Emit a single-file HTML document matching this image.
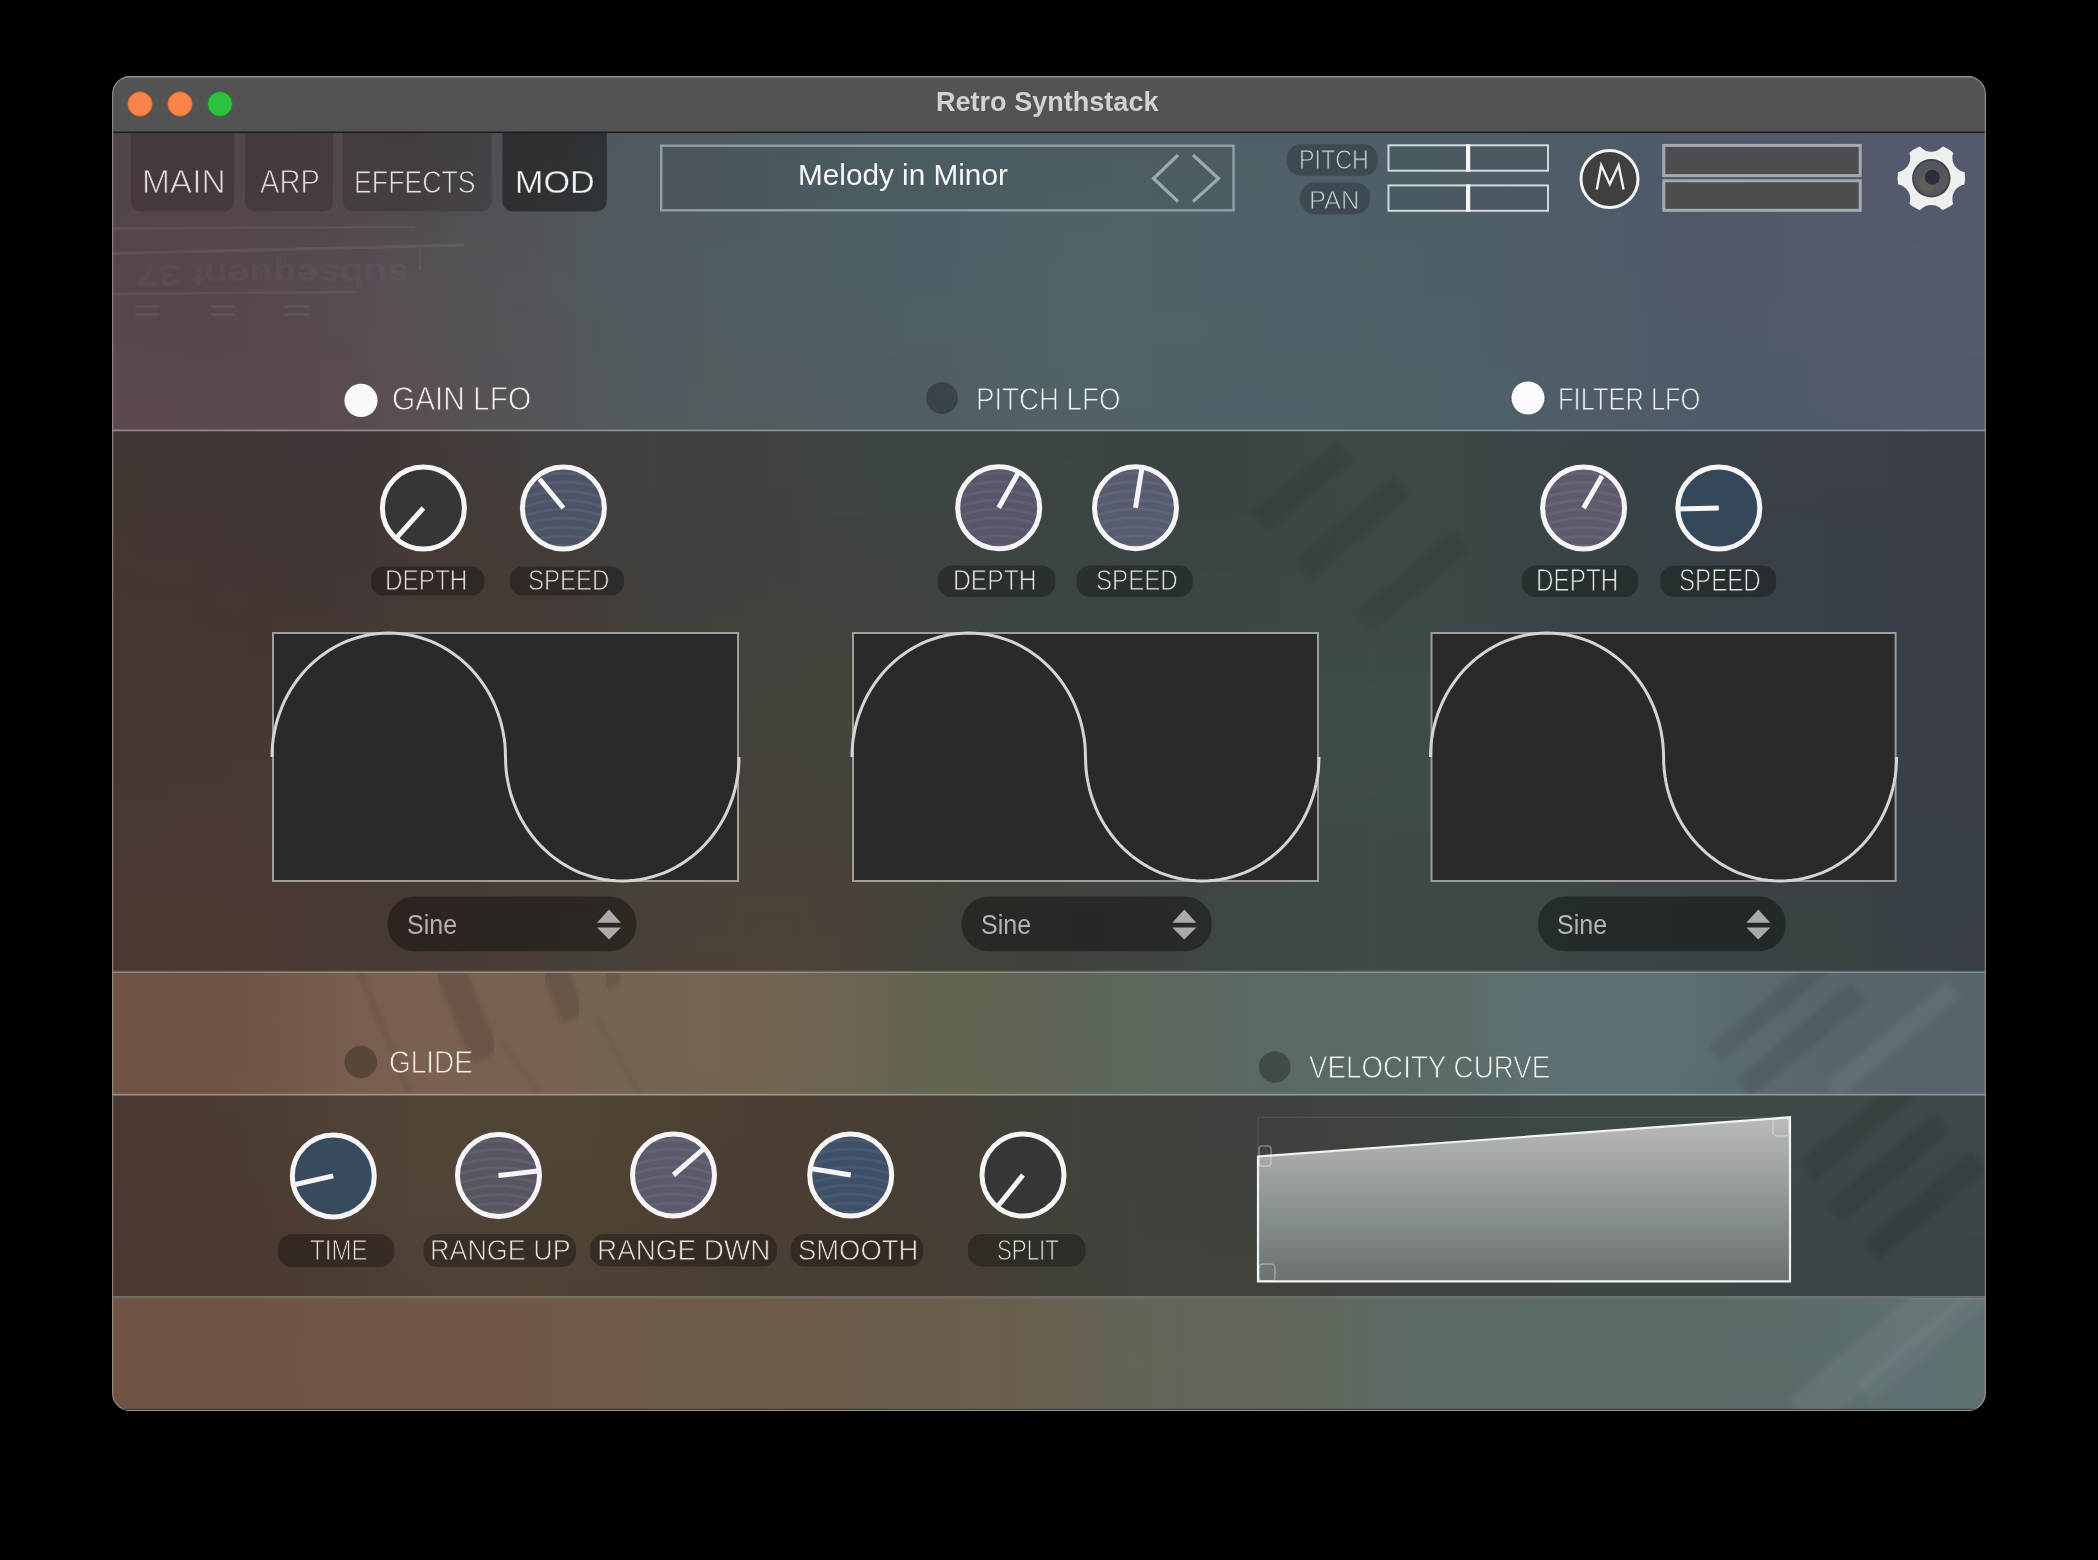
<!DOCTYPE html>
<html><head><meta charset="utf-8"><title>Retro Synthstack</title>
<style>
html,body{margin:0;padding:0;background:#000;width:2098px;height:1560px;overflow:hidden}
#win{position:absolute;left:0;top:0;width:2098px;height:1560px;clip-path:inset(76px 112px 149px 112px round 18px)}
.s{position:absolute;left:0;top:0}
.t{position:absolute;white-space:nowrap;font-family:'Liberation Sans', sans-serif;transform-origin:0 0}
</style></head><body>
<div id="win">
<svg class="s" width="2098" height="1560" viewBox="0 0 2098 1560"><defs><linearGradient id="b0" gradientUnits="userSpaceOnUse" x1="112" y1="0" x2="1986" y2="0"><stop offset="0.0000" stop-color="#52454b"/><stop offset="0.0320" stop-color="#51444a"/><stop offset="0.0640" stop-color="#51454b"/><stop offset="0.0961" stop-color="#51474d"/><stop offset="0.1281" stop-color="#50484e"/><stop offset="0.1601" stop-color="#4f484e"/><stop offset="0.1921" stop-color="#504c52"/><stop offset="0.2241" stop-color="#505358"/><stop offset="0.2561" stop-color="#50575d"/><stop offset="0.2882" stop-color="#4f595f"/><stop offset="0.3202" stop-color="#4f5a60"/><stop offset="0.3522" stop-color="#4f5c62"/><stop offset="0.3842" stop-color="#4e5e64"/><stop offset="0.4162" stop-color="#4e5f65"/><stop offset="0.4482" stop-color="#4e5f66"/><stop offset="0.4803" stop-color="#4f6066"/><stop offset="0.5123" stop-color="#506067"/><stop offset="0.5443" stop-color="#506067"/><stop offset="0.5763" stop-color="#4f6067"/><stop offset="0.6083" stop-color="#4f5f67"/><stop offset="0.6403" stop-color="#4f5f67"/><stop offset="0.6724" stop-color="#4f5f67"/><stop offset="0.7044" stop-color="#4f5f67"/><stop offset="0.7364" stop-color="#4f5e68"/><stop offset="0.7684" stop-color="#4f5d68"/><stop offset="0.8004" stop-color="#4f5b68"/><stop offset="0.8324" stop-color="#4f5968"/><stop offset="0.8645" stop-color="#505968"/><stop offset="0.8965" stop-color="#51596a"/><stop offset="0.9285" stop-color="#53596b"/><stop offset="0.9605" stop-color="#54596d"/><stop offset="0.9925" stop-color="#54596d"/><stop offset="1.0000" stop-color="#54596d"/></linearGradient><linearGradient id="b1" gradientUnits="userSpaceOnUse" x1="112" y1="0" x2="1986" y2="0"><stop offset="0.0000" stop-color="#52454b"/><stop offset="0.0320" stop-color="#51444a"/><stop offset="0.0640" stop-color="#51454b"/><stop offset="0.0961" stop-color="#51474d"/><stop offset="0.1281" stop-color="#50484e"/><stop offset="0.1601" stop-color="#4f494e"/><stop offset="0.1921" stop-color="#504d52"/><stop offset="0.2241" stop-color="#505359"/><stop offset="0.2561" stop-color="#50585d"/><stop offset="0.2882" stop-color="#4f595f"/><stop offset="0.3202" stop-color="#4f5b60"/><stop offset="0.3522" stop-color="#4f5c62"/><stop offset="0.3842" stop-color="#4e5e64"/><stop offset="0.4162" stop-color="#4e5f65"/><stop offset="0.4482" stop-color="#4e6066"/><stop offset="0.4803" stop-color="#4f6066"/><stop offset="0.5123" stop-color="#506067"/><stop offset="0.5443" stop-color="#506067"/><stop offset="0.5763" stop-color="#506067"/><stop offset="0.6083" stop-color="#4f6067"/><stop offset="0.6403" stop-color="#4f5f67"/><stop offset="0.6724" stop-color="#4f5f67"/><stop offset="0.7044" stop-color="#4f5f67"/><stop offset="0.7364" stop-color="#4f5e68"/><stop offset="0.7684" stop-color="#4f5d68"/><stop offset="0.8004" stop-color="#4f5b68"/><stop offset="0.8324" stop-color="#4f5968"/><stop offset="0.8645" stop-color="#4f5968"/><stop offset="0.8965" stop-color="#51596a"/><stop offset="0.9285" stop-color="#53596c"/><stop offset="0.9605" stop-color="#54596d"/><stop offset="0.9925" stop-color="#54596d"/><stop offset="1.0000" stop-color="#55596d"/></linearGradient><linearGradient id="b2" gradientUnits="userSpaceOnUse" x1="112" y1="0" x2="1986" y2="0"><stop offset="0.0000" stop-color="#52454b"/><stop offset="0.0320" stop-color="#51444a"/><stop offset="0.0640" stop-color="#52454b"/><stop offset="0.0961" stop-color="#52474d"/><stop offset="0.1281" stop-color="#50484e"/><stop offset="0.1601" stop-color="#50494f"/><stop offset="0.1921" stop-color="#514d53"/><stop offset="0.2241" stop-color="#515459"/><stop offset="0.2561" stop-color="#50585d"/><stop offset="0.2882" stop-color="#4f595f"/><stop offset="0.3202" stop-color="#4f5b60"/><stop offset="0.3522" stop-color="#4e5d62"/><stop offset="0.3842" stop-color="#4e5e64"/><stop offset="0.4162" stop-color="#4e5f66"/><stop offset="0.4482" stop-color="#4e6066"/><stop offset="0.4803" stop-color="#4f6067"/><stop offset="0.5123" stop-color="#506167"/><stop offset="0.5443" stop-color="#506168"/><stop offset="0.5763" stop-color="#506067"/><stop offset="0.6083" stop-color="#4f6067"/><stop offset="0.6403" stop-color="#4f5f67"/><stop offset="0.6724" stop-color="#4f5f67"/><stop offset="0.7044" stop-color="#4f5f67"/><stop offset="0.7364" stop-color="#4f5e68"/><stop offset="0.7684" stop-color="#4f5d68"/><stop offset="0.8004" stop-color="#4f5b68"/><stop offset="0.8324" stop-color="#4f5968"/><stop offset="0.8645" stop-color="#4f5968"/><stop offset="0.8965" stop-color="#51596a"/><stop offset="0.9285" stop-color="#53596c"/><stop offset="0.9605" stop-color="#54596d"/><stop offset="0.9925" stop-color="#55596d"/><stop offset="1.0000" stop-color="#55596d"/></linearGradient><linearGradient id="b3" gradientUnits="userSpaceOnUse" x1="112" y1="0" x2="1986" y2="0"><stop offset="0.0000" stop-color="#53454b"/><stop offset="0.0320" stop-color="#52454b"/><stop offset="0.0640" stop-color="#52464b"/><stop offset="0.0961" stop-color="#52474d"/><stop offset="0.1281" stop-color="#51484e"/><stop offset="0.1601" stop-color="#50494f"/><stop offset="0.1921" stop-color="#514e53"/><stop offset="0.2241" stop-color="#515459"/><stop offset="0.2561" stop-color="#50585d"/><stop offset="0.2882" stop-color="#4f5a5f"/><stop offset="0.3202" stop-color="#4f5b60"/><stop offset="0.3522" stop-color="#4e5d62"/><stop offset="0.3842" stop-color="#4e5e64"/><stop offset="0.4162" stop-color="#4e5f66"/><stop offset="0.4482" stop-color="#4e6066"/><stop offset="0.4803" stop-color="#4f6067"/><stop offset="0.5123" stop-color="#506167"/><stop offset="0.5443" stop-color="#506168"/><stop offset="0.5763" stop-color="#506068"/><stop offset="0.6083" stop-color="#4f6067"/><stop offset="0.6403" stop-color="#4f5f67"/><stop offset="0.6724" stop-color="#4f5f67"/><stop offset="0.7044" stop-color="#4f5f67"/><stop offset="0.7364" stop-color="#4f5e68"/><stop offset="0.7684" stop-color="#4f5d68"/><stop offset="0.8004" stop-color="#4f5b68"/><stop offset="0.8324" stop-color="#4f5968"/><stop offset="0.8645" stop-color="#4f5868"/><stop offset="0.8965" stop-color="#51596a"/><stop offset="0.9285" stop-color="#53596c"/><stop offset="0.9605" stop-color="#54596d"/><stop offset="0.9925" stop-color="#55596d"/><stop offset="1.0000" stop-color="#55596d"/></linearGradient><linearGradient id="b4" gradientUnits="userSpaceOnUse" x1="112" y1="0" x2="1986" y2="0"><stop offset="0.0000" stop-color="#53454b"/><stop offset="0.0320" stop-color="#53454b"/><stop offset="0.0640" stop-color="#53464c"/><stop offset="0.0961" stop-color="#52484d"/><stop offset="0.1281" stop-color="#51494f"/><stop offset="0.1601" stop-color="#514a50"/><stop offset="0.1921" stop-color="#524e54"/><stop offset="0.2241" stop-color="#51545a"/><stop offset="0.2561" stop-color="#50585e"/><stop offset="0.2882" stop-color="#4f5a5f"/><stop offset="0.3202" stop-color="#4f5b61"/><stop offset="0.3522" stop-color="#4e5d63"/><stop offset="0.3842" stop-color="#4e5e65"/><stop offset="0.4162" stop-color="#4e6066"/><stop offset="0.4482" stop-color="#4e6067"/><stop offset="0.4803" stop-color="#4f6067"/><stop offset="0.5123" stop-color="#506168"/><stop offset="0.5443" stop-color="#506168"/><stop offset="0.5763" stop-color="#506068"/><stop offset="0.6083" stop-color="#4f6067"/><stop offset="0.6403" stop-color="#4f6067"/><stop offset="0.6724" stop-color="#4f5f67"/><stop offset="0.7044" stop-color="#4f5f68"/><stop offset="0.7364" stop-color="#4f5e68"/><stop offset="0.7684" stop-color="#4f5d68"/><stop offset="0.8004" stop-color="#4f5b68"/><stop offset="0.8324" stop-color="#4f5968"/><stop offset="0.8645" stop-color="#4f5868"/><stop offset="0.8965" stop-color="#51596a"/><stop offset="0.9285" stop-color="#53596c"/><stop offset="0.9605" stop-color="#54596d"/><stop offset="0.9925" stop-color="#55596e"/><stop offset="1.0000" stop-color="#55596e"/></linearGradient><linearGradient id="b5" gradientUnits="userSpaceOnUse" x1="112" y1="0" x2="1986" y2="0"><stop offset="0.0000" stop-color="#54464c"/><stop offset="0.0320" stop-color="#53464b"/><stop offset="0.0640" stop-color="#53464c"/><stop offset="0.0961" stop-color="#53484e"/><stop offset="0.1281" stop-color="#52494f"/><stop offset="0.1601" stop-color="#514b51"/><stop offset="0.1921" stop-color="#524f55"/><stop offset="0.2241" stop-color="#51555a"/><stop offset="0.2561" stop-color="#50585e"/><stop offset="0.2882" stop-color="#4f5a5f"/><stop offset="0.3202" stop-color="#4f5b61"/><stop offset="0.3522" stop-color="#4e5d63"/><stop offset="0.3842" stop-color="#4e5f65"/><stop offset="0.4162" stop-color="#4e6066"/><stop offset="0.4482" stop-color="#4e6067"/><stop offset="0.4803" stop-color="#4f6067"/><stop offset="0.5123" stop-color="#506168"/><stop offset="0.5443" stop-color="#506168"/><stop offset="0.5763" stop-color="#506168"/><stop offset="0.6083" stop-color="#4f6068"/><stop offset="0.6403" stop-color="#4f6067"/><stop offset="0.6724" stop-color="#4f5f67"/><stop offset="0.7044" stop-color="#4f5f68"/><stop offset="0.7364" stop-color="#4f5e68"/><stop offset="0.7684" stop-color="#4f5e68"/><stop offset="0.8004" stop-color="#4f5b68"/><stop offset="0.8324" stop-color="#4f5968"/><stop offset="0.8645" stop-color="#4f5868"/><stop offset="0.8965" stop-color="#51596a"/><stop offset="0.9285" stop-color="#53596c"/><stop offset="0.9605" stop-color="#55596d"/><stop offset="0.9925" stop-color="#55596e"/><stop offset="1.0000" stop-color="#55596e"/></linearGradient><linearGradient id="b6" gradientUnits="userSpaceOnUse" x1="112" y1="0" x2="1986" y2="0"><stop offset="0.0000" stop-color="#54464c"/><stop offset="0.0320" stop-color="#54464c"/><stop offset="0.0640" stop-color="#54464c"/><stop offset="0.0961" stop-color="#53484e"/><stop offset="0.1281" stop-color="#524a50"/><stop offset="0.1601" stop-color="#524c52"/><stop offset="0.1921" stop-color="#535056"/><stop offset="0.2241" stop-color="#52555a"/><stop offset="0.2561" stop-color="#50595d"/><stop offset="0.2882" stop-color="#4f5a5f"/><stop offset="0.3202" stop-color="#4f5b61"/><stop offset="0.3522" stop-color="#4e5d63"/><stop offset="0.3842" stop-color="#4e5f65"/><stop offset="0.4162" stop-color="#4e6066"/><stop offset="0.4482" stop-color="#4e6067"/><stop offset="0.4803" stop-color="#4f6167"/><stop offset="0.5123" stop-color="#506268"/><stop offset="0.5443" stop-color="#516268"/><stop offset="0.5763" stop-color="#506168"/><stop offset="0.6083" stop-color="#4f6068"/><stop offset="0.6403" stop-color="#4f6067"/><stop offset="0.6724" stop-color="#4f5f67"/><stop offset="0.7044" stop-color="#4f5f68"/><stop offset="0.7364" stop-color="#4f5f68"/><stop offset="0.7684" stop-color="#4f5e68"/><stop offset="0.8004" stop-color="#4f5b68"/><stop offset="0.8324" stop-color="#4f5968"/><stop offset="0.8645" stop-color="#4f5868"/><stop offset="0.8965" stop-color="#51596a"/><stop offset="0.9285" stop-color="#53596c"/><stop offset="0.9605" stop-color="#55596d"/><stop offset="0.9925" stop-color="#55596e"/><stop offset="1.0000" stop-color="#55596e"/></linearGradient><linearGradient id="b7" gradientUnits="userSpaceOnUse" x1="112" y1="0" x2="1986" y2="0"><stop offset="0.0000" stop-color="#55464c"/><stop offset="0.0320" stop-color="#55464c"/><stop offset="0.0640" stop-color="#54474c"/><stop offset="0.0961" stop-color="#54484e"/><stop offset="0.1281" stop-color="#534b50"/><stop offset="0.1601" stop-color="#534d53"/><stop offset="0.1921" stop-color="#545156"/><stop offset="0.2241" stop-color="#52555a"/><stop offset="0.2561" stop-color="#50595d"/><stop offset="0.2882" stop-color="#4f5a5f"/><stop offset="0.3202" stop-color="#4f5b61"/><stop offset="0.3522" stop-color="#4e5d63"/><stop offset="0.3842" stop-color="#4e5f65"/><stop offset="0.4162" stop-color="#4e6066"/><stop offset="0.4482" stop-color="#4e6067"/><stop offset="0.4803" stop-color="#4f6167"/><stop offset="0.5123" stop-color="#516268"/><stop offset="0.5443" stop-color="#516269"/><stop offset="0.5763" stop-color="#506168"/><stop offset="0.6083" stop-color="#4f6068"/><stop offset="0.6403" stop-color="#4f6067"/><stop offset="0.6724" stop-color="#4f5f67"/><stop offset="0.7044" stop-color="#4f5f68"/><stop offset="0.7364" stop-color="#4f5f68"/><stop offset="0.7684" stop-color="#4f5e68"/><stop offset="0.8004" stop-color="#4f5b68"/><stop offset="0.8324" stop-color="#4f5968"/><stop offset="0.8645" stop-color="#4f5868"/><stop offset="0.8965" stop-color="#51596a"/><stop offset="0.9285" stop-color="#535a6c"/><stop offset="0.9605" stop-color="#55596d"/><stop offset="0.9925" stop-color="#55596e"/><stop offset="1.0000" stop-color="#55596e"/></linearGradient><linearGradient id="b8" gradientUnits="userSpaceOnUse" x1="112" y1="0" x2="1986" y2="0"><stop offset="0.0000" stop-color="#56464c"/><stop offset="0.0320" stop-color="#55464c"/><stop offset="0.0640" stop-color="#55474d"/><stop offset="0.0961" stop-color="#55494e"/><stop offset="0.1281" stop-color="#544b51"/><stop offset="0.1601" stop-color="#544e54"/><stop offset="0.1921" stop-color="#555257"/><stop offset="0.2241" stop-color="#52555a"/><stop offset="0.2561" stop-color="#50595d"/><stop offset="0.2882" stop-color="#4f5a5f"/><stop offset="0.3202" stop-color="#4f5c61"/><stop offset="0.3522" stop-color="#4e5e63"/><stop offset="0.3842" stop-color="#4e5f65"/><stop offset="0.4162" stop-color="#4e6066"/><stop offset="0.4482" stop-color="#4e6067"/><stop offset="0.4803" stop-color="#4f6167"/><stop offset="0.5123" stop-color="#516268"/><stop offset="0.5443" stop-color="#516269"/><stop offset="0.5763" stop-color="#506168"/><stop offset="0.6083" stop-color="#4f6068"/><stop offset="0.6403" stop-color="#4f6068"/><stop offset="0.6724" stop-color="#4f6067"/><stop offset="0.7044" stop-color="#4f5f68"/><stop offset="0.7364" stop-color="#4f5f68"/><stop offset="0.7684" stop-color="#4f5e69"/><stop offset="0.8004" stop-color="#4f5b68"/><stop offset="0.8324" stop-color="#4f5968"/><stop offset="0.8645" stop-color="#4f5868"/><stop offset="0.8965" stop-color="#51596a"/><stop offset="0.9285" stop-color="#535a6c"/><stop offset="0.9605" stop-color="#555a6d"/><stop offset="0.9925" stop-color="#55596e"/><stop offset="1.0000" stop-color="#55596e"/></linearGradient><linearGradient id="b9" gradientUnits="userSpaceOnUse" x1="112" y1="0" x2="1986" y2="0"><stop offset="0.0000" stop-color="#56474c"/><stop offset="0.0320" stop-color="#56474c"/><stop offset="0.0640" stop-color="#55474d"/><stop offset="0.0961" stop-color="#55494f"/><stop offset="0.1281" stop-color="#554c52"/><stop offset="0.1601" stop-color="#554f55"/><stop offset="0.1921" stop-color="#555258"/><stop offset="0.2241" stop-color="#53555a"/><stop offset="0.2561" stop-color="#50595d"/><stop offset="0.2882" stop-color="#505a5e"/><stop offset="0.3202" stop-color="#4f5c61"/><stop offset="0.3522" stop-color="#4e5e63"/><stop offset="0.3842" stop-color="#4e5f65"/><stop offset="0.4162" stop-color="#4e6066"/><stop offset="0.4482" stop-color="#4e6067"/><stop offset="0.4803" stop-color="#506167"/><stop offset="0.5123" stop-color="#516269"/><stop offset="0.5443" stop-color="#516269"/><stop offset="0.5763" stop-color="#506168"/><stop offset="0.6083" stop-color="#4f6068"/><stop offset="0.6403" stop-color="#4f6068"/><stop offset="0.6724" stop-color="#4f6067"/><stop offset="0.7044" stop-color="#4f5f68"/><stop offset="0.7364" stop-color="#4f5f68"/><stop offset="0.7684" stop-color="#4f5e69"/><stop offset="0.8004" stop-color="#4f5b68"/><stop offset="0.8324" stop-color="#4f5968"/><stop offset="0.8645" stop-color="#4f5868"/><stop offset="0.8965" stop-color="#51596a"/><stop offset="0.9285" stop-color="#535a6c"/><stop offset="0.9605" stop-color="#555a6d"/><stop offset="0.9925" stop-color="#55596e"/><stop offset="1.0000" stop-color="#55596e"/></linearGradient><linearGradient id="b10" gradientUnits="userSpaceOnUse" x1="112" y1="0" x2="1986" y2="0"><stop offset="0.0000" stop-color="#57474c"/><stop offset="0.0320" stop-color="#56474c"/><stop offset="0.0640" stop-color="#56474d"/><stop offset="0.0961" stop-color="#56494f"/><stop offset="0.1281" stop-color="#564c52"/><stop offset="0.1601" stop-color="#565056"/><stop offset="0.1921" stop-color="#565258"/><stop offset="0.2241" stop-color="#53565a"/><stop offset="0.2561" stop-color="#50595d"/><stop offset="0.2882" stop-color="#505a5e"/><stop offset="0.3202" stop-color="#4f5c61"/><stop offset="0.3522" stop-color="#4e5e63"/><stop offset="0.3842" stop-color="#4e5f64"/><stop offset="0.4162" stop-color="#4e6066"/><stop offset="0.4482" stop-color="#4e6067"/><stop offset="0.4803" stop-color="#506167"/><stop offset="0.5123" stop-color="#516269"/><stop offset="0.5443" stop-color="#516369"/><stop offset="0.5763" stop-color="#506168"/><stop offset="0.6083" stop-color="#4f6068"/><stop offset="0.6403" stop-color="#4f6068"/><stop offset="0.6724" stop-color="#4f6068"/><stop offset="0.7044" stop-color="#4f5f68"/><stop offset="0.7364" stop-color="#4f5f68"/><stop offset="0.7684" stop-color="#4f5e69"/><stop offset="0.8004" stop-color="#4f5c68"/><stop offset="0.8324" stop-color="#4f5968"/><stop offset="0.8645" stop-color="#4f5968"/><stop offset="0.8965" stop-color="#51596a"/><stop offset="0.9285" stop-color="#535a6c"/><stop offset="0.9605" stop-color="#555a6d"/><stop offset="0.9925" stop-color="#55596e"/><stop offset="1.0000" stop-color="#55596d"/></linearGradient><linearGradient id="b11" gradientUnits="userSpaceOnUse" x1="112" y1="0" x2="1986" y2="0"><stop offset="0.0000" stop-color="#57474c"/><stop offset="0.0320" stop-color="#57474d"/><stop offset="0.0640" stop-color="#56484d"/><stop offset="0.0961" stop-color="#564a4f"/><stop offset="0.1281" stop-color="#564d52"/><stop offset="0.1601" stop-color="#565056"/><stop offset="0.1921" stop-color="#565358"/><stop offset="0.2241" stop-color="#53565a"/><stop offset="0.2561" stop-color="#51595d"/><stop offset="0.2882" stop-color="#505a5e"/><stop offset="0.3202" stop-color="#4f5c60"/><stop offset="0.3522" stop-color="#4f5d63"/><stop offset="0.3842" stop-color="#4e5e64"/><stop offset="0.4162" stop-color="#4e5f66"/><stop offset="0.4482" stop-color="#4e6066"/><stop offset="0.4803" stop-color="#506167"/><stop offset="0.5123" stop-color="#516269"/><stop offset="0.5443" stop-color="#516369"/><stop offset="0.5763" stop-color="#506268"/><stop offset="0.6083" stop-color="#4f6068"/><stop offset="0.6403" stop-color="#4f6068"/><stop offset="0.6724" stop-color="#4f6068"/><stop offset="0.7044" stop-color="#4f5f68"/><stop offset="0.7364" stop-color="#4f5f68"/><stop offset="0.7684" stop-color="#4f5e69"/><stop offset="0.8004" stop-color="#4f5c68"/><stop offset="0.8324" stop-color="#4f5968"/><stop offset="0.8645" stop-color="#4f5968"/><stop offset="0.8965" stop-color="#51596a"/><stop offset="0.9285" stop-color="#535a6c"/><stop offset="0.9605" stop-color="#555a6d"/><stop offset="0.9925" stop-color="#555a6d"/><stop offset="1.0000" stop-color="#555a6d"/></linearGradient><linearGradient id="b12" gradientUnits="userSpaceOnUse" x1="112" y1="0" x2="1986" y2="0"><stop offset="0.0000" stop-color="#57474c"/><stop offset="0.0320" stop-color="#57474d"/><stop offset="0.0640" stop-color="#57484d"/><stop offset="0.0961" stop-color="#574a4f"/><stop offset="0.1281" stop-color="#574d52"/><stop offset="0.1601" stop-color="#575056"/><stop offset="0.1921" stop-color="#565358"/><stop offset="0.2241" stop-color="#53555a"/><stop offset="0.2561" stop-color="#51595c"/><stop offset="0.2882" stop-color="#505a5e"/><stop offset="0.3202" stop-color="#505c60"/><stop offset="0.3522" stop-color="#4f5d62"/><stop offset="0.3842" stop-color="#4e5e64"/><stop offset="0.4162" stop-color="#4e5f65"/><stop offset="0.4482" stop-color="#4f6066"/><stop offset="0.4803" stop-color="#506167"/><stop offset="0.5123" stop-color="#516269"/><stop offset="0.5443" stop-color="#516369"/><stop offset="0.5763" stop-color="#506268"/><stop offset="0.6083" stop-color="#506168"/><stop offset="0.6403" stop-color="#4f6068"/><stop offset="0.6724" stop-color="#4f6068"/><stop offset="0.7044" stop-color="#4f6068"/><stop offset="0.7364" stop-color="#4f5f68"/><stop offset="0.7684" stop-color="#4f5e68"/><stop offset="0.8004" stop-color="#4f5c68"/><stop offset="0.8324" stop-color="#4f5968"/><stop offset="0.8645" stop-color="#4f5968"/><stop offset="0.8965" stop-color="#505a6a"/><stop offset="0.9285" stop-color="#535a6c"/><stop offset="0.9605" stop-color="#555a6d"/><stop offset="0.9925" stop-color="#555a6d"/><stop offset="1.0000" stop-color="#555a6d"/></linearGradient><linearGradient id="b13" gradientUnits="userSpaceOnUse" x1="112" y1="0" x2="1986" y2="0"><stop offset="0.0000" stop-color="#58474c"/><stop offset="0.0320" stop-color="#57474d"/><stop offset="0.0640" stop-color="#57484e"/><stop offset="0.0961" stop-color="#574a4f"/><stop offset="0.1281" stop-color="#574d52"/><stop offset="0.1601" stop-color="#575056"/><stop offset="0.1921" stop-color="#565358"/><stop offset="0.2241" stop-color="#54555a"/><stop offset="0.2561" stop-color="#51585c"/><stop offset="0.2882" stop-color="#505a5e"/><stop offset="0.3202" stop-color="#505c60"/><stop offset="0.3522" stop-color="#4f5d62"/><stop offset="0.3842" stop-color="#4f5e63"/><stop offset="0.4162" stop-color="#4e5f65"/><stop offset="0.4482" stop-color="#4f6066"/><stop offset="0.4803" stop-color="#506167"/><stop offset="0.5123" stop-color="#516269"/><stop offset="0.5443" stop-color="#516369"/><stop offset="0.5763" stop-color="#516269"/><stop offset="0.6083" stop-color="#506168"/><stop offset="0.6403" stop-color="#4f6068"/><stop offset="0.6724" stop-color="#4f6067"/><stop offset="0.7044" stop-color="#4f6068"/><stop offset="0.7364" stop-color="#4f5f68"/><stop offset="0.7684" stop-color="#4f5e68"/><stop offset="0.8004" stop-color="#4f5c68"/><stop offset="0.8324" stop-color="#4f5a68"/><stop offset="0.8645" stop-color="#4f5968"/><stop offset="0.8965" stop-color="#505a69"/><stop offset="0.9285" stop-color="#535a6c"/><stop offset="0.9605" stop-color="#555a6d"/><stop offset="0.9925" stop-color="#555a6d"/><stop offset="1.0000" stop-color="#555a6d"/></linearGradient><linearGradient id="b14" gradientUnits="userSpaceOnUse" x1="112" y1="0" x2="1986" y2="0"><stop offset="0.0000" stop-color="#58474c"/><stop offset="0.0320" stop-color="#58474d"/><stop offset="0.0640" stop-color="#58484e"/><stop offset="0.0961" stop-color="#584a4f"/><stop offset="0.1281" stop-color="#584c52"/><stop offset="0.1601" stop-color="#575056"/><stop offset="0.1921" stop-color="#565358"/><stop offset="0.2241" stop-color="#54555a"/><stop offset="0.2561" stop-color="#51585c"/><stop offset="0.2882" stop-color="#515a5e"/><stop offset="0.3202" stop-color="#505c60"/><stop offset="0.3522" stop-color="#505d61"/><stop offset="0.3842" stop-color="#4f5e63"/><stop offset="0.4162" stop-color="#4f5f65"/><stop offset="0.4482" stop-color="#4f6066"/><stop offset="0.4803" stop-color="#506167"/><stop offset="0.5123" stop-color="#516269"/><stop offset="0.5443" stop-color="#516369"/><stop offset="0.5763" stop-color="#516268"/><stop offset="0.6083" stop-color="#506168"/><stop offset="0.6403" stop-color="#4f6068"/><stop offset="0.6724" stop-color="#4f6167"/><stop offset="0.7044" stop-color="#4f6068"/><stop offset="0.7364" stop-color="#4f5f68"/><stop offset="0.7684" stop-color="#4f5e68"/><stop offset="0.8004" stop-color="#4f5c68"/><stop offset="0.8324" stop-color="#4f5a68"/><stop offset="0.8645" stop-color="#4f5a68"/><stop offset="0.8965" stop-color="#505a69"/><stop offset="0.9285" stop-color="#525a6b"/><stop offset="0.9605" stop-color="#545a6d"/><stop offset="0.9925" stop-color="#555a6d"/><stop offset="1.0000" stop-color="#555a6d"/></linearGradient><linearGradient id="b15" gradientUnits="userSpaceOnUse" x1="112" y1="0" x2="1986" y2="0"><stop offset="0.0000" stop-color="#59484c"/><stop offset="0.0320" stop-color="#58484d"/><stop offset="0.0640" stop-color="#58484e"/><stop offset="0.0961" stop-color="#584a4f"/><stop offset="0.1281" stop-color="#584c51"/><stop offset="0.1601" stop-color="#575055"/><stop offset="0.1921" stop-color="#565358"/><stop offset="0.2241" stop-color="#54555a"/><stop offset="0.2561" stop-color="#51585c"/><stop offset="0.2882" stop-color="#515a5e"/><stop offset="0.3202" stop-color="#515c5f"/><stop offset="0.3522" stop-color="#505d61"/><stop offset="0.3842" stop-color="#4f5e62"/><stop offset="0.4162" stop-color="#4f5f64"/><stop offset="0.4482" stop-color="#4f5f65"/><stop offset="0.4803" stop-color="#506167"/><stop offset="0.5123" stop-color="#516268"/><stop offset="0.5443" stop-color="#516369"/><stop offset="0.5763" stop-color="#506268"/><stop offset="0.6083" stop-color="#506168"/><stop offset="0.6403" stop-color="#4f6167"/><stop offset="0.6724" stop-color="#4f6167"/><stop offset="0.7044" stop-color="#4f6068"/><stop offset="0.7364" stop-color="#4f5f68"/><stop offset="0.7684" stop-color="#4f5e68"/><stop offset="0.8004" stop-color="#4f5c68"/><stop offset="0.8324" stop-color="#4f5a68"/><stop offset="0.8645" stop-color="#4f5a68"/><stop offset="0.8965" stop-color="#505a69"/><stop offset="0.9285" stop-color="#525a6b"/><stop offset="0.9605" stop-color="#545a6d"/><stop offset="0.9925" stop-color="#555a6d"/><stop offset="1.0000" stop-color="#555a6d"/></linearGradient><linearGradient id="b16" gradientUnits="userSpaceOnUse" x1="112" y1="0" x2="1986" y2="0"><stop offset="0.0000" stop-color="#59484c"/><stop offset="0.0320" stop-color="#59484d"/><stop offset="0.0640" stop-color="#58494e"/><stop offset="0.0961" stop-color="#594a4f"/><stop offset="0.1281" stop-color="#594c51"/><stop offset="0.1601" stop-color="#585055"/><stop offset="0.1921" stop-color="#565258"/><stop offset="0.2241" stop-color="#54555a"/><stop offset="0.2561" stop-color="#52585c"/><stop offset="0.2882" stop-color="#515a5e"/><stop offset="0.3202" stop-color="#515c5f"/><stop offset="0.3522" stop-color="#515c60"/><stop offset="0.3842" stop-color="#505d62"/><stop offset="0.4162" stop-color="#4f5e64"/><stop offset="0.4482" stop-color="#4f5f65"/><stop offset="0.4803" stop-color="#506167"/><stop offset="0.5123" stop-color="#516268"/><stop offset="0.5443" stop-color="#516269"/><stop offset="0.5763" stop-color="#506268"/><stop offset="0.6083" stop-color="#506168"/><stop offset="0.6403" stop-color="#4f6167"/><stop offset="0.6724" stop-color="#4f6167"/><stop offset="0.7044" stop-color="#4e6167"/><stop offset="0.7364" stop-color="#4f5f68"/><stop offset="0.7684" stop-color="#4f5e68"/><stop offset="0.8004" stop-color="#4f5c68"/><stop offset="0.8324" stop-color="#4f5a68"/><stop offset="0.8645" stop-color="#4f5a68"/><stop offset="0.8965" stop-color="#4f5a69"/><stop offset="0.9285" stop-color="#525a6b"/><stop offset="0.9605" stop-color="#545a6c"/><stop offset="0.9925" stop-color="#545a6d"/><stop offset="1.0000" stop-color="#545a6d"/></linearGradient><linearGradient id="b17" gradientUnits="userSpaceOnUse" x1="112" y1="0" x2="1986" y2="0"><stop offset="0.0000" stop-color="#5a484c"/><stop offset="0.0320" stop-color="#59484d"/><stop offset="0.0640" stop-color="#59494e"/><stop offset="0.0961" stop-color="#594a4f"/><stop offset="0.1281" stop-color="#594c51"/><stop offset="0.1601" stop-color="#584f54"/><stop offset="0.1921" stop-color="#565258"/><stop offset="0.2241" stop-color="#54555a"/><stop offset="0.2561" stop-color="#52585c"/><stop offset="0.2882" stop-color="#515a5e"/><stop offset="0.3202" stop-color="#515c5f"/><stop offset="0.3522" stop-color="#515c60"/><stop offset="0.3842" stop-color="#505d62"/><stop offset="0.4162" stop-color="#4f5e63"/><stop offset="0.4482" stop-color="#4f5f65"/><stop offset="0.4803" stop-color="#506067"/><stop offset="0.5123" stop-color="#516268"/><stop offset="0.5443" stop-color="#516269"/><stop offset="0.5763" stop-color="#506268"/><stop offset="0.6083" stop-color="#506168"/><stop offset="0.6403" stop-color="#4f6167"/><stop offset="0.6724" stop-color="#4e6167"/><stop offset="0.7044" stop-color="#4e6167"/><stop offset="0.7364" stop-color="#4f6068"/><stop offset="0.7684" stop-color="#4f5e68"/><stop offset="0.8004" stop-color="#4f5c68"/><stop offset="0.8324" stop-color="#4f5a68"/><stop offset="0.8645" stop-color="#4f5a68"/><stop offset="0.8965" stop-color="#4f5a69"/><stop offset="0.9285" stop-color="#515a6a"/><stop offset="0.9605" stop-color="#545a6c"/><stop offset="0.9925" stop-color="#545a6d"/><stop offset="1.0000" stop-color="#545a6d"/></linearGradient><linearGradient id="b18" gradientUnits="userSpaceOnUse" x1="112" y1="0" x2="1986" y2="0"><stop offset="0.0000" stop-color="#5a484c"/><stop offset="0.0320" stop-color="#59484d"/><stop offset="0.0640" stop-color="#59494e"/><stop offset="0.0961" stop-color="#594a4f"/><stop offset="0.1281" stop-color="#594c51"/><stop offset="0.1601" stop-color="#584f54"/><stop offset="0.1921" stop-color="#565257"/><stop offset="0.2241" stop-color="#54555a"/><stop offset="0.2561" stop-color="#52585c"/><stop offset="0.2882" stop-color="#515a5e"/><stop offset="0.3202" stop-color="#525c5f"/><stop offset="0.3522" stop-color="#515c60"/><stop offset="0.3842" stop-color="#505d61"/><stop offset="0.4162" stop-color="#505e63"/><stop offset="0.4482" stop-color="#505f65"/><stop offset="0.4803" stop-color="#506066"/><stop offset="0.5123" stop-color="#516268"/><stop offset="0.5443" stop-color="#516268"/><stop offset="0.5763" stop-color="#506168"/><stop offset="0.6083" stop-color="#506168"/><stop offset="0.6403" stop-color="#4f6167"/><stop offset="0.6724" stop-color="#4e6167"/><stop offset="0.7044" stop-color="#4e6167"/><stop offset="0.7364" stop-color="#4f6068"/><stop offset="0.7684" stop-color="#4f5e68"/><stop offset="0.8004" stop-color="#4f5c68"/><stop offset="0.8324" stop-color="#4f5b68"/><stop offset="0.8645" stop-color="#4f5a68"/><stop offset="0.8965" stop-color="#4f5a69"/><stop offset="0.9285" stop-color="#515a6a"/><stop offset="0.9605" stop-color="#535a6c"/><stop offset="0.9925" stop-color="#545a6d"/><stop offset="1.0000" stop-color="#545a6d"/></linearGradient><linearGradient id="b19" gradientUnits="userSpaceOnUse" x1="112" y1="0" x2="1986" y2="0"><stop offset="0.0000" stop-color="#5a484c"/><stop offset="0.0320" stop-color="#5a484d"/><stop offset="0.0640" stop-color="#59494e"/><stop offset="0.0961" stop-color="#594a4f"/><stop offset="0.1281" stop-color="#594c51"/><stop offset="0.1601" stop-color="#584e54"/><stop offset="0.1921" stop-color="#565257"/><stop offset="0.2241" stop-color="#54555a"/><stop offset="0.2561" stop-color="#52585c"/><stop offset="0.2882" stop-color="#525a5e"/><stop offset="0.3202" stop-color="#525b5f"/><stop offset="0.3522" stop-color="#525c5f"/><stop offset="0.3842" stop-color="#515d61"/><stop offset="0.4162" stop-color="#505e63"/><stop offset="0.4482" stop-color="#505f64"/><stop offset="0.4803" stop-color="#506066"/><stop offset="0.5123" stop-color="#516168"/><stop offset="0.5443" stop-color="#516268"/><stop offset="0.5763" stop-color="#506168"/><stop offset="0.6083" stop-color="#4f6168"/><stop offset="0.6403" stop-color="#4f6167"/><stop offset="0.6724" stop-color="#4e6167"/><stop offset="0.7044" stop-color="#4e6167"/><stop offset="0.7364" stop-color="#4f6068"/><stop offset="0.7684" stop-color="#4f5e68"/><stop offset="0.8004" stop-color="#4f5c68"/><stop offset="0.8324" stop-color="#4f5b68"/><stop offset="0.8645" stop-color="#4f5a68"/><stop offset="0.8965" stop-color="#4f5a69"/><stop offset="0.9285" stop-color="#515a6a"/><stop offset="0.9605" stop-color="#535a6c"/><stop offset="0.9925" stop-color="#545a6c"/><stop offset="1.0000" stop-color="#545a6c"/></linearGradient><linearGradient id="b20" gradientUnits="userSpaceOnUse" x1="112" y1="0" x2="1986" y2="0"><stop offset="0.0000" stop-color="#5a484c"/><stop offset="0.0320" stop-color="#5a484d"/><stop offset="0.0640" stop-color="#59494e"/><stop offset="0.0961" stop-color="#594a4f"/><stop offset="0.1281" stop-color="#594c51"/><stop offset="0.1601" stop-color="#584e54"/><stop offset="0.1921" stop-color="#565257"/><stop offset="0.2241" stop-color="#545559"/><stop offset="0.2561" stop-color="#52585c"/><stop offset="0.2882" stop-color="#525a5e"/><stop offset="0.3202" stop-color="#525b5e"/><stop offset="0.3522" stop-color="#525c5f"/><stop offset="0.3842" stop-color="#515d61"/><stop offset="0.4162" stop-color="#505d62"/><stop offset="0.4482" stop-color="#505f64"/><stop offset="0.4803" stop-color="#506066"/><stop offset="0.5123" stop-color="#516167"/><stop offset="0.5443" stop-color="#516168"/><stop offset="0.5763" stop-color="#506168"/><stop offset="0.6083" stop-color="#4f6167"/><stop offset="0.6403" stop-color="#4f6167"/><stop offset="0.6724" stop-color="#4e6167"/><stop offset="0.7044" stop-color="#4e6167"/><stop offset="0.7364" stop-color="#4f6068"/><stop offset="0.7684" stop-color="#4f5e68"/><stop offset="0.8004" stop-color="#4f5c68"/><stop offset="0.8324" stop-color="#4f5b68"/><stop offset="0.8645" stop-color="#4f5a68"/><stop offset="0.8965" stop-color="#4f5a69"/><stop offset="0.9285" stop-color="#505a6a"/><stop offset="0.9605" stop-color="#525a6b"/><stop offset="0.9925" stop-color="#535a6c"/><stop offset="1.0000" stop-color="#545a6c"/></linearGradient><linearGradient id="b21" gradientUnits="userSpaceOnUse" x1="112" y1="0" x2="1986" y2="0"><stop offset="0.0000" stop-color="#5a484c"/><stop offset="0.0320" stop-color="#5a484d"/><stop offset="0.0640" stop-color="#59494e"/><stop offset="0.0961" stop-color="#594a4f"/><stop offset="0.1281" stop-color="#594c51"/><stop offset="0.1601" stop-color="#584e53"/><stop offset="0.1921" stop-color="#565157"/><stop offset="0.2241" stop-color="#545559"/><stop offset="0.2561" stop-color="#52585c"/><stop offset="0.2882" stop-color="#525a5e"/><stop offset="0.3202" stop-color="#525b5e"/><stop offset="0.3522" stop-color="#525c5f"/><stop offset="0.3842" stop-color="#515c60"/><stop offset="0.4162" stop-color="#505d62"/><stop offset="0.4482" stop-color="#505e64"/><stop offset="0.4803" stop-color="#506066"/><stop offset="0.5123" stop-color="#516167"/><stop offset="0.5443" stop-color="#516168"/><stop offset="0.5763" stop-color="#506168"/><stop offset="0.6083" stop-color="#4f6167"/><stop offset="0.6403" stop-color="#4f6167"/><stop offset="0.6724" stop-color="#4e6167"/><stop offset="0.7044" stop-color="#4e6167"/><stop offset="0.7364" stop-color="#4f6068"/><stop offset="0.7684" stop-color="#4f5e68"/><stop offset="0.8004" stop-color="#4f5c68"/><stop offset="0.8324" stop-color="#4f5b68"/><stop offset="0.8645" stop-color="#4f5a68"/><stop offset="0.8965" stop-color="#4f5a69"/><stop offset="0.9285" stop-color="#505a6a"/><stop offset="0.9605" stop-color="#525a6b"/><stop offset="0.9925" stop-color="#535a6c"/><stop offset="1.0000" stop-color="#535a6c"/></linearGradient><linearGradient id="b22" gradientUnits="userSpaceOnUse" x1="112" y1="0" x2="1986" y2="0"><stop offset="0.0000" stop-color="#423735"/><stop offset="0.0320" stop-color="#413635"/><stop offset="0.0640" stop-color="#413534"/><stop offset="0.0961" stop-color="#403534"/><stop offset="0.1281" stop-color="#413635"/><stop offset="0.1601" stop-color="#413837"/><stop offset="0.1921" stop-color="#423c39"/><stop offset="0.2241" stop-color="#423e3c"/><stop offset="0.2561" stop-color="#41403f"/><stop offset="0.2882" stop-color="#414140"/><stop offset="0.3202" stop-color="#40413f"/><stop offset="0.3522" stop-color="#3f4241"/><stop offset="0.3842" stop-color="#3d4443"/><stop offset="0.4162" stop-color="#3d4544"/><stop offset="0.4482" stop-color="#3d4543"/><stop offset="0.4803" stop-color="#3c4543"/><stop offset="0.5123" stop-color="#3b4442"/><stop offset="0.5443" stop-color="#394442"/><stop offset="0.5763" stop-color="#384441"/><stop offset="0.6083" stop-color="#394543"/><stop offset="0.6403" stop-color="#3c4747"/><stop offset="0.6724" stop-color="#3d4848"/><stop offset="0.7044" stop-color="#3c4747"/><stop offset="0.7364" stop-color="#3b4647"/><stop offset="0.7684" stop-color="#3a4446"/><stop offset="0.8004" stop-color="#3a4246"/><stop offset="0.8324" stop-color="#394147"/><stop offset="0.8645" stop-color="#3a4047"/><stop offset="0.8965" stop-color="#3a3f48"/><stop offset="0.9285" stop-color="#3a3f48"/><stop offset="0.9605" stop-color="#393e47"/><stop offset="0.9925" stop-color="#393d47"/><stop offset="1.0000" stop-color="#393d47"/></linearGradient><linearGradient id="b23" gradientUnits="userSpaceOnUse" x1="112" y1="0" x2="1986" y2="0"><stop offset="0.0000" stop-color="#423735"/><stop offset="0.0320" stop-color="#423635"/><stop offset="0.0640" stop-color="#413534"/><stop offset="0.0961" stop-color="#403534"/><stop offset="0.1281" stop-color="#413635"/><stop offset="0.1601" stop-color="#423836"/><stop offset="0.1921" stop-color="#423b39"/><stop offset="0.2241" stop-color="#423e3c"/><stop offset="0.2561" stop-color="#41403f"/><stop offset="0.2882" stop-color="#414140"/><stop offset="0.3202" stop-color="#40413f"/><stop offset="0.3522" stop-color="#3f4240"/><stop offset="0.3842" stop-color="#3d4443"/><stop offset="0.4162" stop-color="#3d4544"/><stop offset="0.4482" stop-color="#3d4543"/><stop offset="0.4803" stop-color="#3c4543"/><stop offset="0.5123" stop-color="#3b4442"/><stop offset="0.5443" stop-color="#394442"/><stop offset="0.5763" stop-color="#384441"/><stop offset="0.6083" stop-color="#394543"/><stop offset="0.6403" stop-color="#3c4747"/><stop offset="0.6724" stop-color="#3d4848"/><stop offset="0.7044" stop-color="#3c4747"/><stop offset="0.7364" stop-color="#3b4647"/><stop offset="0.7684" stop-color="#3a4446"/><stop offset="0.8004" stop-color="#394346"/><stop offset="0.8324" stop-color="#394147"/><stop offset="0.8645" stop-color="#3a4047"/><stop offset="0.8965" stop-color="#3a3f48"/><stop offset="0.9285" stop-color="#3a3f48"/><stop offset="0.9605" stop-color="#393e47"/><stop offset="0.9925" stop-color="#393d47"/><stop offset="1.0000" stop-color="#393d47"/></linearGradient><linearGradient id="b24" gradientUnits="userSpaceOnUse" x1="112" y1="0" x2="1986" y2="0"><stop offset="0.0000" stop-color="#433734"/><stop offset="0.0320" stop-color="#423634"/><stop offset="0.0640" stop-color="#413534"/><stop offset="0.0961" stop-color="#403534"/><stop offset="0.1281" stop-color="#413635"/><stop offset="0.1601" stop-color="#423836"/><stop offset="0.1921" stop-color="#423b39"/><stop offset="0.2241" stop-color="#423e3c"/><stop offset="0.2561" stop-color="#41403e"/><stop offset="0.2882" stop-color="#41413f"/><stop offset="0.3202" stop-color="#40413f"/><stop offset="0.3522" stop-color="#3f4240"/><stop offset="0.3842" stop-color="#3d4443"/><stop offset="0.4162" stop-color="#3d4543"/><stop offset="0.4482" stop-color="#3d4543"/><stop offset="0.4803" stop-color="#3c4543"/><stop offset="0.5123" stop-color="#3b4542"/><stop offset="0.5443" stop-color="#394442"/><stop offset="0.5763" stop-color="#384441"/><stop offset="0.6083" stop-color="#394543"/><stop offset="0.6403" stop-color="#3c4747"/><stop offset="0.6724" stop-color="#3d4848"/><stop offset="0.7044" stop-color="#3c4747"/><stop offset="0.7364" stop-color="#3b4647"/><stop offset="0.7684" stop-color="#3a4446"/><stop offset="0.8004" stop-color="#394346"/><stop offset="0.8324" stop-color="#394147"/><stop offset="0.8645" stop-color="#3a4047"/><stop offset="0.8965" stop-color="#3a3f48"/><stop offset="0.9285" stop-color="#3a3f48"/><stop offset="0.9605" stop-color="#393e47"/><stop offset="0.9925" stop-color="#393d47"/><stop offset="1.0000" stop-color="#393d47"/></linearGradient><linearGradient id="b25" gradientUnits="userSpaceOnUse" x1="112" y1="0" x2="1986" y2="0"><stop offset="0.0000" stop-color="#433734"/><stop offset="0.0320" stop-color="#423634"/><stop offset="0.0640" stop-color="#413534"/><stop offset="0.0961" stop-color="#413534"/><stop offset="0.1281" stop-color="#413635"/><stop offset="0.1601" stop-color="#423836"/><stop offset="0.1921" stop-color="#433b38"/><stop offset="0.2241" stop-color="#423e3b"/><stop offset="0.2561" stop-color="#41403e"/><stop offset="0.2882" stop-color="#41413f"/><stop offset="0.3202" stop-color="#40403e"/><stop offset="0.3522" stop-color="#3f4240"/><stop offset="0.3842" stop-color="#3e4443"/><stop offset="0.4162" stop-color="#3d4543"/><stop offset="0.4482" stop-color="#3d4543"/><stop offset="0.4803" stop-color="#3c4543"/><stop offset="0.5123" stop-color="#3b4543"/><stop offset="0.5443" stop-color="#394442"/><stop offset="0.5763" stop-color="#384442"/><stop offset="0.6083" stop-color="#394543"/><stop offset="0.6403" stop-color="#3c4746"/><stop offset="0.6724" stop-color="#3c4848"/><stop offset="0.7044" stop-color="#3c4747"/><stop offset="0.7364" stop-color="#3b4647"/><stop offset="0.7684" stop-color="#3a4446"/><stop offset="0.8004" stop-color="#394346"/><stop offset="0.8324" stop-color="#394146"/><stop offset="0.8645" stop-color="#394047"/><stop offset="0.8965" stop-color="#3a3f48"/><stop offset="0.9285" stop-color="#3a3f48"/><stop offset="0.9605" stop-color="#393e47"/><stop offset="0.9925" stop-color="#393d47"/><stop offset="1.0000" stop-color="#393d47"/></linearGradient><linearGradient id="b26" gradientUnits="userSpaceOnUse" x1="112" y1="0" x2="1986" y2="0"><stop offset="0.0000" stop-color="#433734"/><stop offset="0.0320" stop-color="#423634"/><stop offset="0.0640" stop-color="#413534"/><stop offset="0.0961" stop-color="#413534"/><stop offset="0.1281" stop-color="#413635"/><stop offset="0.1601" stop-color="#423836"/><stop offset="0.1921" stop-color="#433b38"/><stop offset="0.2241" stop-color="#423d3b"/><stop offset="0.2561" stop-color="#41403e"/><stop offset="0.2882" stop-color="#41403f"/><stop offset="0.3202" stop-color="#40403e"/><stop offset="0.3522" stop-color="#3f423f"/><stop offset="0.3842" stop-color="#3e4442"/><stop offset="0.4162" stop-color="#3d4543"/><stop offset="0.4482" stop-color="#3d4543"/><stop offset="0.4803" stop-color="#3c4543"/><stop offset="0.5123" stop-color="#3b4543"/><stop offset="0.5443" stop-color="#3a4542"/><stop offset="0.5763" stop-color="#394442"/><stop offset="0.6083" stop-color="#394543"/><stop offset="0.6403" stop-color="#3b4746"/><stop offset="0.6724" stop-color="#3c4848"/><stop offset="0.7044" stop-color="#3c4747"/><stop offset="0.7364" stop-color="#3b4647"/><stop offset="0.7684" stop-color="#3a4446"/><stop offset="0.8004" stop-color="#394346"/><stop offset="0.8324" stop-color="#394246"/><stop offset="0.8645" stop-color="#394047"/><stop offset="0.8965" stop-color="#3a3f48"/><stop offset="0.9285" stop-color="#3a3f47"/><stop offset="0.9605" stop-color="#393e47"/><stop offset="0.9925" stop-color="#393d47"/><stop offset="1.0000" stop-color="#393d47"/></linearGradient><linearGradient id="b27" gradientUnits="userSpaceOnUse" x1="112" y1="0" x2="1986" y2="0"><stop offset="0.0000" stop-color="#433734"/><stop offset="0.0320" stop-color="#423634"/><stop offset="0.0640" stop-color="#413534"/><stop offset="0.0961" stop-color="#413534"/><stop offset="0.1281" stop-color="#413635"/><stop offset="0.1601" stop-color="#423936"/><stop offset="0.1921" stop-color="#433b38"/><stop offset="0.2241" stop-color="#433d3a"/><stop offset="0.2561" stop-color="#423f3d"/><stop offset="0.2882" stop-color="#41403e"/><stop offset="0.3202" stop-color="#40403e"/><stop offset="0.3522" stop-color="#3f423f"/><stop offset="0.3842" stop-color="#3e4442"/><stop offset="0.4162" stop-color="#3d4543"/><stop offset="0.4482" stop-color="#3d4543"/><stop offset="0.4803" stop-color="#3c4543"/><stop offset="0.5123" stop-color="#3b4543"/><stop offset="0.5443" stop-color="#3a4543"/><stop offset="0.5763" stop-color="#394442"/><stop offset="0.6083" stop-color="#394543"/><stop offset="0.6403" stop-color="#3b4746"/><stop offset="0.6724" stop-color="#3c4847"/><stop offset="0.7044" stop-color="#3c4747"/><stop offset="0.7364" stop-color="#3b4647"/><stop offset="0.7684" stop-color="#3a4446"/><stop offset="0.8004" stop-color="#394346"/><stop offset="0.8324" stop-color="#394246"/><stop offset="0.8645" stop-color="#394047"/><stop offset="0.8965" stop-color="#3a3f47"/><stop offset="0.9285" stop-color="#3a3f47"/><stop offset="0.9605" stop-color="#393e47"/><stop offset="0.9925" stop-color="#393e47"/><stop offset="1.0000" stop-color="#393e47"/></linearGradient><linearGradient id="b28" gradientUnits="userSpaceOnUse" x1="112" y1="0" x2="1986" y2="0"><stop offset="0.0000" stop-color="#433734"/><stop offset="0.0320" stop-color="#433634"/><stop offset="0.0640" stop-color="#423634"/><stop offset="0.0961" stop-color="#413534"/><stop offset="0.1281" stop-color="#413635"/><stop offset="0.1601" stop-color="#433936"/><stop offset="0.1921" stop-color="#433b37"/><stop offset="0.2241" stop-color="#433d39"/><stop offset="0.2561" stop-color="#423f3c"/><stop offset="0.2882" stop-color="#41403e"/><stop offset="0.3202" stop-color="#40403e"/><stop offset="0.3522" stop-color="#3f413f"/><stop offset="0.3842" stop-color="#3e4341"/><stop offset="0.4162" stop-color="#3e4442"/><stop offset="0.4482" stop-color="#3d4442"/><stop offset="0.4803" stop-color="#3c4543"/><stop offset="0.5123" stop-color="#3b4543"/><stop offset="0.5443" stop-color="#3a4543"/><stop offset="0.5763" stop-color="#394542"/><stop offset="0.6083" stop-color="#3a4544"/><stop offset="0.6403" stop-color="#3b4746"/><stop offset="0.6724" stop-color="#3c4847"/><stop offset="0.7044" stop-color="#3c4747"/><stop offset="0.7364" stop-color="#3b4647"/><stop offset="0.7684" stop-color="#394446"/><stop offset="0.8004" stop-color="#384346"/><stop offset="0.8324" stop-color="#384246"/><stop offset="0.8645" stop-color="#394147"/><stop offset="0.8965" stop-color="#394047"/><stop offset="0.9285" stop-color="#3a3f47"/><stop offset="0.9605" stop-color="#393e47"/><stop offset="0.9925" stop-color="#393e47"/><stop offset="1.0000" stop-color="#393e47"/></linearGradient><linearGradient id="b29" gradientUnits="userSpaceOnUse" x1="112" y1="0" x2="1986" y2="0"><stop offset="0.0000" stop-color="#443734"/><stop offset="0.0320" stop-color="#433634"/><stop offset="0.0640" stop-color="#423634"/><stop offset="0.0961" stop-color="#413634"/><stop offset="0.1281" stop-color="#423735"/><stop offset="0.1601" stop-color="#433936"/><stop offset="0.1921" stop-color="#443b37"/><stop offset="0.2241" stop-color="#433c39"/><stop offset="0.2561" stop-color="#423f3c"/><stop offset="0.2882" stop-color="#41403d"/><stop offset="0.3202" stop-color="#40403e"/><stop offset="0.3522" stop-color="#40413f"/><stop offset="0.3842" stop-color="#3f4341"/><stop offset="0.4162" stop-color="#3e4442"/><stop offset="0.4482" stop-color="#3d4442"/><stop offset="0.4803" stop-color="#3c4543"/><stop offset="0.5123" stop-color="#3b4543"/><stop offset="0.5443" stop-color="#3a4543"/><stop offset="0.5763" stop-color="#3a4543"/><stop offset="0.6083" stop-color="#3a4544"/><stop offset="0.6403" stop-color="#3b4746"/><stop offset="0.6724" stop-color="#3c4847"/><stop offset="0.7044" stop-color="#3c4747"/><stop offset="0.7364" stop-color="#3b4647"/><stop offset="0.7684" stop-color="#394446"/><stop offset="0.8004" stop-color="#384346"/><stop offset="0.8324" stop-color="#384246"/><stop offset="0.8645" stop-color="#394146"/><stop offset="0.8965" stop-color="#394047"/><stop offset="0.9285" stop-color="#393f47"/><stop offset="0.9605" stop-color="#393e47"/><stop offset="0.9925" stop-color="#393e47"/><stop offset="1.0000" stop-color="#393e47"/></linearGradient><linearGradient id="b30" gradientUnits="userSpaceOnUse" x1="112" y1="0" x2="1986" y2="0"><stop offset="0.0000" stop-color="#443734"/><stop offset="0.0320" stop-color="#433634"/><stop offset="0.0640" stop-color="#423634"/><stop offset="0.0961" stop-color="#423634"/><stop offset="0.1281" stop-color="#423735"/><stop offset="0.1601" stop-color="#433936"/><stop offset="0.1921" stop-color="#443b37"/><stop offset="0.2241" stop-color="#433c38"/><stop offset="0.2561" stop-color="#423e3b"/><stop offset="0.2882" stop-color="#41403d"/><stop offset="0.3202" stop-color="#40403e"/><stop offset="0.3522" stop-color="#40413f"/><stop offset="0.3842" stop-color="#3f4340"/><stop offset="0.4162" stop-color="#3e4441"/><stop offset="0.4482" stop-color="#3d4442"/><stop offset="0.4803" stop-color="#3c4543"/><stop offset="0.5123" stop-color="#3b4543"/><stop offset="0.5443" stop-color="#3a4543"/><stop offset="0.5763" stop-color="#3a4543"/><stop offset="0.6083" stop-color="#3a4644"/><stop offset="0.6403" stop-color="#3b4746"/><stop offset="0.6724" stop-color="#3c4847"/><stop offset="0.7044" stop-color="#3c4747"/><stop offset="0.7364" stop-color="#3b4647"/><stop offset="0.7684" stop-color="#394446"/><stop offset="0.8004" stop-color="#384346"/><stop offset="0.8324" stop-color="#384246"/><stop offset="0.8645" stop-color="#394146"/><stop offset="0.8965" stop-color="#394047"/><stop offset="0.9285" stop-color="#393f47"/><stop offset="0.9605" stop-color="#393e47"/><stop offset="0.9925" stop-color="#393e47"/><stop offset="1.0000" stop-color="#393e47"/></linearGradient><linearGradient id="b31" gradientUnits="userSpaceOnUse" x1="112" y1="0" x2="1986" y2="0"><stop offset="0.0000" stop-color="#443734"/><stop offset="0.0320" stop-color="#443734"/><stop offset="0.0640" stop-color="#433634"/><stop offset="0.0961" stop-color="#423634"/><stop offset="0.1281" stop-color="#423735"/><stop offset="0.1601" stop-color="#433936"/><stop offset="0.1921" stop-color="#443b36"/><stop offset="0.2241" stop-color="#443c38"/><stop offset="0.2561" stop-color="#423e3b"/><stop offset="0.2882" stop-color="#41403d"/><stop offset="0.3202" stop-color="#40403d"/><stop offset="0.3522" stop-color="#40413e"/><stop offset="0.3842" stop-color="#404340"/><stop offset="0.4162" stop-color="#3f4441"/><stop offset="0.4482" stop-color="#3e4442"/><stop offset="0.4803" stop-color="#3c4543"/><stop offset="0.5123" stop-color="#3b4543"/><stop offset="0.5443" stop-color="#3a4543"/><stop offset="0.5763" stop-color="#3a4543"/><stop offset="0.6083" stop-color="#3a4644"/><stop offset="0.6403" stop-color="#3b4746"/><stop offset="0.6724" stop-color="#3c4847"/><stop offset="0.7044" stop-color="#3c4747"/><stop offset="0.7364" stop-color="#3b4647"/><stop offset="0.7684" stop-color="#394446"/><stop offset="0.8004" stop-color="#384345"/><stop offset="0.8324" stop-color="#384346"/><stop offset="0.8645" stop-color="#384146"/><stop offset="0.8965" stop-color="#394047"/><stop offset="0.9285" stop-color="#393f47"/><stop offset="0.9605" stop-color="#393e47"/><stop offset="0.9925" stop-color="#393e47"/><stop offset="1.0000" stop-color="#393e47"/></linearGradient><linearGradient id="b32" gradientUnits="userSpaceOnUse" x1="112" y1="0" x2="1986" y2="0"><stop offset="0.0000" stop-color="#443733"/><stop offset="0.0320" stop-color="#443734"/><stop offset="0.0640" stop-color="#433634"/><stop offset="0.0961" stop-color="#423734"/><stop offset="0.1281" stop-color="#433835"/><stop offset="0.1601" stop-color="#443a36"/><stop offset="0.1921" stop-color="#443b36"/><stop offset="0.2241" stop-color="#443b37"/><stop offset="0.2561" stop-color="#433e3a"/><stop offset="0.2882" stop-color="#413f3c"/><stop offset="0.3202" stop-color="#41403d"/><stop offset="0.3522" stop-color="#41413e"/><stop offset="0.3842" stop-color="#40433f"/><stop offset="0.4162" stop-color="#3f4440"/><stop offset="0.4482" stop-color="#3e4441"/><stop offset="0.4803" stop-color="#3c4543"/><stop offset="0.5123" stop-color="#3b4643"/><stop offset="0.5443" stop-color="#3a4644"/><stop offset="0.5763" stop-color="#3a4544"/><stop offset="0.6083" stop-color="#3b4645"/><stop offset="0.6403" stop-color="#3c4746"/><stop offset="0.6724" stop-color="#3c4847"/><stop offset="0.7044" stop-color="#3c4748"/><stop offset="0.7364" stop-color="#3b4647"/><stop offset="0.7684" stop-color="#394446"/><stop offset="0.8004" stop-color="#384345"/><stop offset="0.8324" stop-color="#384345"/><stop offset="0.8645" stop-color="#384246"/><stop offset="0.8965" stop-color="#394047"/><stop offset="0.9285" stop-color="#393f47"/><stop offset="0.9605" stop-color="#393e47"/><stop offset="0.9925" stop-color="#393e47"/><stop offset="1.0000" stop-color="#393e47"/></linearGradient><linearGradient id="b33" gradientUnits="userSpaceOnUse" x1="112" y1="0" x2="1986" y2="0"><stop offset="0.0000" stop-color="#453733"/><stop offset="0.0320" stop-color="#443733"/><stop offset="0.0640" stop-color="#443734"/><stop offset="0.0961" stop-color="#433734"/><stop offset="0.1281" stop-color="#433835"/><stop offset="0.1601" stop-color="#443a36"/><stop offset="0.1921" stop-color="#443a36"/><stop offset="0.2241" stop-color="#443b37"/><stop offset="0.2561" stop-color="#433d3a"/><stop offset="0.2882" stop-color="#423f3c"/><stop offset="0.3202" stop-color="#41403d"/><stop offset="0.3522" stop-color="#41413e"/><stop offset="0.3842" stop-color="#41433f"/><stop offset="0.4162" stop-color="#404340"/><stop offset="0.4482" stop-color="#3e4441"/><stop offset="0.4803" stop-color="#3c4543"/><stop offset="0.5123" stop-color="#3b4643"/><stop offset="0.5443" stop-color="#3a4644"/><stop offset="0.5763" stop-color="#3a4644"/><stop offset="0.6083" stop-color="#3b4645"/><stop offset="0.6403" stop-color="#3c4746"/><stop offset="0.6724" stop-color="#3c4848"/><stop offset="0.7044" stop-color="#3c4848"/><stop offset="0.7364" stop-color="#3b4647"/><stop offset="0.7684" stop-color="#394446"/><stop offset="0.8004" stop-color="#384345"/><stop offset="0.8324" stop-color="#384345"/><stop offset="0.8645" stop-color="#384246"/><stop offset="0.8965" stop-color="#394047"/><stop offset="0.9285" stop-color="#393f47"/><stop offset="0.9605" stop-color="#393e47"/><stop offset="0.9925" stop-color="#393e47"/><stop offset="1.0000" stop-color="#393e47"/></linearGradient><linearGradient id="b34" gradientUnits="userSpaceOnUse" x1="112" y1="0" x2="1986" y2="0"><stop offset="0.0000" stop-color="#453733"/><stop offset="0.0320" stop-color="#453733"/><stop offset="0.0640" stop-color="#443734"/><stop offset="0.0961" stop-color="#433734"/><stop offset="0.1281" stop-color="#433835"/><stop offset="0.1601" stop-color="#443a36"/><stop offset="0.1921" stop-color="#443a36"/><stop offset="0.2241" stop-color="#443b37"/><stop offset="0.2561" stop-color="#433d39"/><stop offset="0.2882" stop-color="#423f3c"/><stop offset="0.3202" stop-color="#41403d"/><stop offset="0.3522" stop-color="#42423d"/><stop offset="0.3842" stop-color="#41433e"/><stop offset="0.4162" stop-color="#40433f"/><stop offset="0.4482" stop-color="#3e4441"/><stop offset="0.4803" stop-color="#3c4543"/><stop offset="0.5123" stop-color="#3b4643"/><stop offset="0.5443" stop-color="#3a4644"/><stop offset="0.5763" stop-color="#3b4644"/><stop offset="0.6083" stop-color="#3b4645"/><stop offset="0.6403" stop-color="#3c4847"/><stop offset="0.6724" stop-color="#3c4848"/><stop offset="0.7044" stop-color="#3c4848"/><stop offset="0.7364" stop-color="#3b4647"/><stop offset="0.7684" stop-color="#394446"/><stop offset="0.8004" stop-color="#384345"/><stop offset="0.8324" stop-color="#384345"/><stop offset="0.8645" stop-color="#384246"/><stop offset="0.8965" stop-color="#394046"/><stop offset="0.9285" stop-color="#393f47"/><stop offset="0.9605" stop-color="#393e47"/><stop offset="0.9925" stop-color="#393e47"/><stop offset="1.0000" stop-color="#393e47"/></linearGradient><linearGradient id="b35" gradientUnits="userSpaceOnUse" x1="112" y1="0" x2="1986" y2="0"><stop offset="0.0000" stop-color="#453733"/><stop offset="0.0320" stop-color="#453733"/><stop offset="0.0640" stop-color="#443733"/><stop offset="0.0961" stop-color="#443734"/><stop offset="0.1281" stop-color="#443835"/><stop offset="0.1601" stop-color="#443a36"/><stop offset="0.1921" stop-color="#443a36"/><stop offset="0.2241" stop-color="#443b37"/><stop offset="0.2561" stop-color="#433d39"/><stop offset="0.2882" stop-color="#423f3c"/><stop offset="0.3202" stop-color="#42413d"/><stop offset="0.3522" stop-color="#42423d"/><stop offset="0.3842" stop-color="#42433e"/><stop offset="0.4162" stop-color="#41433f"/><stop offset="0.4482" stop-color="#3f4441"/><stop offset="0.4803" stop-color="#3c4542"/><stop offset="0.5123" stop-color="#3b4643"/><stop offset="0.5443" stop-color="#3b4644"/><stop offset="0.5763" stop-color="#3b4644"/><stop offset="0.6083" stop-color="#3b4745"/><stop offset="0.6403" stop-color="#3c4847"/><stop offset="0.6724" stop-color="#3d4948"/><stop offset="0.7044" stop-color="#3c4848"/><stop offset="0.7364" stop-color="#3b4647"/><stop offset="0.7684" stop-color="#394446"/><stop offset="0.8004" stop-color="#384345"/><stop offset="0.8324" stop-color="#384345"/><stop offset="0.8645" stop-color="#384246"/><stop offset="0.8965" stop-color="#394046"/><stop offset="0.9285" stop-color="#393f47"/><stop offset="0.9605" stop-color="#393e47"/><stop offset="0.9925" stop-color="#393e47"/><stop offset="1.0000" stop-color="#393e47"/></linearGradient><linearGradient id="b36" gradientUnits="userSpaceOnUse" x1="112" y1="0" x2="1986" y2="0"><stop offset="0.0000" stop-color="#453733"/><stop offset="0.0320" stop-color="#453733"/><stop offset="0.0640" stop-color="#453733"/><stop offset="0.0961" stop-color="#443734"/><stop offset="0.1281" stop-color="#443935"/><stop offset="0.1601" stop-color="#443a36"/><stop offset="0.1921" stop-color="#443a36"/><stop offset="0.2241" stop-color="#443b37"/><stop offset="0.2561" stop-color="#433d39"/><stop offset="0.2882" stop-color="#423f3b"/><stop offset="0.3202" stop-color="#42413c"/><stop offset="0.3522" stop-color="#43423d"/><stop offset="0.3842" stop-color="#43433d"/><stop offset="0.4162" stop-color="#41433f"/><stop offset="0.4482" stop-color="#3f4440"/><stop offset="0.4803" stop-color="#3c4542"/><stop offset="0.5123" stop-color="#3b4643"/><stop offset="0.5443" stop-color="#3b4644"/><stop offset="0.5763" stop-color="#3b4644"/><stop offset="0.6083" stop-color="#3c4746"/><stop offset="0.6403" stop-color="#3c4848"/><stop offset="0.6724" stop-color="#3d4949"/><stop offset="0.7044" stop-color="#3c4949"/><stop offset="0.7364" stop-color="#3b4748"/><stop offset="0.7684" stop-color="#394446"/><stop offset="0.8004" stop-color="#384345"/><stop offset="0.8324" stop-color="#384345"/><stop offset="0.8645" stop-color="#384246"/><stop offset="0.8965" stop-color="#394046"/><stop offset="0.9285" stop-color="#393f47"/><stop offset="0.9605" stop-color="#393e47"/><stop offset="0.9925" stop-color="#393e47"/><stop offset="1.0000" stop-color="#393e47"/></linearGradient><linearGradient id="b37" gradientUnits="userSpaceOnUse" x1="112" y1="0" x2="1986" y2="0"><stop offset="0.0000" stop-color="#453733"/><stop offset="0.0320" stop-color="#453733"/><stop offset="0.0640" stop-color="#453733"/><stop offset="0.0961" stop-color="#443834"/><stop offset="0.1281" stop-color="#443935"/><stop offset="0.1601" stop-color="#443a36"/><stop offset="0.1921" stop-color="#443b36"/><stop offset="0.2241" stop-color="#443b37"/><stop offset="0.2561" stop-color="#433d39"/><stop offset="0.2882" stop-color="#433f3b"/><stop offset="0.3202" stop-color="#43413c"/><stop offset="0.3522" stop-color="#43423c"/><stop offset="0.3842" stop-color="#43433d"/><stop offset="0.4162" stop-color="#42433e"/><stop offset="0.4482" stop-color="#3f4440"/><stop offset="0.4803" stop-color="#3d4542"/><stop offset="0.5123" stop-color="#3b4643"/><stop offset="0.5443" stop-color="#3b4644"/><stop offset="0.5763" stop-color="#3b4644"/><stop offset="0.6083" stop-color="#3c4746"/><stop offset="0.6403" stop-color="#3d4948"/><stop offset="0.6724" stop-color="#3d4a49"/><stop offset="0.7044" stop-color="#3d4949"/><stop offset="0.7364" stop-color="#3b4748"/><stop offset="0.7684" stop-color="#394446"/><stop offset="0.8004" stop-color="#384345"/><stop offset="0.8324" stop-color="#384345"/><stop offset="0.8645" stop-color="#384246"/><stop offset="0.8965" stop-color="#394046"/><stop offset="0.9285" stop-color="#393f47"/><stop offset="0.9605" stop-color="#393e47"/><stop offset="0.9925" stop-color="#393e47"/><stop offset="1.0000" stop-color="#393e47"/></linearGradient><linearGradient id="b38" gradientUnits="userSpaceOnUse" x1="112" y1="0" x2="1986" y2="0"><stop offset="0.0000" stop-color="#453733"/><stop offset="0.0320" stop-color="#453733"/><stop offset="0.0640" stop-color="#453733"/><stop offset="0.0961" stop-color="#453834"/><stop offset="0.1281" stop-color="#443935"/><stop offset="0.1601" stop-color="#443a36"/><stop offset="0.1921" stop-color="#443b36"/><stop offset="0.2241" stop-color="#443b37"/><stop offset="0.2561" stop-color="#443d39"/><stop offset="0.2882" stop-color="#433f3b"/><stop offset="0.3202" stop-color="#43413c"/><stop offset="0.3522" stop-color="#44423c"/><stop offset="0.3842" stop-color="#44433c"/><stop offset="0.4162" stop-color="#42433e"/><stop offset="0.4482" stop-color="#404440"/><stop offset="0.4803" stop-color="#3d4542"/><stop offset="0.5123" stop-color="#3b4543"/><stop offset="0.5443" stop-color="#3b4644"/><stop offset="0.5763" stop-color="#3b4644"/><stop offset="0.6083" stop-color="#3c4846"/><stop offset="0.6403" stop-color="#3d4949"/><stop offset="0.6724" stop-color="#3d4a4a"/><stop offset="0.7044" stop-color="#3d4949"/><stop offset="0.7364" stop-color="#3b4748"/><stop offset="0.7684" stop-color="#394546"/><stop offset="0.8004" stop-color="#384346"/><stop offset="0.8324" stop-color="#384345"/><stop offset="0.8645" stop-color="#384246"/><stop offset="0.8965" stop-color="#394046"/><stop offset="0.9285" stop-color="#393f47"/><stop offset="0.9605" stop-color="#393e47"/><stop offset="0.9925" stop-color="#393e48"/><stop offset="1.0000" stop-color="#393e47"/></linearGradient><linearGradient id="b39" gradientUnits="userSpaceOnUse" x1="112" y1="0" x2="1986" y2="0"><stop offset="0.0000" stop-color="#453733"/><stop offset="0.0320" stop-color="#453733"/><stop offset="0.0640" stop-color="#453733"/><stop offset="0.0961" stop-color="#453833"/><stop offset="0.1281" stop-color="#453935"/><stop offset="0.1601" stop-color="#443a36"/><stop offset="0.1921" stop-color="#443b36"/><stop offset="0.2241" stop-color="#443b37"/><stop offset="0.2561" stop-color="#443d39"/><stop offset="0.2882" stop-color="#433f3b"/><stop offset="0.3202" stop-color="#44413c"/><stop offset="0.3522" stop-color="#44423c"/><stop offset="0.3842" stop-color="#44433c"/><stop offset="0.4162" stop-color="#43433d"/><stop offset="0.4482" stop-color="#40443f"/><stop offset="0.4803" stop-color="#3d4542"/><stop offset="0.5123" stop-color="#3c4543"/><stop offset="0.5443" stop-color="#3b4644"/><stop offset="0.5763" stop-color="#3c4644"/><stop offset="0.6083" stop-color="#3c4847"/><stop offset="0.6403" stop-color="#3d4a49"/><stop offset="0.6724" stop-color="#3d4a4a"/><stop offset="0.7044" stop-color="#3d4a4a"/><stop offset="0.7364" stop-color="#3c4848"/><stop offset="0.7684" stop-color="#3a4546"/><stop offset="0.8004" stop-color="#384346"/><stop offset="0.8324" stop-color="#384345"/><stop offset="0.8645" stop-color="#384246"/><stop offset="0.8965" stop-color="#394046"/><stop offset="0.9285" stop-color="#393f47"/><stop offset="0.9605" stop-color="#393e47"/><stop offset="0.9925" stop-color="#393e48"/><stop offset="1.0000" stop-color="#393e48"/></linearGradient><linearGradient id="b40" gradientUnits="userSpaceOnUse" x1="112" y1="0" x2="1986" y2="0"><stop offset="0.0000" stop-color="#453733"/><stop offset="0.0320" stop-color="#453733"/><stop offset="0.0640" stop-color="#453733"/><stop offset="0.0961" stop-color="#453833"/><stop offset="0.1281" stop-color="#453934"/><stop offset="0.1601" stop-color="#443a36"/><stop offset="0.1921" stop-color="#443b36"/><stop offset="0.2241" stop-color="#443c37"/><stop offset="0.2561" stop-color="#443d39"/><stop offset="0.2882" stop-color="#44403b"/><stop offset="0.3202" stop-color="#44413b"/><stop offset="0.3522" stop-color="#45423c"/><stop offset="0.3842" stop-color="#45433c"/><stop offset="0.4162" stop-color="#43433d"/><stop offset="0.4482" stop-color="#40443f"/><stop offset="0.4803" stop-color="#3e4541"/><stop offset="0.5123" stop-color="#3c4543"/><stop offset="0.5443" stop-color="#3b4644"/><stop offset="0.5763" stop-color="#3c4645"/><stop offset="0.6083" stop-color="#3c4847"/><stop offset="0.6403" stop-color="#3d4a49"/><stop offset="0.6724" stop-color="#3d4b4a"/><stop offset="0.7044" stop-color="#3d4a4a"/><stop offset="0.7364" stop-color="#3c4848"/><stop offset="0.7684" stop-color="#3a4547"/><stop offset="0.8004" stop-color="#384446"/><stop offset="0.8324" stop-color="#384346"/><stop offset="0.8645" stop-color="#384246"/><stop offset="0.8965" stop-color="#394046"/><stop offset="0.9285" stop-color="#393f47"/><stop offset="0.9605" stop-color="#393e48"/><stop offset="0.9925" stop-color="#393d48"/><stop offset="1.0000" stop-color="#393d48"/></linearGradient><linearGradient id="b41" gradientUnits="userSpaceOnUse" x1="112" y1="0" x2="1986" y2="0"><stop offset="0.0000" stop-color="#453733"/><stop offset="0.0320" stop-color="#453733"/><stop offset="0.0640" stop-color="#463733"/><stop offset="0.0961" stop-color="#453833"/><stop offset="0.1281" stop-color="#453934"/><stop offset="0.1601" stop-color="#453a35"/><stop offset="0.1921" stop-color="#443b36"/><stop offset="0.2241" stop-color="#443c37"/><stop offset="0.2561" stop-color="#443e39"/><stop offset="0.2882" stop-color="#44403a"/><stop offset="0.3202" stop-color="#44423b"/><stop offset="0.3522" stop-color="#45423b"/><stop offset="0.3842" stop-color="#45433c"/><stop offset="0.4162" stop-color="#43433d"/><stop offset="0.4482" stop-color="#41433f"/><stop offset="0.4803" stop-color="#3e4441"/><stop offset="0.5123" stop-color="#3c4543"/><stop offset="0.5443" stop-color="#3c4643"/><stop offset="0.5763" stop-color="#3c4645"/><stop offset="0.6083" stop-color="#3d4847"/><stop offset="0.6403" stop-color="#3d4a4a"/><stop offset="0.6724" stop-color="#3e4b4b"/><stop offset="0.7044" stop-color="#3d4a4a"/><stop offset="0.7364" stop-color="#3c4849"/><stop offset="0.7684" stop-color="#3a4547"/><stop offset="0.8004" stop-color="#394446"/><stop offset="0.8324" stop-color="#384346"/><stop offset="0.8645" stop-color="#384246"/><stop offset="0.8965" stop-color="#394046"/><stop offset="0.9285" stop-color="#393f47"/><stop offset="0.9605" stop-color="#393e48"/><stop offset="0.9925" stop-color="#393d48"/><stop offset="1.0000" stop-color="#393d48"/></linearGradient><linearGradient id="b42" gradientUnits="userSpaceOnUse" x1="112" y1="0" x2="1986" y2="0"><stop offset="0.0000" stop-color="#463733"/><stop offset="0.0320" stop-color="#463732"/><stop offset="0.0640" stop-color="#463732"/><stop offset="0.0961" stop-color="#463833"/><stop offset="0.1281" stop-color="#453934"/><stop offset="0.1601" stop-color="#453a35"/><stop offset="0.1921" stop-color="#443b36"/><stop offset="0.2241" stop-color="#443c37"/><stop offset="0.2561" stop-color="#443e39"/><stop offset="0.2882" stop-color="#44403a"/><stop offset="0.3202" stop-color="#45423b"/><stop offset="0.3522" stop-color="#45433b"/><stop offset="0.3842" stop-color="#45433c"/><stop offset="0.4162" stop-color="#44433c"/><stop offset="0.4482" stop-color="#41433e"/><stop offset="0.4803" stop-color="#3f4441"/><stop offset="0.5123" stop-color="#3d4542"/><stop offset="0.5443" stop-color="#3c4643"/><stop offset="0.5763" stop-color="#3c4745"/><stop offset="0.6083" stop-color="#3d4847"/><stop offset="0.6403" stop-color="#3d4a4a"/><stop offset="0.6724" stop-color="#3e4b4b"/><stop offset="0.7044" stop-color="#3d4a4a"/><stop offset="0.7364" stop-color="#3c4849"/><stop offset="0.7684" stop-color="#3a4647"/><stop offset="0.8004" stop-color="#394446"/><stop offset="0.8324" stop-color="#384346"/><stop offset="0.8645" stop-color="#394246"/><stop offset="0.8965" stop-color="#394046"/><stop offset="0.9285" stop-color="#393f47"/><stop offset="0.9605" stop-color="#393e47"/><stop offset="0.9925" stop-color="#393d48"/><stop offset="1.0000" stop-color="#393d48"/></linearGradient><linearGradient id="b43" gradientUnits="userSpaceOnUse" x1="112" y1="0" x2="1986" y2="0"><stop offset="0.0000" stop-color="#463732"/><stop offset="0.0320" stop-color="#463732"/><stop offset="0.0640" stop-color="#463732"/><stop offset="0.0961" stop-color="#463833"/><stop offset="0.1281" stop-color="#453934"/><stop offset="0.1601" stop-color="#453a35"/><stop offset="0.1921" stop-color="#453b36"/><stop offset="0.2241" stop-color="#443c37"/><stop offset="0.2561" stop-color="#443e39"/><stop offset="0.2882" stop-color="#44403a"/><stop offset="0.3202" stop-color="#45423b"/><stop offset="0.3522" stop-color="#45433b"/><stop offset="0.3842" stop-color="#45433b"/><stop offset="0.4162" stop-color="#44433c"/><stop offset="0.4482" stop-color="#42433e"/><stop offset="0.4803" stop-color="#3f4440"/><stop offset="0.5123" stop-color="#3d4542"/><stop offset="0.5443" stop-color="#3c4643"/><stop offset="0.5763" stop-color="#3d4745"/><stop offset="0.6083" stop-color="#3d4847"/><stop offset="0.6403" stop-color="#3d4a4a"/><stop offset="0.6724" stop-color="#3e4b4b"/><stop offset="0.7044" stop-color="#3d4a4a"/><stop offset="0.7364" stop-color="#3c4849"/><stop offset="0.7684" stop-color="#3a4647"/><stop offset="0.8004" stop-color="#394446"/><stop offset="0.8324" stop-color="#394346"/><stop offset="0.8645" stop-color="#394246"/><stop offset="0.8965" stop-color="#394046"/><stop offset="0.9285" stop-color="#393f47"/><stop offset="0.9605" stop-color="#393e47"/><stop offset="0.9925" stop-color="#393d48"/><stop offset="1.0000" stop-color="#393d48"/></linearGradient><linearGradient id="b44" gradientUnits="userSpaceOnUse" x1="112" y1="0" x2="1986" y2="0"><stop offset="0.0000" stop-color="#463732"/><stop offset="0.0320" stop-color="#463732"/><stop offset="0.0640" stop-color="#463732"/><stop offset="0.0961" stop-color="#463832"/><stop offset="0.1281" stop-color="#463934"/><stop offset="0.1601" stop-color="#453a35"/><stop offset="0.1921" stop-color="#453b36"/><stop offset="0.2241" stop-color="#443c37"/><stop offset="0.2561" stop-color="#443e39"/><stop offset="0.2882" stop-color="#45403a"/><stop offset="0.3202" stop-color="#45423b"/><stop offset="0.3522" stop-color="#45433b"/><stop offset="0.3842" stop-color="#45433b"/><stop offset="0.4162" stop-color="#44433c"/><stop offset="0.4482" stop-color="#42433e"/><stop offset="0.4803" stop-color="#3f4440"/><stop offset="0.5123" stop-color="#3e4542"/><stop offset="0.5443" stop-color="#3d4643"/><stop offset="0.5763" stop-color="#3d4745"/><stop offset="0.6083" stop-color="#3d4947"/><stop offset="0.6403" stop-color="#3d4a4a"/><stop offset="0.6724" stop-color="#3e4b4b"/><stop offset="0.7044" stop-color="#3d4a4a"/><stop offset="0.7364" stop-color="#3c4849"/><stop offset="0.7684" stop-color="#3b4647"/><stop offset="0.8004" stop-color="#394446"/><stop offset="0.8324" stop-color="#394346"/><stop offset="0.8645" stop-color="#394246"/><stop offset="0.8965" stop-color="#394046"/><stop offset="0.9285" stop-color="#393f47"/><stop offset="0.9605" stop-color="#393e47"/><stop offset="0.9925" stop-color="#393d47"/><stop offset="1.0000" stop-color="#393e47"/></linearGradient><linearGradient id="b45" gradientUnits="userSpaceOnUse" x1="112" y1="0" x2="1986" y2="0"><stop offset="0.0000" stop-color="#463732"/><stop offset="0.0320" stop-color="#463732"/><stop offset="0.0640" stop-color="#473832"/><stop offset="0.0961" stop-color="#463832"/><stop offset="0.1281" stop-color="#463933"/><stop offset="0.1601" stop-color="#453a35"/><stop offset="0.1921" stop-color="#453b36"/><stop offset="0.2241" stop-color="#443d37"/><stop offset="0.2561" stop-color="#443e39"/><stop offset="0.2882" stop-color="#45403a"/><stop offset="0.3202" stop-color="#45423b"/><stop offset="0.3522" stop-color="#46423b"/><stop offset="0.3842" stop-color="#45433b"/><stop offset="0.4162" stop-color="#44433c"/><stop offset="0.4482" stop-color="#42433d"/><stop offset="0.4803" stop-color="#40443f"/><stop offset="0.5123" stop-color="#3e4541"/><stop offset="0.5443" stop-color="#3d4543"/><stop offset="0.5763" stop-color="#3d4745"/><stop offset="0.6083" stop-color="#3d4947"/><stop offset="0.6403" stop-color="#3d4a4a"/><stop offset="0.6724" stop-color="#3e4b4b"/><stop offset="0.7044" stop-color="#3d4a4a"/><stop offset="0.7364" stop-color="#3c4949"/><stop offset="0.7684" stop-color="#3b4647"/><stop offset="0.8004" stop-color="#3a4446"/><stop offset="0.8324" stop-color="#394346"/><stop offset="0.8645" stop-color="#394246"/><stop offset="0.8965" stop-color="#394046"/><stop offset="0.9285" stop-color="#393f47"/><stop offset="0.9605" stop-color="#393e47"/><stop offset="0.9925" stop-color="#393e47"/><stop offset="1.0000" stop-color="#393e47"/></linearGradient><linearGradient id="b46" gradientUnits="userSpaceOnUse" x1="112" y1="0" x2="1986" y2="0"><stop offset="0.0000" stop-color="#463732"/><stop offset="0.0320" stop-color="#473731"/><stop offset="0.0640" stop-color="#473831"/><stop offset="0.0961" stop-color="#473832"/><stop offset="0.1281" stop-color="#463933"/><stop offset="0.1601" stop-color="#453a35"/><stop offset="0.1921" stop-color="#453b36"/><stop offset="0.2241" stop-color="#453d38"/><stop offset="0.2561" stop-color="#453e39"/><stop offset="0.2882" stop-color="#45403a"/><stop offset="0.3202" stop-color="#46423b"/><stop offset="0.3522" stop-color="#46423b"/><stop offset="0.3842" stop-color="#45433b"/><stop offset="0.4162" stop-color="#44433c"/><stop offset="0.4482" stop-color="#42433d"/><stop offset="0.4803" stop-color="#40433f"/><stop offset="0.5123" stop-color="#3f4441"/><stop offset="0.5443" stop-color="#3e4543"/><stop offset="0.5763" stop-color="#3d4745"/><stop offset="0.6083" stop-color="#3d4947"/><stop offset="0.6403" stop-color="#3d4a4a"/><stop offset="0.6724" stop-color="#3e4b4a"/><stop offset="0.7044" stop-color="#3d4a4a"/><stop offset="0.7364" stop-color="#3c4949"/><stop offset="0.7684" stop-color="#3b4647"/><stop offset="0.8004" stop-color="#3a4446"/><stop offset="0.8324" stop-color="#394346"/><stop offset="0.8645" stop-color="#394246"/><stop offset="0.8965" stop-color="#394046"/><stop offset="0.9285" stop-color="#393f46"/><stop offset="0.9605" stop-color="#393e47"/><stop offset="0.9925" stop-color="#393e47"/><stop offset="1.0000" stop-color="#393e47"/></linearGradient><linearGradient id="b47" gradientUnits="userSpaceOnUse" x1="112" y1="0" x2="1986" y2="0"><stop offset="0.0000" stop-color="#473732"/><stop offset="0.0320" stop-color="#473831"/><stop offset="0.0640" stop-color="#473831"/><stop offset="0.0961" stop-color="#473832"/><stop offset="0.1281" stop-color="#463933"/><stop offset="0.1601" stop-color="#453a35"/><stop offset="0.1921" stop-color="#453b36"/><stop offset="0.2241" stop-color="#453d38"/><stop offset="0.2561" stop-color="#453f39"/><stop offset="0.2882" stop-color="#45403a"/><stop offset="0.3202" stop-color="#46423a"/><stop offset="0.3522" stop-color="#46423b"/><stop offset="0.3842" stop-color="#46433b"/><stop offset="0.4162" stop-color="#45423c"/><stop offset="0.4482" stop-color="#43433d"/><stop offset="0.4803" stop-color="#41433e"/><stop offset="0.5123" stop-color="#3f4440"/><stop offset="0.5443" stop-color="#3e4542"/><stop offset="0.5763" stop-color="#3d4745"/><stop offset="0.6083" stop-color="#3d4947"/><stop offset="0.6403" stop-color="#3d4a49"/><stop offset="0.6724" stop-color="#3e4b4a"/><stop offset="0.7044" stop-color="#3d4a4a"/><stop offset="0.7364" stop-color="#3c4849"/><stop offset="0.7684" stop-color="#3b4647"/><stop offset="0.8004" stop-color="#3a4446"/><stop offset="0.8324" stop-color="#394346"/><stop offset="0.8645" stop-color="#394245"/><stop offset="0.8965" stop-color="#394045"/><stop offset="0.9285" stop-color="#393f46"/><stop offset="0.9605" stop-color="#393e47"/><stop offset="0.9925" stop-color="#393e47"/><stop offset="1.0000" stop-color="#393e47"/></linearGradient><linearGradient id="b48" gradientUnits="userSpaceOnUse" x1="112" y1="0" x2="1986" y2="0"><stop offset="0.0000" stop-color="#473831"/><stop offset="0.0320" stop-color="#473831"/><stop offset="0.0640" stop-color="#473831"/><stop offset="0.0961" stop-color="#473832"/><stop offset="0.1281" stop-color="#463933"/><stop offset="0.1601" stop-color="#463a35"/><stop offset="0.1921" stop-color="#453c36"/><stop offset="0.2241" stop-color="#453d38"/><stop offset="0.2561" stop-color="#453f39"/><stop offset="0.2882" stop-color="#46403a"/><stop offset="0.3202" stop-color="#46423a"/><stop offset="0.3522" stop-color="#46423a"/><stop offset="0.3842" stop-color="#46423b"/><stop offset="0.4162" stop-color="#45423b"/><stop offset="0.4482" stop-color="#43423c"/><stop offset="0.4803" stop-color="#41433e"/><stop offset="0.5123" stop-color="#3f4440"/><stop offset="0.5443" stop-color="#3e4542"/><stop offset="0.5763" stop-color="#3e4745"/><stop offset="0.6083" stop-color="#3d4847"/><stop offset="0.6403" stop-color="#3d4a49"/><stop offset="0.6724" stop-color="#3d4a4a"/><stop offset="0.7044" stop-color="#3d4a4a"/><stop offset="0.7364" stop-color="#3c4849"/><stop offset="0.7684" stop-color="#3b4647"/><stop offset="0.8004" stop-color="#3a4446"/><stop offset="0.8324" stop-color="#394346"/><stop offset="0.8645" stop-color="#394245"/><stop offset="0.8965" stop-color="#394045"/><stop offset="0.9285" stop-color="#393f46"/><stop offset="0.9605" stop-color="#393e46"/><stop offset="0.9925" stop-color="#393e47"/><stop offset="1.0000" stop-color="#393e47"/></linearGradient><linearGradient id="b49" gradientUnits="userSpaceOnUse" x1="112" y1="0" x2="1986" y2="0"><stop offset="0.0000" stop-color="#473831"/><stop offset="0.0320" stop-color="#473831"/><stop offset="0.0640" stop-color="#473831"/><stop offset="0.0961" stop-color="#473831"/><stop offset="0.1281" stop-color="#463933"/><stop offset="0.1601" stop-color="#463a34"/><stop offset="0.1921" stop-color="#453c36"/><stop offset="0.2241" stop-color="#453d38"/><stop offset="0.2561" stop-color="#453f39"/><stop offset="0.2882" stop-color="#46413a"/><stop offset="0.3202" stop-color="#47423a"/><stop offset="0.3522" stop-color="#47423a"/><stop offset="0.3842" stop-color="#46423a"/><stop offset="0.4162" stop-color="#45423b"/><stop offset="0.4482" stop-color="#43423c"/><stop offset="0.4803" stop-color="#41433d"/><stop offset="0.5123" stop-color="#40443f"/><stop offset="0.5443" stop-color="#3f4542"/><stop offset="0.5763" stop-color="#3e4745"/><stop offset="0.6083" stop-color="#3d4847"/><stop offset="0.6403" stop-color="#3d4a49"/><stop offset="0.6724" stop-color="#3d4a49"/><stop offset="0.7044" stop-color="#3d4a49"/><stop offset="0.7364" stop-color="#3c4848"/><stop offset="0.7684" stop-color="#3b4647"/><stop offset="0.8004" stop-color="#3a4446"/><stop offset="0.8324" stop-color="#3a4345"/><stop offset="0.8645" stop-color="#394245"/><stop offset="0.8965" stop-color="#394145"/><stop offset="0.9285" stop-color="#394045"/><stop offset="0.9605" stop-color="#393f46"/><stop offset="0.9925" stop-color="#393e46"/><stop offset="1.0000" stop-color="#393e46"/></linearGradient><linearGradient id="b50" gradientUnits="userSpaceOnUse" x1="112" y1="0" x2="1986" y2="0"><stop offset="0.0000" stop-color="#473831"/><stop offset="0.0320" stop-color="#483831"/><stop offset="0.0640" stop-color="#483831"/><stop offset="0.0961" stop-color="#473831"/><stop offset="0.1281" stop-color="#473933"/><stop offset="0.1601" stop-color="#463a34"/><stop offset="0.1921" stop-color="#453c36"/><stop offset="0.2241" stop-color="#453d38"/><stop offset="0.2561" stop-color="#453f39"/><stop offset="0.2882" stop-color="#464139"/><stop offset="0.3202" stop-color="#47423a"/><stop offset="0.3522" stop-color="#47423a"/><stop offset="0.3842" stop-color="#47423a"/><stop offset="0.4162" stop-color="#45423b"/><stop offset="0.4482" stop-color="#43423c"/><stop offset="0.4803" stop-color="#41433d"/><stop offset="0.5123" stop-color="#40443f"/><stop offset="0.5443" stop-color="#3f4542"/><stop offset="0.5763" stop-color="#3e4744"/><stop offset="0.6083" stop-color="#3d4847"/><stop offset="0.6403" stop-color="#3d4948"/><stop offset="0.6724" stop-color="#3d4a49"/><stop offset="0.7044" stop-color="#3d4a49"/><stop offset="0.7364" stop-color="#3c4848"/><stop offset="0.7684" stop-color="#3b4647"/><stop offset="0.8004" stop-color="#3a4446"/><stop offset="0.8324" stop-color="#3a4345"/><stop offset="0.8645" stop-color="#394245"/><stop offset="0.8965" stop-color="#394145"/><stop offset="0.9285" stop-color="#394045"/><stop offset="0.9605" stop-color="#383f46"/><stop offset="0.9925" stop-color="#383e46"/><stop offset="1.0000" stop-color="#383e46"/></linearGradient><linearGradient id="b51" gradientUnits="userSpaceOnUse" x1="112" y1="0" x2="1986" y2="0"><stop offset="0.0000" stop-color="#473831"/><stop offset="0.0320" stop-color="#483831"/><stop offset="0.0640" stop-color="#483831"/><stop offset="0.0961" stop-color="#473831"/><stop offset="0.1281" stop-color="#473932"/><stop offset="0.1601" stop-color="#463a34"/><stop offset="0.1921" stop-color="#453c36"/><stop offset="0.2241" stop-color="#453d37"/><stop offset="0.2561" stop-color="#463f39"/><stop offset="0.2882" stop-color="#474139"/><stop offset="0.3202" stop-color="#484239"/><stop offset="0.3522" stop-color="#484239"/><stop offset="0.3842" stop-color="#47423a"/><stop offset="0.4162" stop-color="#45423b"/><stop offset="0.4482" stop-color="#43423c"/><stop offset="0.4803" stop-color="#42423d"/><stop offset="0.5123" stop-color="#40433f"/><stop offset="0.5443" stop-color="#3f4541"/><stop offset="0.5763" stop-color="#3e4744"/><stop offset="0.6083" stop-color="#3e4847"/><stop offset="0.6403" stop-color="#3d4948"/><stop offset="0.6724" stop-color="#3d4a49"/><stop offset="0.7044" stop-color="#3d4949"/><stop offset="0.7364" stop-color="#3c4848"/><stop offset="0.7684" stop-color="#3c4647"/><stop offset="0.8004" stop-color="#3a4446"/><stop offset="0.8324" stop-color="#3a4345"/><stop offset="0.8645" stop-color="#394245"/><stop offset="0.8965" stop-color="#394144"/><stop offset="0.9285" stop-color="#394045"/><stop offset="0.9605" stop-color="#383f45"/><stop offset="0.9925" stop-color="#383e46"/><stop offset="1.0000" stop-color="#383e46"/></linearGradient><linearGradient id="b52" gradientUnits="userSpaceOnUse" x1="112" y1="0" x2="1986" y2="0"><stop offset="0.0000" stop-color="#483831"/><stop offset="0.0320" stop-color="#483831"/><stop offset="0.0640" stop-color="#483831"/><stop offset="0.0961" stop-color="#483831"/><stop offset="0.1281" stop-color="#473932"/><stop offset="0.1601" stop-color="#463a34"/><stop offset="0.1921" stop-color="#463c36"/><stop offset="0.2241" stop-color="#453d37"/><stop offset="0.2561" stop-color="#463f39"/><stop offset="0.2882" stop-color="#474139"/><stop offset="0.3202" stop-color="#484239"/><stop offset="0.3522" stop-color="#494239"/><stop offset="0.3842" stop-color="#484239"/><stop offset="0.4162" stop-color="#45423a"/><stop offset="0.4482" stop-color="#43423b"/><stop offset="0.4803" stop-color="#42423c"/><stop offset="0.5123" stop-color="#41433e"/><stop offset="0.5443" stop-color="#3f4541"/><stop offset="0.5763" stop-color="#3e4744"/><stop offset="0.6083" stop-color="#3e4847"/><stop offset="0.6403" stop-color="#3d4948"/><stop offset="0.6724" stop-color="#3d4a48"/><stop offset="0.7044" stop-color="#3d4948"/><stop offset="0.7364" stop-color="#3d4848"/><stop offset="0.7684" stop-color="#3c4747"/><stop offset="0.8004" stop-color="#3b4446"/><stop offset="0.8324" stop-color="#3a4345"/><stop offset="0.8645" stop-color="#394244"/><stop offset="0.8965" stop-color="#394144"/><stop offset="0.9285" stop-color="#394044"/><stop offset="0.9605" stop-color="#383f45"/><stop offset="0.9925" stop-color="#383e46"/><stop offset="1.0000" stop-color="#383e46"/></linearGradient><linearGradient id="b53" gradientUnits="userSpaceOnUse" x1="112" y1="0" x2="1986" y2="0"><stop offset="0.0000" stop-color="#483831"/><stop offset="0.0320" stop-color="#483831"/><stop offset="0.0640" stop-color="#483831"/><stop offset="0.0961" stop-color="#483831"/><stop offset="0.1281" stop-color="#473932"/><stop offset="0.1601" stop-color="#463a34"/><stop offset="0.1921" stop-color="#463c36"/><stop offset="0.2241" stop-color="#463e37"/><stop offset="0.2561" stop-color="#463f38"/><stop offset="0.2882" stop-color="#474139"/><stop offset="0.3202" stop-color="#494239"/><stop offset="0.3522" stop-color="#494238"/><stop offset="0.3842" stop-color="#494239"/><stop offset="0.4162" stop-color="#45423a"/><stop offset="0.4482" stop-color="#43423b"/><stop offset="0.4803" stop-color="#42423c"/><stop offset="0.5123" stop-color="#41433e"/><stop offset="0.5443" stop-color="#3f4541"/><stop offset="0.5763" stop-color="#3e4744"/><stop offset="0.6083" stop-color="#3e4846"/><stop offset="0.6403" stop-color="#3d4948"/><stop offset="0.6724" stop-color="#3d4a48"/><stop offset="0.7044" stop-color="#3d4948"/><stop offset="0.7364" stop-color="#3d4848"/><stop offset="0.7684" stop-color="#3c4747"/><stop offset="0.8004" stop-color="#3b4546"/><stop offset="0.8324" stop-color="#3a4345"/><stop offset="0.8645" stop-color="#394244"/><stop offset="0.8965" stop-color="#394144"/><stop offset="0.9285" stop-color="#394144"/><stop offset="0.9605" stop-color="#383f45"/><stop offset="0.9925" stop-color="#383e46"/><stop offset="1.0000" stop-color="#383e46"/></linearGradient><linearGradient id="b54" gradientUnits="userSpaceOnUse" x1="112" y1="0" x2="1986" y2="0"><stop offset="0.0000" stop-color="#483831"/><stop offset="0.0320" stop-color="#483831"/><stop offset="0.0640" stop-color="#483831"/><stop offset="0.0961" stop-color="#483831"/><stop offset="0.1281" stop-color="#473932"/><stop offset="0.1601" stop-color="#463a34"/><stop offset="0.1921" stop-color="#463c36"/><stop offset="0.2241" stop-color="#463e37"/><stop offset="0.2561" stop-color="#463f38"/><stop offset="0.2882" stop-color="#484139"/><stop offset="0.3202" stop-color="#494238"/><stop offset="0.3522" stop-color="#4a4238"/><stop offset="0.3842" stop-color="#494238"/><stop offset="0.4162" stop-color="#46423a"/><stop offset="0.4482" stop-color="#43423b"/><stop offset="0.4803" stop-color="#42423c"/><stop offset="0.5123" stop-color="#41433e"/><stop offset="0.5443" stop-color="#404441"/><stop offset="0.5763" stop-color="#3e4644"/><stop offset="0.6083" stop-color="#3e4846"/><stop offset="0.6403" stop-color="#3d4948"/><stop offset="0.6724" stop-color="#3d4a48"/><stop offset="0.7044" stop-color="#3d4948"/><stop offset="0.7364" stop-color="#3d4848"/><stop offset="0.7684" stop-color="#3c4747"/><stop offset="0.8004" stop-color="#3b4546"/><stop offset="0.8324" stop-color="#3a4345"/><stop offset="0.8645" stop-color="#394244"/><stop offset="0.8965" stop-color="#394144"/><stop offset="0.9285" stop-color="#394144"/><stop offset="0.9605" stop-color="#383f45"/><stop offset="0.9925" stop-color="#383e45"/><stop offset="1.0000" stop-color="#383e46"/></linearGradient><linearGradient id="b55" gradientUnits="userSpaceOnUse" x1="112" y1="0" x2="1986" y2="0"><stop offset="0.0000" stop-color="#483831"/><stop offset="0.0320" stop-color="#483830"/><stop offset="0.0640" stop-color="#483831"/><stop offset="0.0961" stop-color="#483831"/><stop offset="0.1281" stop-color="#473932"/><stop offset="0.1601" stop-color="#463a34"/><stop offset="0.1921" stop-color="#463c36"/><stop offset="0.2241" stop-color="#463e37"/><stop offset="0.2561" stop-color="#473f38"/><stop offset="0.2882" stop-color="#484138"/><stop offset="0.3202" stop-color="#4a4238"/><stop offset="0.3522" stop-color="#4b4238"/><stop offset="0.3842" stop-color="#4a4238"/><stop offset="0.4162" stop-color="#46423a"/><stop offset="0.4482" stop-color="#43413b"/><stop offset="0.4803" stop-color="#42423c"/><stop offset="0.5123" stop-color="#41433d"/><stop offset="0.5443" stop-color="#404440"/><stop offset="0.5763" stop-color="#3e4644"/><stop offset="0.6083" stop-color="#3e4846"/><stop offset="0.6403" stop-color="#3d4948"/><stop offset="0.6724" stop-color="#3d4a48"/><stop offset="0.7044" stop-color="#3d4948"/><stop offset="0.7364" stop-color="#3d4848"/><stop offset="0.7684" stop-color="#3c4747"/><stop offset="0.8004" stop-color="#3b4546"/><stop offset="0.8324" stop-color="#3a4345"/><stop offset="0.8645" stop-color="#394244"/><stop offset="0.8965" stop-color="#394243"/><stop offset="0.9285" stop-color="#394144"/><stop offset="0.9605" stop-color="#383f45"/><stop offset="0.9925" stop-color="#383e45"/><stop offset="1.0000" stop-color="#383e45"/></linearGradient><linearGradient id="b56" gradientUnits="userSpaceOnUse" x1="112" y1="0" x2="1986" y2="0"><stop offset="0.0000" stop-color="#483831"/><stop offset="0.0320" stop-color="#483830"/><stop offset="0.0640" stop-color="#483830"/><stop offset="0.0961" stop-color="#483831"/><stop offset="0.1281" stop-color="#473932"/><stop offset="0.1601" stop-color="#473a34"/><stop offset="0.1921" stop-color="#463c36"/><stop offset="0.2241" stop-color="#463e37"/><stop offset="0.2561" stop-color="#474038"/><stop offset="0.2882" stop-color="#484138"/><stop offset="0.3202" stop-color="#4a4238"/><stop offset="0.3522" stop-color="#4b4237"/><stop offset="0.3842" stop-color="#4a4238"/><stop offset="0.4162" stop-color="#46423a"/><stop offset="0.4482" stop-color="#43413b"/><stop offset="0.4803" stop-color="#42423c"/><stop offset="0.5123" stop-color="#41423d"/><stop offset="0.5443" stop-color="#404440"/><stop offset="0.5763" stop-color="#3f4644"/><stop offset="0.6083" stop-color="#3e4846"/><stop offset="0.6403" stop-color="#3d4948"/><stop offset="0.6724" stop-color="#3d4a48"/><stop offset="0.7044" stop-color="#3d4948"/><stop offset="0.7364" stop-color="#3d4847"/><stop offset="0.7684" stop-color="#3c4747"/><stop offset="0.8004" stop-color="#3b4546"/><stop offset="0.8324" stop-color="#3a4345"/><stop offset="0.8645" stop-color="#394244"/><stop offset="0.8965" stop-color="#394243"/><stop offset="0.9285" stop-color="#394143"/><stop offset="0.9605" stop-color="#383f45"/><stop offset="0.9925" stop-color="#383e45"/><stop offset="1.0000" stop-color="#383d45"/></linearGradient><linearGradient id="b57" gradientUnits="userSpaceOnUse" x1="112" y1="0" x2="1986" y2="0"><stop offset="0.0000" stop-color="#483831"/><stop offset="0.0320" stop-color="#483830"/><stop offset="0.0640" stop-color="#483830"/><stop offset="0.0961" stop-color="#483831"/><stop offset="0.1281" stop-color="#473932"/><stop offset="0.1601" stop-color="#473a34"/><stop offset="0.1921" stop-color="#463c36"/><stop offset="0.2241" stop-color="#463e37"/><stop offset="0.2561" stop-color="#474038"/><stop offset="0.2882" stop-color="#494138"/><stop offset="0.3202" stop-color="#4a4238"/><stop offset="0.3522" stop-color="#4c4237"/><stop offset="0.3842" stop-color="#4a4238"/><stop offset="0.4162" stop-color="#46423a"/><stop offset="0.4482" stop-color="#42413b"/><stop offset="0.4803" stop-color="#42423b"/><stop offset="0.5123" stop-color="#41423d"/><stop offset="0.5443" stop-color="#404440"/><stop offset="0.5763" stop-color="#3f4644"/><stop offset="0.6083" stop-color="#3e4846"/><stop offset="0.6403" stop-color="#3d4948"/><stop offset="0.6724" stop-color="#3d4a48"/><stop offset="0.7044" stop-color="#3d4948"/><stop offset="0.7364" stop-color="#3d4847"/><stop offset="0.7684" stop-color="#3c4747"/><stop offset="0.8004" stop-color="#3b4546"/><stop offset="0.8324" stop-color="#3a4345"/><stop offset="0.8645" stop-color="#394244"/><stop offset="0.8965" stop-color="#394243"/><stop offset="0.9285" stop-color="#394143"/><stop offset="0.9605" stop-color="#383f45"/><stop offset="0.9925" stop-color="#383d45"/><stop offset="1.0000" stop-color="#383d45"/></linearGradient><linearGradient id="b58" gradientUnits="userSpaceOnUse" x1="112" y1="0" x2="1986" y2="0"><stop offset="0.0000" stop-color="#483831"/><stop offset="0.0320" stop-color="#493830"/><stop offset="0.0640" stop-color="#483830"/><stop offset="0.0961" stop-color="#483831"/><stop offset="0.1281" stop-color="#473932"/><stop offset="0.1601" stop-color="#473a34"/><stop offset="0.1921" stop-color="#463c36"/><stop offset="0.2241" stop-color="#463e37"/><stop offset="0.2561" stop-color="#474038"/><stop offset="0.2882" stop-color="#494138"/><stop offset="0.3202" stop-color="#4b4238"/><stop offset="0.3522" stop-color="#4c4237"/><stop offset="0.3842" stop-color="#4b4238"/><stop offset="0.4162" stop-color="#46423a"/><stop offset="0.4482" stop-color="#42413b"/><stop offset="0.4803" stop-color="#42413b"/><stop offset="0.5123" stop-color="#41423d"/><stop offset="0.5443" stop-color="#404440"/><stop offset="0.5763" stop-color="#3f4643"/><stop offset="0.6083" stop-color="#3e4846"/><stop offset="0.6403" stop-color="#3d4947"/><stop offset="0.6724" stop-color="#3d4a48"/><stop offset="0.7044" stop-color="#3d4948"/><stop offset="0.7364" stop-color="#3d4847"/><stop offset="0.7684" stop-color="#3c4747"/><stop offset="0.8004" stop-color="#3b4446"/><stop offset="0.8324" stop-color="#3a4345"/><stop offset="0.8645" stop-color="#394244"/><stop offset="0.8965" stop-color="#394243"/><stop offset="0.9285" stop-color="#394143"/><stop offset="0.9605" stop-color="#383f44"/><stop offset="0.9925" stop-color="#383d45"/><stop offset="1.0000" stop-color="#383d45"/></linearGradient><linearGradient id="b59" gradientUnits="userSpaceOnUse" x1="112" y1="0" x2="1986" y2="0"><stop offset="0.0000" stop-color="#483831"/><stop offset="0.0320" stop-color="#493830"/><stop offset="0.0640" stop-color="#493830"/><stop offset="0.0961" stop-color="#483831"/><stop offset="0.1281" stop-color="#473932"/><stop offset="0.1601" stop-color="#473a34"/><stop offset="0.1921" stop-color="#463c36"/><stop offset="0.2241" stop-color="#463e37"/><stop offset="0.2561" stop-color="#474038"/><stop offset="0.2882" stop-color="#494138"/><stop offset="0.3202" stop-color="#4b4237"/><stop offset="0.3522" stop-color="#4c4237"/><stop offset="0.3842" stop-color="#4b4238"/><stop offset="0.4162" stop-color="#46423a"/><stop offset="0.4482" stop-color="#42413b"/><stop offset="0.4803" stop-color="#42413b"/><stop offset="0.5123" stop-color="#41423d"/><stop offset="0.5443" stop-color="#404440"/><stop offset="0.5763" stop-color="#3f4643"/><stop offset="0.6083" stop-color="#3e4846"/><stop offset="0.6403" stop-color="#3d4947"/><stop offset="0.6724" stop-color="#3d4a48"/><stop offset="0.7044" stop-color="#3d4948"/><stop offset="0.7364" stop-color="#3d4847"/><stop offset="0.7684" stop-color="#3c4747"/><stop offset="0.8004" stop-color="#3b4446"/><stop offset="0.8324" stop-color="#3a4345"/><stop offset="0.8645" stop-color="#394244"/><stop offset="0.8965" stop-color="#394243"/><stop offset="0.9285" stop-color="#394143"/><stop offset="0.9605" stop-color="#383f44"/><stop offset="0.9925" stop-color="#383d45"/><stop offset="1.0000" stop-color="#383d45"/></linearGradient><linearGradient id="b60" gradientUnits="userSpaceOnUse" x1="112" y1="0" x2="1986" y2="0"><stop offset="0.0000" stop-color="#483831"/><stop offset="0.0320" stop-color="#493830"/><stop offset="0.0640" stop-color="#493830"/><stop offset="0.0961" stop-color="#483831"/><stop offset="0.1281" stop-color="#473932"/><stop offset="0.1601" stop-color="#473a34"/><stop offset="0.1921" stop-color="#463c36"/><stop offset="0.2241" stop-color="#463e37"/><stop offset="0.2561" stop-color="#474038"/><stop offset="0.2882" stop-color="#494138"/><stop offset="0.3202" stop-color="#4b4237"/><stop offset="0.3522" stop-color="#4c4237"/><stop offset="0.3842" stop-color="#4b4238"/><stop offset="0.4162" stop-color="#46423a"/><stop offset="0.4482" stop-color="#42413b"/><stop offset="0.4803" stop-color="#42413b"/><stop offset="0.5123" stop-color="#41423d"/><stop offset="0.5443" stop-color="#404440"/><stop offset="0.5763" stop-color="#3f4643"/><stop offset="0.6083" stop-color="#3e4846"/><stop offset="0.6403" stop-color="#3d4947"/><stop offset="0.6724" stop-color="#3d4a48"/><stop offset="0.7044" stop-color="#3d4948"/><stop offset="0.7364" stop-color="#3d4847"/><stop offset="0.7684" stop-color="#3c4747"/><stop offset="0.8004" stop-color="#3b4446"/><stop offset="0.8324" stop-color="#3a4344"/><stop offset="0.8645" stop-color="#394244"/><stop offset="0.8965" stop-color="#394243"/><stop offset="0.9285" stop-color="#394143"/><stop offset="0.9605" stop-color="#383f44"/><stop offset="0.9925" stop-color="#383d45"/><stop offset="1.0000" stop-color="#383d45"/></linearGradient><linearGradient id="b61" gradientUnits="userSpaceOnUse" x1="112" y1="0" x2="1986" y2="0"><stop offset="0.0000" stop-color="#6e5343"/><stop offset="0.0320" stop-color="#6e5343"/><stop offset="0.0640" stop-color="#6f5444"/><stop offset="0.0961" stop-color="#735948"/><stop offset="0.1281" stop-color="#775e4d"/><stop offset="0.1601" stop-color="#79604f"/><stop offset="0.1921" stop-color="#796150"/><stop offset="0.2241" stop-color="#786150"/><stop offset="0.2561" stop-color="#766351"/><stop offset="0.2882" stop-color="#756452"/><stop offset="0.3202" stop-color="#756552"/><stop offset="0.3522" stop-color="#736552"/><stop offset="0.3842" stop-color="#6d6452"/><stop offset="0.4162" stop-color="#666451"/><stop offset="0.4482" stop-color="#646451"/><stop offset="0.4803" stop-color="#626554"/><stop offset="0.5123" stop-color="#5e6659"/><stop offset="0.5443" stop-color="#5d675c"/><stop offset="0.5763" stop-color="#5c685e"/><stop offset="0.6083" stop-color="#5a6963"/><stop offset="0.6403" stop-color="#596a65"/><stop offset="0.6724" stop-color="#596a66"/><stop offset="0.7044" stop-color="#5a6b68"/><stop offset="0.7364" stop-color="#5c6e6d"/><stop offset="0.7684" stop-color="#5d6f70"/><stop offset="0.8004" stop-color="#5d6f71"/><stop offset="0.8324" stop-color="#5c6f71"/><stop offset="0.8645" stop-color="#5b6c6f"/><stop offset="0.8965" stop-color="#58686d"/><stop offset="0.9285" stop-color="#57656c"/><stop offset="0.9605" stop-color="#56646c"/><stop offset="0.9925" stop-color="#56646c"/><stop offset="1.0000" stop-color="#56646c"/></linearGradient><linearGradient id="b62" gradientUnits="userSpaceOnUse" x1="112" y1="0" x2="1986" y2="0"><stop offset="0.0000" stop-color="#6e5343"/><stop offset="0.0320" stop-color="#6e5343"/><stop offset="0.0640" stop-color="#6f5444"/><stop offset="0.0961" stop-color="#735948"/><stop offset="0.1281" stop-color="#775e4d"/><stop offset="0.1601" stop-color="#79604f"/><stop offset="0.1921" stop-color="#796150"/><stop offset="0.2241" stop-color="#786150"/><stop offset="0.2561" stop-color="#766351"/><stop offset="0.2882" stop-color="#756452"/><stop offset="0.3202" stop-color="#756552"/><stop offset="0.3522" stop-color="#736552"/><stop offset="0.3842" stop-color="#6d6452"/><stop offset="0.4162" stop-color="#666451"/><stop offset="0.4482" stop-color="#646451"/><stop offset="0.4803" stop-color="#626554"/><stop offset="0.5123" stop-color="#5e665a"/><stop offset="0.5443" stop-color="#5d675c"/><stop offset="0.5763" stop-color="#5c685e"/><stop offset="0.6083" stop-color="#5a6963"/><stop offset="0.6403" stop-color="#596a65"/><stop offset="0.6724" stop-color="#596a66"/><stop offset="0.7044" stop-color="#5a6b68"/><stop offset="0.7364" stop-color="#5c6e6d"/><stop offset="0.7684" stop-color="#5d6f71"/><stop offset="0.8004" stop-color="#5d6f71"/><stop offset="0.8324" stop-color="#5c6f71"/><stop offset="0.8645" stop-color="#5b6c6f"/><stop offset="0.8965" stop-color="#58676d"/><stop offset="0.9285" stop-color="#57656c"/><stop offset="0.9605" stop-color="#56646c"/><stop offset="0.9925" stop-color="#56646c"/><stop offset="1.0000" stop-color="#56646c"/></linearGradient><linearGradient id="b63" gradientUnits="userSpaceOnUse" x1="112" y1="0" x2="1986" y2="0"><stop offset="0.0000" stop-color="#6e5343"/><stop offset="0.0320" stop-color="#6e5343"/><stop offset="0.0640" stop-color="#6f5444"/><stop offset="0.0961" stop-color="#735948"/><stop offset="0.1281" stop-color="#775e4d"/><stop offset="0.1601" stop-color="#79604f"/><stop offset="0.1921" stop-color="#796150"/><stop offset="0.2241" stop-color="#786150"/><stop offset="0.2561" stop-color="#766351"/><stop offset="0.2882" stop-color="#756452"/><stop offset="0.3202" stop-color="#756552"/><stop offset="0.3522" stop-color="#736552"/><stop offset="0.3842" stop-color="#6d6451"/><stop offset="0.4162" stop-color="#666451"/><stop offset="0.4482" stop-color="#646451"/><stop offset="0.4803" stop-color="#626554"/><stop offset="0.5123" stop-color="#5e665a"/><stop offset="0.5443" stop-color="#5d675c"/><stop offset="0.5763" stop-color="#5c685e"/><stop offset="0.6083" stop-color="#5a6963"/><stop offset="0.6403" stop-color="#596a65"/><stop offset="0.6724" stop-color="#596a66"/><stop offset="0.7044" stop-color="#5a6b68"/><stop offset="0.7364" stop-color="#5c6e6d"/><stop offset="0.7684" stop-color="#5d6f71"/><stop offset="0.8004" stop-color="#5d6f71"/><stop offset="0.8324" stop-color="#5c6f71"/><stop offset="0.8645" stop-color="#5b6c6f"/><stop offset="0.8965" stop-color="#58676d"/><stop offset="0.9285" stop-color="#57656c"/><stop offset="0.9605" stop-color="#56646c"/><stop offset="0.9925" stop-color="#56646c"/><stop offset="1.0000" stop-color="#56646c"/></linearGradient><linearGradient id="b64" gradientUnits="userSpaceOnUse" x1="112" y1="0" x2="1986" y2="0"><stop offset="0.0000" stop-color="#6e5342"/><stop offset="0.0320" stop-color="#6e5343"/><stop offset="0.0640" stop-color="#6f5444"/><stop offset="0.0961" stop-color="#735948"/><stop offset="0.1281" stop-color="#775e4e"/><stop offset="0.1601" stop-color="#79604f"/><stop offset="0.1921" stop-color="#796150"/><stop offset="0.2241" stop-color="#786150"/><stop offset="0.2561" stop-color="#766351"/><stop offset="0.2882" stop-color="#756452"/><stop offset="0.3202" stop-color="#756552"/><stop offset="0.3522" stop-color="#736552"/><stop offset="0.3842" stop-color="#6d6451"/><stop offset="0.4162" stop-color="#666451"/><stop offset="0.4482" stop-color="#646451"/><stop offset="0.4803" stop-color="#626454"/><stop offset="0.5123" stop-color="#5e665a"/><stop offset="0.5443" stop-color="#5d675c"/><stop offset="0.5763" stop-color="#5c685e"/><stop offset="0.6083" stop-color="#5a6963"/><stop offset="0.6403" stop-color="#596a65"/><stop offset="0.6724" stop-color="#596a66"/><stop offset="0.7044" stop-color="#5a6b68"/><stop offset="0.7364" stop-color="#5c6e6d"/><stop offset="0.7684" stop-color="#5d6f71"/><stop offset="0.8004" stop-color="#5d6f71"/><stop offset="0.8324" stop-color="#5c6f71"/><stop offset="0.8645" stop-color="#5b6c6f"/><stop offset="0.8965" stop-color="#58676d"/><stop offset="0.9285" stop-color="#57656c"/><stop offset="0.9605" stop-color="#56646c"/><stop offset="0.9925" stop-color="#56646c"/><stop offset="1.0000" stop-color="#56646c"/></linearGradient><linearGradient id="b65" gradientUnits="userSpaceOnUse" x1="112" y1="0" x2="1986" y2="0"><stop offset="0.0000" stop-color="#6e5343"/><stop offset="0.0320" stop-color="#6e5343"/><stop offset="0.0640" stop-color="#6f5444"/><stop offset="0.0961" stop-color="#735948"/><stop offset="0.1281" stop-color="#775e4e"/><stop offset="0.1601" stop-color="#79604f"/><stop offset="0.1921" stop-color="#796150"/><stop offset="0.2241" stop-color="#786150"/><stop offset="0.2561" stop-color="#766351"/><stop offset="0.2882" stop-color="#756452"/><stop offset="0.3202" stop-color="#756552"/><stop offset="0.3522" stop-color="#736552"/><stop offset="0.3842" stop-color="#6c6451"/><stop offset="0.4162" stop-color="#666451"/><stop offset="0.4482" stop-color="#646451"/><stop offset="0.4803" stop-color="#626454"/><stop offset="0.5123" stop-color="#5e6659"/><stop offset="0.5443" stop-color="#5d675c"/><stop offset="0.5763" stop-color="#5c685e"/><stop offset="0.6083" stop-color="#5a6963"/><stop offset="0.6403" stop-color="#596a65"/><stop offset="0.6724" stop-color="#596a66"/><stop offset="0.7044" stop-color="#5a6b68"/><stop offset="0.7364" stop-color="#5c6e6d"/><stop offset="0.7684" stop-color="#5d6f71"/><stop offset="0.8004" stop-color="#5d6f71"/><stop offset="0.8324" stop-color="#5c6f71"/><stop offset="0.8645" stop-color="#5b6c6f"/><stop offset="0.8965" stop-color="#58676d"/><stop offset="0.9285" stop-color="#57656c"/><stop offset="0.9605" stop-color="#56646c"/><stop offset="0.9925" stop-color="#56646c"/><stop offset="1.0000" stop-color="#56646c"/></linearGradient><linearGradient id="b66" gradientUnits="userSpaceOnUse" x1="112" y1="0" x2="1986" y2="0"><stop offset="0.0000" stop-color="#6e5343"/><stop offset="0.0320" stop-color="#6e5343"/><stop offset="0.0640" stop-color="#6f5444"/><stop offset="0.0961" stop-color="#735948"/><stop offset="0.1281" stop-color="#775e4e"/><stop offset="0.1601" stop-color="#79604f"/><stop offset="0.1921" stop-color="#796150"/><stop offset="0.2241" stop-color="#786150"/><stop offset="0.2561" stop-color="#766351"/><stop offset="0.2882" stop-color="#756452"/><stop offset="0.3202" stop-color="#756552"/><stop offset="0.3522" stop-color="#736552"/><stop offset="0.3842" stop-color="#6c6451"/><stop offset="0.4162" stop-color="#666451"/><stop offset="0.4482" stop-color="#646451"/><stop offset="0.4803" stop-color="#626454"/><stop offset="0.5123" stop-color="#5e6659"/><stop offset="0.5443" stop-color="#5d675c"/><stop offset="0.5763" stop-color="#5c685e"/><stop offset="0.6083" stop-color="#5a6963"/><stop offset="0.6403" stop-color="#596a65"/><stop offset="0.6724" stop-color="#596a66"/><stop offset="0.7044" stop-color="#5a6b68"/><stop offset="0.7364" stop-color="#5c6e6d"/><stop offset="0.7684" stop-color="#5d6f71"/><stop offset="0.8004" stop-color="#5d6f71"/><stop offset="0.8324" stop-color="#5c6f71"/><stop offset="0.8645" stop-color="#5b6c6f"/><stop offset="0.8965" stop-color="#58686d"/><stop offset="0.9285" stop-color="#57656c"/><stop offset="0.9605" stop-color="#56646c"/><stop offset="0.9925" stop-color="#56646c"/><stop offset="1.0000" stop-color="#56646c"/></linearGradient><linearGradient id="b67" gradientUnits="userSpaceOnUse" x1="112" y1="0" x2="1986" y2="0"><stop offset="0.0000" stop-color="#6e5343"/><stop offset="0.0320" stop-color="#6e5343"/><stop offset="0.0640" stop-color="#6f5444"/><stop offset="0.0961" stop-color="#735948"/><stop offset="0.1281" stop-color="#775e4e"/><stop offset="0.1601" stop-color="#79604f"/><stop offset="0.1921" stop-color="#796150"/><stop offset="0.2241" stop-color="#786150"/><stop offset="0.2561" stop-color="#766351"/><stop offset="0.2882" stop-color="#756452"/><stop offset="0.3202" stop-color="#756552"/><stop offset="0.3522" stop-color="#736552"/><stop offset="0.3842" stop-color="#6c6451"/><stop offset="0.4162" stop-color="#666451"/><stop offset="0.4482" stop-color="#646451"/><stop offset="0.4803" stop-color="#626454"/><stop offset="0.5123" stop-color="#5e6659"/><stop offset="0.5443" stop-color="#5d675c"/><stop offset="0.5763" stop-color="#5c685e"/><stop offset="0.6083" stop-color="#5a6963"/><stop offset="0.6403" stop-color="#596a65"/><stop offset="0.6724" stop-color="#596a66"/><stop offset="0.7044" stop-color="#5a6b68"/><stop offset="0.7364" stop-color="#5c6e6d"/><stop offset="0.7684" stop-color="#5d6f70"/><stop offset="0.8004" stop-color="#5d6f71"/><stop offset="0.8324" stop-color="#5c6f71"/><stop offset="0.8645" stop-color="#5b6c6f"/><stop offset="0.8965" stop-color="#58686d"/><stop offset="0.9285" stop-color="#57656c"/><stop offset="0.9605" stop-color="#56646c"/><stop offset="0.9925" stop-color="#56646c"/><stop offset="1.0000" stop-color="#56646c"/></linearGradient><linearGradient id="b68" gradientUnits="userSpaceOnUse" x1="112" y1="0" x2="1986" y2="0"><stop offset="0.0000" stop-color="#6e5343"/><stop offset="0.0320" stop-color="#6f5343"/><stop offset="0.0640" stop-color="#705444"/><stop offset="0.0961" stop-color="#735949"/><stop offset="0.1281" stop-color="#775e4d"/><stop offset="0.1601" stop-color="#79604f"/><stop offset="0.1921" stop-color="#796150"/><stop offset="0.2241" stop-color="#786150"/><stop offset="0.2561" stop-color="#766351"/><stop offset="0.2882" stop-color="#756452"/><stop offset="0.3202" stop-color="#746552"/><stop offset="0.3522" stop-color="#726552"/><stop offset="0.3842" stop-color="#6c6452"/><stop offset="0.4162" stop-color="#666451"/><stop offset="0.4482" stop-color="#646451"/><stop offset="0.4803" stop-color="#626554"/><stop offset="0.5123" stop-color="#5f6659"/><stop offset="0.5443" stop-color="#5d675c"/><stop offset="0.5763" stop-color="#5c685e"/><stop offset="0.6083" stop-color="#5a6962"/><stop offset="0.6403" stop-color="#596a65"/><stop offset="0.6724" stop-color="#596a66"/><stop offset="0.7044" stop-color="#5a6b68"/><stop offset="0.7364" stop-color="#5c6d6d"/><stop offset="0.7684" stop-color="#5d6f70"/><stop offset="0.8004" stop-color="#5d6f71"/><stop offset="0.8324" stop-color="#5c6e70"/><stop offset="0.8645" stop-color="#5b6c6f"/><stop offset="0.8965" stop-color="#58686d"/><stop offset="0.9285" stop-color="#57656c"/><stop offset="0.9605" stop-color="#56646c"/><stop offset="0.9925" stop-color="#56646c"/><stop offset="1.0000" stop-color="#56646c"/></linearGradient><linearGradient id="b69" gradientUnits="userSpaceOnUse" x1="112" y1="0" x2="1986" y2="0"><stop offset="0.0000" stop-color="#6e5343"/><stop offset="0.0320" stop-color="#6f5343"/><stop offset="0.0640" stop-color="#705544"/><stop offset="0.0961" stop-color="#735949"/><stop offset="0.1281" stop-color="#775e4d"/><stop offset="0.1601" stop-color="#79604f"/><stop offset="0.1921" stop-color="#796150"/><stop offset="0.2241" stop-color="#786150"/><stop offset="0.2561" stop-color="#766351"/><stop offset="0.2882" stop-color="#756452"/><stop offset="0.3202" stop-color="#746552"/><stop offset="0.3522" stop-color="#726552"/><stop offset="0.3842" stop-color="#6c6452"/><stop offset="0.4162" stop-color="#666451"/><stop offset="0.4482" stop-color="#646451"/><stop offset="0.4803" stop-color="#626554"/><stop offset="0.5123" stop-color="#5f6659"/><stop offset="0.5443" stop-color="#5d675c"/><stop offset="0.5763" stop-color="#5c685e"/><stop offset="0.6083" stop-color="#5a6962"/><stop offset="0.6403" stop-color="#596a65"/><stop offset="0.6724" stop-color="#596a66"/><stop offset="0.7044" stop-color="#5a6b68"/><stop offset="0.7364" stop-color="#5c6d6d"/><stop offset="0.7684" stop-color="#5c6f70"/><stop offset="0.8004" stop-color="#5d6f71"/><stop offset="0.8324" stop-color="#5c6e70"/><stop offset="0.8645" stop-color="#5b6c6f"/><stop offset="0.8965" stop-color="#58686d"/><stop offset="0.9285" stop-color="#57656c"/><stop offset="0.9605" stop-color="#56656c"/><stop offset="0.9925" stop-color="#56646c"/><stop offset="1.0000" stop-color="#56646c"/></linearGradient><linearGradient id="b70" gradientUnits="userSpaceOnUse" x1="112" y1="0" x2="1986" y2="0"><stop offset="0.0000" stop-color="#4a3931"/><stop offset="0.0320" stop-color="#4a3931"/><stop offset="0.0640" stop-color="#4b3b32"/><stop offset="0.0961" stop-color="#4d3e34"/><stop offset="0.1281" stop-color="#4f4236"/><stop offset="0.1601" stop-color="#504437"/><stop offset="0.1921" stop-color="#504437"/><stop offset="0.2241" stop-color="#504436"/><stop offset="0.2561" stop-color="#504436"/><stop offset="0.2882" stop-color="#4f4335"/><stop offset="0.3202" stop-color="#4c4033"/><stop offset="0.3522" stop-color="#4a3e32"/><stop offset="0.3842" stop-color="#493e33"/><stop offset="0.4162" stop-color="#483f34"/><stop offset="0.4482" stop-color="#454036"/><stop offset="0.4803" stop-color="#424139"/><stop offset="0.5123" stop-color="#40423b"/><stop offset="0.5443" stop-color="#3f423b"/><stop offset="0.5763" stop-color="#3f423c"/><stop offset="0.6083" stop-color="#3f423c"/><stop offset="0.6403" stop-color="#3f423d"/><stop offset="0.6724" stop-color="#3f433f"/><stop offset="0.7044" stop-color="#3e4542"/><stop offset="0.7364" stop-color="#3d4645"/><stop offset="0.7684" stop-color="#3c4746"/><stop offset="0.8004" stop-color="#3c4747"/><stop offset="0.8324" stop-color="#3c4747"/><stop offset="0.8645" stop-color="#3c4747"/><stop offset="0.8965" stop-color="#3c4748"/><stop offset="0.9285" stop-color="#3d4849"/><stop offset="0.9605" stop-color="#3d4849"/><stop offset="0.9925" stop-color="#3c4849"/><stop offset="1.0000" stop-color="#3c4849"/></linearGradient><linearGradient id="b71" gradientUnits="userSpaceOnUse" x1="112" y1="0" x2="1986" y2="0"><stop offset="0.0000" stop-color="#493931"/><stop offset="0.0320" stop-color="#4a3931"/><stop offset="0.0640" stop-color="#4a3b32"/><stop offset="0.0961" stop-color="#4d3e34"/><stop offset="0.1281" stop-color="#4f4236"/><stop offset="0.1601" stop-color="#504437"/><stop offset="0.1921" stop-color="#504437"/><stop offset="0.2241" stop-color="#504436"/><stop offset="0.2561" stop-color="#504436"/><stop offset="0.2882" stop-color="#4f4335"/><stop offset="0.3202" stop-color="#4c4033"/><stop offset="0.3522" stop-color="#4a3e32"/><stop offset="0.3842" stop-color="#493e33"/><stop offset="0.4162" stop-color="#483f34"/><stop offset="0.4482" stop-color="#453f36"/><stop offset="0.4803" stop-color="#424139"/><stop offset="0.5123" stop-color="#40423b"/><stop offset="0.5443" stop-color="#3f423b"/><stop offset="0.5763" stop-color="#3f423c"/><stop offset="0.6083" stop-color="#3f423c"/><stop offset="0.6403" stop-color="#3f423d"/><stop offset="0.6724" stop-color="#3f433f"/><stop offset="0.7044" stop-color="#3e4542"/><stop offset="0.7364" stop-color="#3d4645"/><stop offset="0.7684" stop-color="#3c4746"/><stop offset="0.8004" stop-color="#3c4747"/><stop offset="0.8324" stop-color="#3c4747"/><stop offset="0.8645" stop-color="#3c4747"/><stop offset="0.8965" stop-color="#3c4748"/><stop offset="0.9285" stop-color="#3c4849"/><stop offset="0.9605" stop-color="#3c4849"/><stop offset="0.9925" stop-color="#3c4749"/><stop offset="1.0000" stop-color="#3c4748"/></linearGradient><linearGradient id="b72" gradientUnits="userSpaceOnUse" x1="112" y1="0" x2="1986" y2="0"><stop offset="0.0000" stop-color="#493930"/><stop offset="0.0320" stop-color="#4a3931"/><stop offset="0.0640" stop-color="#4a3a31"/><stop offset="0.0961" stop-color="#4c3e33"/><stop offset="0.1281" stop-color="#4f4236"/><stop offset="0.1601" stop-color="#504437"/><stop offset="0.1921" stop-color="#504437"/><stop offset="0.2241" stop-color="#504436"/><stop offset="0.2561" stop-color="#504436"/><stop offset="0.2882" stop-color="#4f4335"/><stop offset="0.3202" stop-color="#4c3f33"/><stop offset="0.3522" stop-color="#4a3e32"/><stop offset="0.3842" stop-color="#493e32"/><stop offset="0.4162" stop-color="#483e34"/><stop offset="0.4482" stop-color="#453f36"/><stop offset="0.4803" stop-color="#424139"/><stop offset="0.5123" stop-color="#40423b"/><stop offset="0.5443" stop-color="#3f423b"/><stop offset="0.5763" stop-color="#3f423c"/><stop offset="0.6083" stop-color="#3f423c"/><stop offset="0.6403" stop-color="#3f423c"/><stop offset="0.6724" stop-color="#3f433f"/><stop offset="0.7044" stop-color="#3e4542"/><stop offset="0.7364" stop-color="#3d4645"/><stop offset="0.7684" stop-color="#3c4746"/><stop offset="0.8004" stop-color="#3c4747"/><stop offset="0.8324" stop-color="#3c4747"/><stop offset="0.8645" stop-color="#3c4747"/><stop offset="0.8965" stop-color="#3c4748"/><stop offset="0.9285" stop-color="#3c4849"/><stop offset="0.9605" stop-color="#3c4849"/><stop offset="0.9925" stop-color="#3c4748"/><stop offset="1.0000" stop-color="#3c4748"/></linearGradient><linearGradient id="b73" gradientUnits="userSpaceOnUse" x1="112" y1="0" x2="1986" y2="0"><stop offset="0.0000" stop-color="#493930"/><stop offset="0.0320" stop-color="#493931"/><stop offset="0.0640" stop-color="#4a3a31"/><stop offset="0.0961" stop-color="#4c3d33"/><stop offset="0.1281" stop-color="#4f4236"/><stop offset="0.1601" stop-color="#504437"/><stop offset="0.1921" stop-color="#504437"/><stop offset="0.2241" stop-color="#504436"/><stop offset="0.2561" stop-color="#504436"/><stop offset="0.2882" stop-color="#4e4235"/><stop offset="0.3202" stop-color="#4b3f33"/><stop offset="0.3522" stop-color="#4a3e32"/><stop offset="0.3842" stop-color="#493e32"/><stop offset="0.4162" stop-color="#483e34"/><stop offset="0.4482" stop-color="#453f36"/><stop offset="0.4803" stop-color="#424139"/><stop offset="0.5123" stop-color="#40423b"/><stop offset="0.5443" stop-color="#3f423b"/><stop offset="0.5763" stop-color="#3f423c"/><stop offset="0.6083" stop-color="#3f423c"/><stop offset="0.6403" stop-color="#3f423c"/><stop offset="0.6724" stop-color="#3f433f"/><stop offset="0.7044" stop-color="#3e4542"/><stop offset="0.7364" stop-color="#3d4645"/><stop offset="0.7684" stop-color="#3c4746"/><stop offset="0.8004" stop-color="#3c4747"/><stop offset="0.8324" stop-color="#3c4747"/><stop offset="0.8645" stop-color="#3c4747"/><stop offset="0.8965" stop-color="#3c4748"/><stop offset="0.9285" stop-color="#3c4749"/><stop offset="0.9605" stop-color="#3c4749"/><stop offset="0.9925" stop-color="#3b4748"/><stop offset="1.0000" stop-color="#3b4748"/></linearGradient><linearGradient id="b74" gradientUnits="userSpaceOnUse" x1="112" y1="0" x2="1986" y2="0"><stop offset="0.0000" stop-color="#493930"/><stop offset="0.0320" stop-color="#493930"/><stop offset="0.0640" stop-color="#4a3a31"/><stop offset="0.0961" stop-color="#4c3d33"/><stop offset="0.1281" stop-color="#4f4236"/><stop offset="0.1601" stop-color="#504437"/><stop offset="0.1921" stop-color="#504437"/><stop offset="0.2241" stop-color="#504436"/><stop offset="0.2561" stop-color="#504436"/><stop offset="0.2882" stop-color="#4e4235"/><stop offset="0.3202" stop-color="#4b3f33"/><stop offset="0.3522" stop-color="#4a3e32"/><stop offset="0.3842" stop-color="#493e32"/><stop offset="0.4162" stop-color="#483e34"/><stop offset="0.4482" stop-color="#453f36"/><stop offset="0.4803" stop-color="#424139"/><stop offset="0.5123" stop-color="#40423b"/><stop offset="0.5443" stop-color="#3f423b"/><stop offset="0.5763" stop-color="#3f423c"/><stop offset="0.6083" stop-color="#3f423c"/><stop offset="0.6403" stop-color="#3f423c"/><stop offset="0.6724" stop-color="#3f433e"/><stop offset="0.7044" stop-color="#3e4542"/><stop offset="0.7364" stop-color="#3d4645"/><stop offset="0.7684" stop-color="#3c4746"/><stop offset="0.8004" stop-color="#3c4747"/><stop offset="0.8324" stop-color="#3c4747"/><stop offset="0.8645" stop-color="#3c4747"/><stop offset="0.8965" stop-color="#3c4748"/><stop offset="0.9285" stop-color="#3c4748"/><stop offset="0.9605" stop-color="#3b4748"/><stop offset="0.9925" stop-color="#3b4648"/><stop offset="1.0000" stop-color="#3b4648"/></linearGradient><linearGradient id="b75" gradientUnits="userSpaceOnUse" x1="112" y1="0" x2="1986" y2="0"><stop offset="0.0000" stop-color="#493930"/><stop offset="0.0320" stop-color="#493930"/><stop offset="0.0640" stop-color="#4a3a31"/><stop offset="0.0961" stop-color="#4c3d33"/><stop offset="0.1281" stop-color="#4f4136"/><stop offset="0.1601" stop-color="#504437"/><stop offset="0.1921" stop-color="#504437"/><stop offset="0.2241" stop-color="#504436"/><stop offset="0.2561" stop-color="#4f4335"/><stop offset="0.2882" stop-color="#4e4234"/><stop offset="0.3202" stop-color="#4b3f33"/><stop offset="0.3522" stop-color="#4a3e32"/><stop offset="0.3842" stop-color="#493e32"/><stop offset="0.4162" stop-color="#483e34"/><stop offset="0.4482" stop-color="#453f36"/><stop offset="0.4803" stop-color="#424038"/><stop offset="0.5123" stop-color="#40423b"/><stop offset="0.5443" stop-color="#3f423b"/><stop offset="0.5763" stop-color="#3f423b"/><stop offset="0.6083" stop-color="#3f423c"/><stop offset="0.6403" stop-color="#3f423c"/><stop offset="0.6724" stop-color="#3f433e"/><stop offset="0.7044" stop-color="#3e4542"/><stop offset="0.7364" stop-color="#3d4645"/><stop offset="0.7684" stop-color="#3c4746"/><stop offset="0.8004" stop-color="#3c4747"/><stop offset="0.8324" stop-color="#3c4747"/><stop offset="0.8645" stop-color="#3c4747"/><stop offset="0.8965" stop-color="#3b4748"/><stop offset="0.9285" stop-color="#3b4648"/><stop offset="0.9605" stop-color="#3b4648"/><stop offset="0.9925" stop-color="#3b4648"/><stop offset="1.0000" stop-color="#3b4648"/></linearGradient><linearGradient id="b76" gradientUnits="userSpaceOnUse" x1="112" y1="0" x2="1986" y2="0"><stop offset="0.0000" stop-color="#493830"/><stop offset="0.0320" stop-color="#493930"/><stop offset="0.0640" stop-color="#4a3931"/><stop offset="0.0961" stop-color="#4b3c32"/><stop offset="0.1281" stop-color="#4e4135"/><stop offset="0.1601" stop-color="#504337"/><stop offset="0.1921" stop-color="#504437"/><stop offset="0.2241" stop-color="#504336"/><stop offset="0.2561" stop-color="#4f4335"/><stop offset="0.2882" stop-color="#4e4234"/><stop offset="0.3202" stop-color="#4b3f33"/><stop offset="0.3522" stop-color="#4a3e32"/><stop offset="0.3842" stop-color="#493e32"/><stop offset="0.4162" stop-color="#473e34"/><stop offset="0.4482" stop-color="#463f35"/><stop offset="0.4803" stop-color="#434038"/><stop offset="0.5123" stop-color="#40423b"/><stop offset="0.5443" stop-color="#3f423b"/><stop offset="0.5763" stop-color="#3f423b"/><stop offset="0.6083" stop-color="#3f423c"/><stop offset="0.6403" stop-color="#3f423c"/><stop offset="0.6724" stop-color="#3f433e"/><stop offset="0.7044" stop-color="#3e4442"/><stop offset="0.7364" stop-color="#3d4645"/><stop offset="0.7684" stop-color="#3c4646"/><stop offset="0.8004" stop-color="#3c4747"/><stop offset="0.8324" stop-color="#3c4747"/><stop offset="0.8645" stop-color="#3c4747"/><stop offset="0.8965" stop-color="#3b4648"/><stop offset="0.9285" stop-color="#3b4648"/><stop offset="0.9605" stop-color="#3b4648"/><stop offset="0.9925" stop-color="#3a4647"/><stop offset="1.0000" stop-color="#3a4647"/></linearGradient><linearGradient id="b77" gradientUnits="userSpaceOnUse" x1="112" y1="0" x2="1986" y2="0"><stop offset="0.0000" stop-color="#493830"/><stop offset="0.0320" stop-color="#493930"/><stop offset="0.0640" stop-color="#4a3931"/><stop offset="0.0961" stop-color="#4b3c32"/><stop offset="0.1281" stop-color="#4e4035"/><stop offset="0.1601" stop-color="#504337"/><stop offset="0.1921" stop-color="#504437"/><stop offset="0.2241" stop-color="#4f4336"/><stop offset="0.2561" stop-color="#4f4335"/><stop offset="0.2882" stop-color="#4d4134"/><stop offset="0.3202" stop-color="#4b3f33"/><stop offset="0.3522" stop-color="#4a3e32"/><stop offset="0.3842" stop-color="#493e33"/><stop offset="0.4162" stop-color="#473e34"/><stop offset="0.4482" stop-color="#463f35"/><stop offset="0.4803" stop-color="#434038"/><stop offset="0.5123" stop-color="#40423a"/><stop offset="0.5443" stop-color="#40423b"/><stop offset="0.5763" stop-color="#3f423b"/><stop offset="0.6083" stop-color="#3f423c"/><stop offset="0.6403" stop-color="#3f423c"/><stop offset="0.6724" stop-color="#3f433e"/><stop offset="0.7044" stop-color="#3e4441"/><stop offset="0.7364" stop-color="#3d4644"/><stop offset="0.7684" stop-color="#3c4646"/><stop offset="0.8004" stop-color="#3c4747"/><stop offset="0.8324" stop-color="#3c4747"/><stop offset="0.8645" stop-color="#3c4647"/><stop offset="0.8965" stop-color="#3b4648"/><stop offset="0.9285" stop-color="#3b4648"/><stop offset="0.9605" stop-color="#3a4648"/><stop offset="0.9925" stop-color="#3a4547"/><stop offset="1.0000" stop-color="#3a4547"/></linearGradient><linearGradient id="b78" gradientUnits="userSpaceOnUse" x1="112" y1="0" x2="1986" y2="0"><stop offset="0.0000" stop-color="#493830"/><stop offset="0.0320" stop-color="#493830"/><stop offset="0.0640" stop-color="#4a3931"/><stop offset="0.0961" stop-color="#4b3b32"/><stop offset="0.1281" stop-color="#4e4035"/><stop offset="0.1601" stop-color="#504337"/><stop offset="0.1921" stop-color="#504337"/><stop offset="0.2241" stop-color="#4f4336"/><stop offset="0.2561" stop-color="#4f4335"/><stop offset="0.2882" stop-color="#4d4134"/><stop offset="0.3202" stop-color="#4b3f33"/><stop offset="0.3522" stop-color="#4a3e32"/><stop offset="0.3842" stop-color="#493e33"/><stop offset="0.4162" stop-color="#473e34"/><stop offset="0.4482" stop-color="#463e35"/><stop offset="0.4803" stop-color="#434038"/><stop offset="0.5123" stop-color="#40413a"/><stop offset="0.5443" stop-color="#40423b"/><stop offset="0.5763" stop-color="#3f423b"/><stop offset="0.6083" stop-color="#3f423c"/><stop offset="0.6403" stop-color="#3f423c"/><stop offset="0.6724" stop-color="#3f433e"/><stop offset="0.7044" stop-color="#3e4441"/><stop offset="0.7364" stop-color="#3d4644"/><stop offset="0.7684" stop-color="#3c4646"/><stop offset="0.8004" stop-color="#3c4746"/><stop offset="0.8324" stop-color="#3c4647"/><stop offset="0.8645" stop-color="#3b4647"/><stop offset="0.8965" stop-color="#3b4648"/><stop offset="0.9285" stop-color="#3b4648"/><stop offset="0.9605" stop-color="#3a4547"/><stop offset="0.9925" stop-color="#3a4547"/><stop offset="1.0000" stop-color="#3a4547"/></linearGradient><linearGradient id="b79" gradientUnits="userSpaceOnUse" x1="112" y1="0" x2="1986" y2="0"><stop offset="0.0000" stop-color="#493830"/><stop offset="0.0320" stop-color="#493830"/><stop offset="0.0640" stop-color="#4a3931"/><stop offset="0.0961" stop-color="#4b3b32"/><stop offset="0.1281" stop-color="#4d3f34"/><stop offset="0.1601" stop-color="#4f4236"/><stop offset="0.1921" stop-color="#4f4336"/><stop offset="0.2241" stop-color="#4f4336"/><stop offset="0.2561" stop-color="#4e4235"/><stop offset="0.2882" stop-color="#4d4134"/><stop offset="0.3202" stop-color="#4b3f33"/><stop offset="0.3522" stop-color="#4a3e32"/><stop offset="0.3842" stop-color="#483e33"/><stop offset="0.4162" stop-color="#473e33"/><stop offset="0.4482" stop-color="#463e35"/><stop offset="0.4803" stop-color="#434038"/><stop offset="0.5123" stop-color="#41413a"/><stop offset="0.5443" stop-color="#40423b"/><stop offset="0.5763" stop-color="#3f423b"/><stop offset="0.6083" stop-color="#3f423c"/><stop offset="0.6403" stop-color="#3f423c"/><stop offset="0.6724" stop-color="#3f433e"/><stop offset="0.7044" stop-color="#3e4441"/><stop offset="0.7364" stop-color="#3d4544"/><stop offset="0.7684" stop-color="#3c4646"/><stop offset="0.8004" stop-color="#3c4646"/><stop offset="0.8324" stop-color="#3c4647"/><stop offset="0.8645" stop-color="#3b4647"/><stop offset="0.8965" stop-color="#3b4647"/><stop offset="0.9285" stop-color="#3a4548"/><stop offset="0.9605" stop-color="#3a4547"/><stop offset="0.9925" stop-color="#3a4547"/><stop offset="1.0000" stop-color="#3a4547"/></linearGradient><linearGradient id="b80" gradientUnits="userSpaceOnUse" x1="112" y1="0" x2="1986" y2="0"><stop offset="0.0000" stop-color="#493830"/><stop offset="0.0320" stop-color="#493830"/><stop offset="0.0640" stop-color="#493931"/><stop offset="0.0961" stop-color="#4a3a31"/><stop offset="0.1281" stop-color="#4d3e34"/><stop offset="0.1601" stop-color="#4f4236"/><stop offset="0.1921" stop-color="#4f4336"/><stop offset="0.2241" stop-color="#4f4336"/><stop offset="0.2561" stop-color="#4e4235"/><stop offset="0.2882" stop-color="#4d4134"/><stop offset="0.3202" stop-color="#4b3f33"/><stop offset="0.3522" stop-color="#4a3e32"/><stop offset="0.3842" stop-color="#483e33"/><stop offset="0.4162" stop-color="#473e33"/><stop offset="0.4482" stop-color="#463e34"/><stop offset="0.4803" stop-color="#434037"/><stop offset="0.5123" stop-color="#41413a"/><stop offset="0.5443" stop-color="#40423b"/><stop offset="0.5763" stop-color="#40423b"/><stop offset="0.6083" stop-color="#3f423b"/><stop offset="0.6403" stop-color="#3f423c"/><stop offset="0.6724" stop-color="#3f433e"/><stop offset="0.7044" stop-color="#3e4441"/><stop offset="0.7364" stop-color="#3d4544"/><stop offset="0.7684" stop-color="#3c4645"/><stop offset="0.8004" stop-color="#3c4646"/><stop offset="0.8324" stop-color="#3c4647"/><stop offset="0.8645" stop-color="#3b4647"/><stop offset="0.8965" stop-color="#3b4647"/><stop offset="0.9285" stop-color="#3a4547"/><stop offset="0.9605" stop-color="#3a4547"/><stop offset="0.9925" stop-color="#394446"/><stop offset="1.0000" stop-color="#394446"/></linearGradient><linearGradient id="b81" gradientUnits="userSpaceOnUse" x1="112" y1="0" x2="1986" y2="0"><stop offset="0.0000" stop-color="#493930"/><stop offset="0.0320" stop-color="#493930"/><stop offset="0.0640" stop-color="#493930"/><stop offset="0.0961" stop-color="#4a3a31"/><stop offset="0.1281" stop-color="#4c3e34"/><stop offset="0.1601" stop-color="#4e4136"/><stop offset="0.1921" stop-color="#4f4236"/><stop offset="0.2241" stop-color="#4f4236"/><stop offset="0.2561" stop-color="#4e4235"/><stop offset="0.2882" stop-color="#4c4034"/><stop offset="0.3202" stop-color="#4b3f33"/><stop offset="0.3522" stop-color="#493e33"/><stop offset="0.3842" stop-color="#483e33"/><stop offset="0.4162" stop-color="#473d33"/><stop offset="0.4482" stop-color="#463e34"/><stop offset="0.4803" stop-color="#444037"/><stop offset="0.5123" stop-color="#41413a"/><stop offset="0.5443" stop-color="#40423b"/><stop offset="0.5763" stop-color="#40423b"/><stop offset="0.6083" stop-color="#40423b"/><stop offset="0.6403" stop-color="#3f423c"/><stop offset="0.6724" stop-color="#3f433e"/><stop offset="0.7044" stop-color="#3e4441"/><stop offset="0.7364" stop-color="#3d4543"/><stop offset="0.7684" stop-color="#3d4645"/><stop offset="0.8004" stop-color="#3c4646"/><stop offset="0.8324" stop-color="#3c4647"/><stop offset="0.8645" stop-color="#3b4647"/><stop offset="0.8965" stop-color="#3b4647"/><stop offset="0.9285" stop-color="#3a4547"/><stop offset="0.9605" stop-color="#394447"/><stop offset="0.9925" stop-color="#394446"/><stop offset="1.0000" stop-color="#394446"/></linearGradient><linearGradient id="b82" gradientUnits="userSpaceOnUse" x1="112" y1="0" x2="1986" y2="0"><stop offset="0.0000" stop-color="#493930"/><stop offset="0.0320" stop-color="#493930"/><stop offset="0.0640" stop-color="#493930"/><stop offset="0.0961" stop-color="#4a3a31"/><stop offset="0.1281" stop-color="#4c3d33"/><stop offset="0.1601" stop-color="#4e4135"/><stop offset="0.1921" stop-color="#4f4236"/><stop offset="0.2241" stop-color="#4e4236"/><stop offset="0.2561" stop-color="#4e4235"/><stop offset="0.2882" stop-color="#4c4034"/><stop offset="0.3202" stop-color="#4a3f33"/><stop offset="0.3522" stop-color="#493e33"/><stop offset="0.3842" stop-color="#483e33"/><stop offset="0.4162" stop-color="#473d33"/><stop offset="0.4482" stop-color="#463e34"/><stop offset="0.4803" stop-color="#443f37"/><stop offset="0.5123" stop-color="#41413a"/><stop offset="0.5443" stop-color="#40423b"/><stop offset="0.5763" stop-color="#40423b"/><stop offset="0.6083" stop-color="#40423b"/><stop offset="0.6403" stop-color="#3f423c"/><stop offset="0.6724" stop-color="#3f433e"/><stop offset="0.7044" stop-color="#3e4441"/><stop offset="0.7364" stop-color="#3d4543"/><stop offset="0.7684" stop-color="#3d4645"/><stop offset="0.8004" stop-color="#3c4646"/><stop offset="0.8324" stop-color="#3c4646"/><stop offset="0.8645" stop-color="#3b4647"/><stop offset="0.8965" stop-color="#3a4547"/><stop offset="0.9285" stop-color="#3a4547"/><stop offset="0.9605" stop-color="#394446"/><stop offset="0.9925" stop-color="#394446"/><stop offset="1.0000" stop-color="#394446"/></linearGradient><linearGradient id="b83" gradientUnits="userSpaceOnUse" x1="112" y1="0" x2="1986" y2="0"><stop offset="0.0000" stop-color="#493930"/><stop offset="0.0320" stop-color="#493930"/><stop offset="0.0640" stop-color="#493930"/><stop offset="0.0961" stop-color="#4a3a31"/><stop offset="0.1281" stop-color="#4c3d33"/><stop offset="0.1601" stop-color="#4e4035"/><stop offset="0.1921" stop-color="#4e4236"/><stop offset="0.2241" stop-color="#4e4235"/><stop offset="0.2561" stop-color="#4d4135"/><stop offset="0.2882" stop-color="#4c4034"/><stop offset="0.3202" stop-color="#4a3f33"/><stop offset="0.3522" stop-color="#493e33"/><stop offset="0.3842" stop-color="#483e33"/><stop offset="0.4162" stop-color="#473d33"/><stop offset="0.4482" stop-color="#463e34"/><stop offset="0.4803" stop-color="#443f37"/><stop offset="0.5123" stop-color="#414139"/><stop offset="0.5443" stop-color="#40423b"/><stop offset="0.5763" stop-color="#40423b"/><stop offset="0.6083" stop-color="#40423b"/><stop offset="0.6403" stop-color="#40423c"/><stop offset="0.6724" stop-color="#3f433e"/><stop offset="0.7044" stop-color="#3e4440"/><stop offset="0.7364" stop-color="#3d4543"/><stop offset="0.7684" stop-color="#3d4645"/><stop offset="0.8004" stop-color="#3c4646"/><stop offset="0.8324" stop-color="#3c4646"/><stop offset="0.8645" stop-color="#3b4647"/><stop offset="0.8965" stop-color="#3a4547"/><stop offset="0.9285" stop-color="#3a4547"/><stop offset="0.9605" stop-color="#394446"/><stop offset="0.9925" stop-color="#394446"/><stop offset="1.0000" stop-color="#394446"/></linearGradient><linearGradient id="b84" gradientUnits="userSpaceOnUse" x1="112" y1="0" x2="1986" y2="0"><stop offset="0.0000" stop-color="#493930"/><stop offset="0.0320" stop-color="#493930"/><stop offset="0.0640" stop-color="#493930"/><stop offset="0.0961" stop-color="#4a3a31"/><stop offset="0.1281" stop-color="#4c3d33"/><stop offset="0.1601" stop-color="#4d4035"/><stop offset="0.1921" stop-color="#4e4135"/><stop offset="0.2241" stop-color="#4e4235"/><stop offset="0.2561" stop-color="#4d4135"/><stop offset="0.2882" stop-color="#4c4034"/><stop offset="0.3202" stop-color="#4a3f33"/><stop offset="0.3522" stop-color="#493e33"/><stop offset="0.3842" stop-color="#483e33"/><stop offset="0.4162" stop-color="#473d33"/><stop offset="0.4482" stop-color="#463e34"/><stop offset="0.4803" stop-color="#443f36"/><stop offset="0.5123" stop-color="#424139"/><stop offset="0.5443" stop-color="#40423b"/><stop offset="0.5763" stop-color="#40423b"/><stop offset="0.6083" stop-color="#40423b"/><stop offset="0.6403" stop-color="#40423c"/><stop offset="0.6724" stop-color="#3f433e"/><stop offset="0.7044" stop-color="#3e4440"/><stop offset="0.7364" stop-color="#3d4543"/><stop offset="0.7684" stop-color="#3d4645"/><stop offset="0.8004" stop-color="#3c4646"/><stop offset="0.8324" stop-color="#3c4646"/><stop offset="0.8645" stop-color="#3b4647"/><stop offset="0.8965" stop-color="#3a4547"/><stop offset="0.9285" stop-color="#3a4547"/><stop offset="0.9605" stop-color="#394446"/><stop offset="0.9925" stop-color="#394446"/><stop offset="1.0000" stop-color="#394446"/></linearGradient><linearGradient id="b85" gradientUnits="userSpaceOnUse" x1="112" y1="0" x2="1986" y2="0"><stop offset="0.0000" stop-color="#6e5342"/><stop offset="0.0320" stop-color="#6e5342"/><stop offset="0.0640" stop-color="#6e5443"/><stop offset="0.0961" stop-color="#6f5544"/><stop offset="0.1281" stop-color="#6f5745"/><stop offset="0.1601" stop-color="#705746"/><stop offset="0.1921" stop-color="#705746"/><stop offset="0.2241" stop-color="#6f5847"/><stop offset="0.2561" stop-color="#6f5a48"/><stop offset="0.2882" stop-color="#6f5b48"/><stop offset="0.3202" stop-color="#6f5c48"/><stop offset="0.3522" stop-color="#6e5c49"/><stop offset="0.3842" stop-color="#6d5d4b"/><stop offset="0.4162" stop-color="#6b5e4d"/><stop offset="0.4482" stop-color="#6b5e4e"/><stop offset="0.4803" stop-color="#6a5f4f"/><stop offset="0.5123" stop-color="#676152"/><stop offset="0.5443" stop-color="#636456"/><stop offset="0.5763" stop-color="#616658"/><stop offset="0.6083" stop-color="#616659"/><stop offset="0.6403" stop-color="#5f675c"/><stop offset="0.6724" stop-color="#5c6960"/><stop offset="0.7044" stop-color="#5b6a62"/><stop offset="0.7364" stop-color="#5a6a63"/><stop offset="0.7684" stop-color="#5a6a64"/><stop offset="0.8004" stop-color="#596a67"/><stop offset="0.8324" stop-color="#596a68"/><stop offset="0.8645" stop-color="#596a69"/><stop offset="0.8965" stop-color="#5a6b6a"/><stop offset="0.9285" stop-color="#5c6d6d"/><stop offset="0.9605" stop-color="#5e6f70"/><stop offset="0.9925" stop-color="#5e6f71"/><stop offset="1.0000" stop-color="#5e6f71"/></linearGradient><linearGradient id="b86" gradientUnits="userSpaceOnUse" x1="112" y1="0" x2="1986" y2="0"><stop offset="0.0000" stop-color="#6e5342"/><stop offset="0.0320" stop-color="#6e5342"/><stop offset="0.0640" stop-color="#6e5443"/><stop offset="0.0961" stop-color="#6f5544"/><stop offset="0.1281" stop-color="#6f5745"/><stop offset="0.1601" stop-color="#705746"/><stop offset="0.1921" stop-color="#705746"/><stop offset="0.2241" stop-color="#705847"/><stop offset="0.2561" stop-color="#6f5a48"/><stop offset="0.2882" stop-color="#6f5c48"/><stop offset="0.3202" stop-color="#6f5c48"/><stop offset="0.3522" stop-color="#6e5c49"/><stop offset="0.3842" stop-color="#6d5d4b"/><stop offset="0.4162" stop-color="#6b5e4d"/><stop offset="0.4482" stop-color="#6b5e4e"/><stop offset="0.4803" stop-color="#6a5f4f"/><stop offset="0.5123" stop-color="#676152"/><stop offset="0.5443" stop-color="#636456"/><stop offset="0.5763" stop-color="#616658"/><stop offset="0.6083" stop-color="#616659"/><stop offset="0.6403" stop-color="#5f675b"/><stop offset="0.6724" stop-color="#5c6960"/><stop offset="0.7044" stop-color="#5b6a62"/><stop offset="0.7364" stop-color="#5a6a63"/><stop offset="0.7684" stop-color="#5a6a64"/><stop offset="0.8004" stop-color="#596a67"/><stop offset="0.8324" stop-color="#596a69"/><stop offset="0.8645" stop-color="#596a69"/><stop offset="0.8965" stop-color="#5a6b6a"/><stop offset="0.9285" stop-color="#5c6d6d"/><stop offset="0.9605" stop-color="#5e6f70"/><stop offset="0.9925" stop-color="#5e6f71"/><stop offset="1.0000" stop-color="#5f6f71"/></linearGradient><linearGradient id="b87" gradientUnits="userSpaceOnUse" x1="112" y1="0" x2="1986" y2="0"><stop offset="0.0000" stop-color="#6e5342"/><stop offset="0.0320" stop-color="#6e5342"/><stop offset="0.0640" stop-color="#6e5443"/><stop offset="0.0961" stop-color="#6f5544"/><stop offset="0.1281" stop-color="#6f5745"/><stop offset="0.1601" stop-color="#705746"/><stop offset="0.1921" stop-color="#705746"/><stop offset="0.2241" stop-color="#705847"/><stop offset="0.2561" stop-color="#6f5a48"/><stop offset="0.2882" stop-color="#6f5c48"/><stop offset="0.3202" stop-color="#6f5c48"/><stop offset="0.3522" stop-color="#6e5c49"/><stop offset="0.3842" stop-color="#6d5d4b"/><stop offset="0.4162" stop-color="#6b5e4d"/><stop offset="0.4482" stop-color="#6b5e4e"/><stop offset="0.4803" stop-color="#6a5f4f"/><stop offset="0.5123" stop-color="#676152"/><stop offset="0.5443" stop-color="#636456"/><stop offset="0.5763" stop-color="#616658"/><stop offset="0.6083" stop-color="#616659"/><stop offset="0.6403" stop-color="#5f675b"/><stop offset="0.6724" stop-color="#5c6960"/><stop offset="0.7044" stop-color="#5b6a62"/><stop offset="0.7364" stop-color="#5a6a63"/><stop offset="0.7684" stop-color="#5a6a64"/><stop offset="0.8004" stop-color="#596a67"/><stop offset="0.8324" stop-color="#596a69"/><stop offset="0.8645" stop-color="#596a69"/><stop offset="0.8965" stop-color="#5a6b6a"/><stop offset="0.9285" stop-color="#5c6d6e"/><stop offset="0.9605" stop-color="#5e6f70"/><stop offset="0.9925" stop-color="#5f7071"/><stop offset="1.0000" stop-color="#5f7071"/></linearGradient><linearGradient id="b88" gradientUnits="userSpaceOnUse" x1="112" y1="0" x2="1986" y2="0"><stop offset="0.0000" stop-color="#6e5342"/><stop offset="0.0320" stop-color="#6e5342"/><stop offset="0.0640" stop-color="#6e5443"/><stop offset="0.0961" stop-color="#6f5544"/><stop offset="0.1281" stop-color="#6f5746"/><stop offset="0.1601" stop-color="#705746"/><stop offset="0.1921" stop-color="#705746"/><stop offset="0.2241" stop-color="#705847"/><stop offset="0.2561" stop-color="#6f5a48"/><stop offset="0.2882" stop-color="#6f5c48"/><stop offset="0.3202" stop-color="#6f5c48"/><stop offset="0.3522" stop-color="#6e5c49"/><stop offset="0.3842" stop-color="#6d5d4b"/><stop offset="0.4162" stop-color="#6b5e4e"/><stop offset="0.4482" stop-color="#6b5e4e"/><stop offset="0.4803" stop-color="#6a5f4f"/><stop offset="0.5123" stop-color="#676152"/><stop offset="0.5443" stop-color="#636456"/><stop offset="0.5763" stop-color="#616658"/><stop offset="0.6083" stop-color="#616659"/><stop offset="0.6403" stop-color="#5f675b"/><stop offset="0.6724" stop-color="#5c6960"/><stop offset="0.7044" stop-color="#5b6a62"/><stop offset="0.7364" stop-color="#5a6a63"/><stop offset="0.7684" stop-color="#5a6a64"/><stop offset="0.8004" stop-color="#596a67"/><stop offset="0.8324" stop-color="#596a69"/><stop offset="0.8645" stop-color="#596a69"/><stop offset="0.8965" stop-color="#596b6a"/><stop offset="0.9285" stop-color="#5c6d6e"/><stop offset="0.9605" stop-color="#5e6f71"/><stop offset="0.9925" stop-color="#5f7071"/><stop offset="1.0000" stop-color="#5f7071"/></linearGradient><linearGradient id="b89" gradientUnits="userSpaceOnUse" x1="112" y1="0" x2="1986" y2="0"><stop offset="0.0000" stop-color="#6e5342"/><stop offset="0.0320" stop-color="#6e5342"/><stop offset="0.0640" stop-color="#6e5443"/><stop offset="0.0961" stop-color="#6f5544"/><stop offset="0.1281" stop-color="#6f5746"/><stop offset="0.1601" stop-color="#705746"/><stop offset="0.1921" stop-color="#705746"/><stop offset="0.2241" stop-color="#705847"/><stop offset="0.2561" stop-color="#6f5a48"/><stop offset="0.2882" stop-color="#6f5c48"/><stop offset="0.3202" stop-color="#6f5c48"/><stop offset="0.3522" stop-color="#6e5c49"/><stop offset="0.3842" stop-color="#6d5d4b"/><stop offset="0.4162" stop-color="#6b5e4e"/><stop offset="0.4482" stop-color="#6b5e4e"/><stop offset="0.4803" stop-color="#6a5f4f"/><stop offset="0.5123" stop-color="#676152"/><stop offset="0.5443" stop-color="#636556"/><stop offset="0.5763" stop-color="#616658"/><stop offset="0.6083" stop-color="#616659"/><stop offset="0.6403" stop-color="#5f675b"/><stop offset="0.6724" stop-color="#5c6960"/><stop offset="0.7044" stop-color="#5b6a62"/><stop offset="0.7364" stop-color="#5a6a63"/><stop offset="0.7684" stop-color="#5a6a64"/><stop offset="0.8004" stop-color="#596a67"/><stop offset="0.8324" stop-color="#596a69"/><stop offset="0.8645" stop-color="#596a69"/><stop offset="0.8965" stop-color="#5a6b6a"/><stop offset="0.9285" stop-color="#5c6e6e"/><stop offset="0.9605" stop-color="#5e6f71"/><stop offset="0.9925" stop-color="#5f7071"/><stop offset="1.0000" stop-color="#5f7071"/></linearGradient><linearGradient id="b90" gradientUnits="userSpaceOnUse" x1="112" y1="0" x2="1986" y2="0"><stop offset="0.0000" stop-color="#6e5342"/><stop offset="0.0320" stop-color="#6e5342"/><stop offset="0.0640" stop-color="#6e5443"/><stop offset="0.0961" stop-color="#6f5544"/><stop offset="0.1281" stop-color="#6f5746"/><stop offset="0.1601" stop-color="#705746"/><stop offset="0.1921" stop-color="#705746"/><stop offset="0.2241" stop-color="#705847"/><stop offset="0.2561" stop-color="#6f5a48"/><stop offset="0.2882" stop-color="#6f5c48"/><stop offset="0.3202" stop-color="#6f5c48"/><stop offset="0.3522" stop-color="#6e5c49"/><stop offset="0.3842" stop-color="#6d5d4b"/><stop offset="0.4162" stop-color="#6b5e4e"/><stop offset="0.4482" stop-color="#6b5e4e"/><stop offset="0.4803" stop-color="#6a5f4f"/><stop offset="0.5123" stop-color="#676152"/><stop offset="0.5443" stop-color="#636456"/><stop offset="0.5763" stop-color="#616658"/><stop offset="0.6083" stop-color="#616659"/><stop offset="0.6403" stop-color="#5f675b"/><stop offset="0.6724" stop-color="#5c6960"/><stop offset="0.7044" stop-color="#5b6a62"/><stop offset="0.7364" stop-color="#5a6a63"/><stop offset="0.7684" stop-color="#5a6a64"/><stop offset="0.8004" stop-color="#596a67"/><stop offset="0.8324" stop-color="#596a69"/><stop offset="0.8645" stop-color="#596a69"/><stop offset="0.8965" stop-color="#5a6b6a"/><stop offset="0.9285" stop-color="#5c6e6e"/><stop offset="0.9605" stop-color="#5e6f71"/><stop offset="0.9925" stop-color="#5f7071"/><stop offset="1.0000" stop-color="#5f7071"/></linearGradient><linearGradient id="b91" gradientUnits="userSpaceOnUse" x1="112" y1="0" x2="1986" y2="0"><stop offset="0.0000" stop-color="#6e5342"/><stop offset="0.0320" stop-color="#6e5342"/><stop offset="0.0640" stop-color="#6e5443"/><stop offset="0.0961" stop-color="#6f5544"/><stop offset="0.1281" stop-color="#6f5745"/><stop offset="0.1601" stop-color="#705746"/><stop offset="0.1921" stop-color="#705746"/><stop offset="0.2241" stop-color="#705847"/><stop offset="0.2561" stop-color="#6f5a48"/><stop offset="0.2882" stop-color="#6f5c48"/><stop offset="0.3202" stop-color="#6f5c48"/><stop offset="0.3522" stop-color="#6e5c49"/><stop offset="0.3842" stop-color="#6d5d4b"/><stop offset="0.4162" stop-color="#6b5e4d"/><stop offset="0.4482" stop-color="#6b5e4e"/><stop offset="0.4803" stop-color="#6a5f4f"/><stop offset="0.5123" stop-color="#676152"/><stop offset="0.5443" stop-color="#636456"/><stop offset="0.5763" stop-color="#616658"/><stop offset="0.6083" stop-color="#616659"/><stop offset="0.6403" stop-color="#5f675b"/><stop offset="0.6724" stop-color="#5c6960"/><stop offset="0.7044" stop-color="#5b6a62"/><stop offset="0.7364" stop-color="#5a6a63"/><stop offset="0.7684" stop-color="#5a6a64"/><stop offset="0.8004" stop-color="#596a67"/><stop offset="0.8324" stop-color="#596a69"/><stop offset="0.8645" stop-color="#596a69"/><stop offset="0.8965" stop-color="#5a6b6a"/><stop offset="0.9285" stop-color="#5d6e6e"/><stop offset="0.9605" stop-color="#5e6f71"/><stop offset="0.9925" stop-color="#5f7071"/><stop offset="1.0000" stop-color="#5f7071"/></linearGradient><linearGradient id="b92" gradientUnits="userSpaceOnUse" x1="112" y1="0" x2="1986" y2="0"><stop offset="0.0000" stop-color="#6e5342"/><stop offset="0.0320" stop-color="#6e5342"/><stop offset="0.0640" stop-color="#6e5443"/><stop offset="0.0961" stop-color="#6f5544"/><stop offset="0.1281" stop-color="#6f5745"/><stop offset="0.1601" stop-color="#705746"/><stop offset="0.1921" stop-color="#705746"/><stop offset="0.2241" stop-color="#705847"/><stop offset="0.2561" stop-color="#6f5a48"/><stop offset="0.2882" stop-color="#6f5c48"/><stop offset="0.3202" stop-color="#6f5c48"/><stop offset="0.3522" stop-color="#6e5c49"/><stop offset="0.3842" stop-color="#6d5d4b"/><stop offset="0.4162" stop-color="#6b5e4d"/><stop offset="0.4482" stop-color="#6b5e4e"/><stop offset="0.4803" stop-color="#6a5f4f"/><stop offset="0.5123" stop-color="#676152"/><stop offset="0.5443" stop-color="#636456"/><stop offset="0.5763" stop-color="#616658"/><stop offset="0.6083" stop-color="#616659"/><stop offset="0.6403" stop-color="#5f675b"/><stop offset="0.6724" stop-color="#5c6960"/><stop offset="0.7044" stop-color="#5b6a62"/><stop offset="0.7364" stop-color="#5a6a63"/><stop offset="0.7684" stop-color="#5a6a64"/><stop offset="0.8004" stop-color="#596a67"/><stop offset="0.8324" stop-color="#596a69"/><stop offset="0.8645" stop-color="#596a69"/><stop offset="0.8965" stop-color="#5a6b6b"/><stop offset="0.9285" stop-color="#5d6e6e"/><stop offset="0.9605" stop-color="#5e6f71"/><stop offset="0.9925" stop-color="#5f7071"/><stop offset="1.0000" stop-color="#5f7071"/></linearGradient><linearGradient id="b93" gradientUnits="userSpaceOnUse" x1="112" y1="0" x2="1986" y2="0"><stop offset="0.0000" stop-color="#6e5342"/><stop offset="0.0320" stop-color="#6e5342"/><stop offset="0.0640" stop-color="#6e5443"/><stop offset="0.0961" stop-color="#6f5544"/><stop offset="0.1281" stop-color="#6f5745"/><stop offset="0.1601" stop-color="#705746"/><stop offset="0.1921" stop-color="#705746"/><stop offset="0.2241" stop-color="#6f5847"/><stop offset="0.2561" stop-color="#6f5a48"/><stop offset="0.2882" stop-color="#6f5b48"/><stop offset="0.3202" stop-color="#6f5c48"/><stop offset="0.3522" stop-color="#6e5c49"/><stop offset="0.3842" stop-color="#6d5d4b"/><stop offset="0.4162" stop-color="#6b5e4d"/><stop offset="0.4482" stop-color="#6b5e4e"/><stop offset="0.4803" stop-color="#6a5f4f"/><stop offset="0.5123" stop-color="#676152"/><stop offset="0.5443" stop-color="#636456"/><stop offset="0.5763" stop-color="#616658"/><stop offset="0.6083" stop-color="#616659"/><stop offset="0.6403" stop-color="#5f675c"/><stop offset="0.6724" stop-color="#5c6960"/><stop offset="0.7044" stop-color="#5b6a62"/><stop offset="0.7364" stop-color="#5a6a63"/><stop offset="0.7684" stop-color="#5a6a64"/><stop offset="0.8004" stop-color="#596a67"/><stop offset="0.8324" stop-color="#596a69"/><stop offset="0.8645" stop-color="#596a69"/><stop offset="0.8965" stop-color="#5a6b6b"/><stop offset="0.9285" stop-color="#5d6e6e"/><stop offset="0.9605" stop-color="#5e6f71"/><stop offset="0.9925" stop-color="#5f7071"/><stop offset="1.0000" stop-color="#5f7071"/></linearGradient><linearGradient id="gVel" gradientUnits="userSpaceOnUse" x1="0" y1="1117" x2="0" y2="1281"><stop offset="0" stop-color="#babbbc"/><stop offset="0.33" stop-color="#9ea3a1"/><stop offset="0.57" stop-color="#8a9291"/><stop offset="0.92" stop-color="#707775"/><stop offset="1" stop-color="#6c7371"/></linearGradient><filter id="blr" x="-20%" y="-20%" width="140%" height="140%"><feGaussianBlur stdDeviation="2.5"/></filter><clipPath id="cov1"><rect x="112" y="432" width="1874" height="540"/></clipPath><clipPath id="cb2"><rect x="112" y="973" width="1874" height="121"/></clipPath><clipPath id="cov2"><rect x="112" y="1096" width="1874" height="200"/></clipPath><clipPath id="cbot"><rect x="112" y="1298" width="1874" height="113"/></clipPath><mask id="gearm" maskUnits="userSpaceOnUse" x="1880" y="130" width="110" height="100"><rect x="1880" y="130" width="110" height="100" fill="#000"/><circle cx="1931.3" cy="178.3" r="33.8" fill="#fff"/><circle cx="1966.98" cy="198.90" r="14.6" fill="#000"/><circle cx="1931.30" cy="219.50" r="14.6" fill="#000"/><circle cx="1895.62" cy="198.90" r="14.6" fill="#000"/><circle cx="1895.62" cy="157.70" r="14.6" fill="#000"/><circle cx="1931.30" cy="137.10" r="14.6" fill="#000"/><circle cx="1966.98" cy="157.70" r="14.6" fill="#000"/></mask><clipPath id="kc563"><circle cx="563.4" cy="508" r="39"/></clipPath><clipPath id="kc998"><circle cx="998.7" cy="507.8" r="39"/></clipPath><clipPath id="kc1135"><circle cx="1135.5" cy="507.8" r="39"/></clipPath><clipPath id="kc1583"><circle cx="1583.6" cy="508" r="39"/></clipPath><clipPath id="kc498"><circle cx="498.5" cy="1175.5" r="39"/></clipPath><clipPath id="kc673"><circle cx="673.5" cy="1175" r="39"/></clipPath><clipPath id="kc850"><circle cx="850.7" cy="1175" r="39"/></clipPath></defs><rect x="112" y="132" width="1874" height="14.6" fill="url(#b0)"/><rect x="112" y="146" width="1874" height="14.6" fill="url(#b1)"/><rect x="112" y="160" width="1874" height="14.6" fill="url(#b2)"/><rect x="112" y="174" width="1874" height="14.6" fill="url(#b3)"/><rect x="112" y="188" width="1874" height="14.6" fill="url(#b4)"/><rect x="112" y="202" width="1874" height="14.6" fill="url(#b5)"/><rect x="112" y="216" width="1874" height="14.6" fill="url(#b6)"/><rect x="112" y="230" width="1874" height="14.6" fill="url(#b7)"/><rect x="112" y="244" width="1874" height="14.6" fill="url(#b8)"/><rect x="112" y="258" width="1874" height="14.6" fill="url(#b9)"/><rect x="112" y="272" width="1874" height="14.6" fill="url(#b10)"/><rect x="112" y="286" width="1874" height="14.6" fill="url(#b11)"/><rect x="112" y="300" width="1874" height="14.6" fill="url(#b12)"/><rect x="112" y="314" width="1874" height="14.6" fill="url(#b13)"/><rect x="112" y="328" width="1874" height="14.6" fill="url(#b14)"/><rect x="112" y="342" width="1874" height="14.6" fill="url(#b15)"/><rect x="112" y="356" width="1874" height="14.6" fill="url(#b16)"/><rect x="112" y="370" width="1874" height="14.6" fill="url(#b17)"/><rect x="112" y="384" width="1874" height="14.6" fill="url(#b18)"/><rect x="112" y="398" width="1874" height="14.6" fill="url(#b19)"/><rect x="112" y="412" width="1874" height="14.6" fill="url(#b20)"/><rect x="112" y="426" width="1874" height="5.6" fill="url(#b21)"/><rect x="112" y="432" width="1874" height="14.6" fill="url(#b22)"/><rect x="112" y="446" width="1874" height="14.6" fill="url(#b23)"/><rect x="112" y="460" width="1874" height="14.6" fill="url(#b24)"/><rect x="112" y="474" width="1874" height="14.6" fill="url(#b25)"/><rect x="112" y="488" width="1874" height="14.6" fill="url(#b26)"/><rect x="112" y="502" width="1874" height="14.6" fill="url(#b27)"/><rect x="112" y="516" width="1874" height="14.6" fill="url(#b28)"/><rect x="112" y="530" width="1874" height="14.6" fill="url(#b29)"/><rect x="112" y="544" width="1874" height="14.6" fill="url(#b30)"/><rect x="112" y="558" width="1874" height="14.6" fill="url(#b31)"/><rect x="112" y="572" width="1874" height="14.6" fill="url(#b32)"/><rect x="112" y="586" width="1874" height="14.6" fill="url(#b33)"/><rect x="112" y="600" width="1874" height="14.6" fill="url(#b34)"/><rect x="112" y="614" width="1874" height="14.6" fill="url(#b35)"/><rect x="112" y="628" width="1874" height="14.6" fill="url(#b36)"/><rect x="112" y="642" width="1874" height="14.6" fill="url(#b37)"/><rect x="112" y="656" width="1874" height="14.6" fill="url(#b38)"/><rect x="112" y="670" width="1874" height="14.6" fill="url(#b39)"/><rect x="112" y="684" width="1874" height="14.6" fill="url(#b40)"/><rect x="112" y="698" width="1874" height="14.6" fill="url(#b41)"/><rect x="112" y="712" width="1874" height="14.6" fill="url(#b42)"/><rect x="112" y="726" width="1874" height="14.6" fill="url(#b43)"/><rect x="112" y="740" width="1874" height="14.6" fill="url(#b44)"/><rect x="112" y="754" width="1874" height="14.6" fill="url(#b45)"/><rect x="112" y="768" width="1874" height="14.6" fill="url(#b46)"/><rect x="112" y="782" width="1874" height="14.6" fill="url(#b47)"/><rect x="112" y="796" width="1874" height="14.6" fill="url(#b48)"/><rect x="112" y="810" width="1874" height="14.6" fill="url(#b49)"/><rect x="112" y="824" width="1874" height="14.6" fill="url(#b50)"/><rect x="112" y="838" width="1874" height="14.6" fill="url(#b51)"/><rect x="112" y="852" width="1874" height="14.6" fill="url(#b52)"/><rect x="112" y="866" width="1874" height="14.6" fill="url(#b53)"/><rect x="112" y="880" width="1874" height="14.6" fill="url(#b54)"/><rect x="112" y="894" width="1874" height="14.6" fill="url(#b55)"/><rect x="112" y="908" width="1874" height="14.6" fill="url(#b56)"/><rect x="112" y="922" width="1874" height="14.6" fill="url(#b57)"/><rect x="112" y="936" width="1874" height="14.6" fill="url(#b58)"/><rect x="112" y="950" width="1874" height="14.6" fill="url(#b59)"/><rect x="112" y="964" width="1874" height="7.6" fill="url(#b60)"/><rect x="112" y="972" width="1874" height="14.6" fill="url(#b61)"/><rect x="112" y="986" width="1874" height="14.6" fill="url(#b62)"/><rect x="112" y="1000" width="1874" height="14.6" fill="url(#b63)"/><rect x="112" y="1014" width="1874" height="14.6" fill="url(#b64)"/><rect x="112" y="1028" width="1874" height="14.6" fill="url(#b65)"/><rect x="112" y="1042" width="1874" height="14.6" fill="url(#b66)"/><rect x="112" y="1056" width="1874" height="14.6" fill="url(#b67)"/><rect x="112" y="1070" width="1874" height="14.6" fill="url(#b68)"/><rect x="112" y="1084" width="1874" height="11.6" fill="url(#b69)"/><rect x="112" y="1096" width="1874" height="14.6" fill="url(#b70)"/><rect x="112" y="1110" width="1874" height="14.6" fill="url(#b71)"/><rect x="112" y="1124" width="1874" height="14.6" fill="url(#b72)"/><rect x="112" y="1138" width="1874" height="14.6" fill="url(#b73)"/><rect x="112" y="1152" width="1874" height="14.6" fill="url(#b74)"/><rect x="112" y="1166" width="1874" height="14.6" fill="url(#b75)"/><rect x="112" y="1180" width="1874" height="14.6" fill="url(#b76)"/><rect x="112" y="1194" width="1874" height="14.6" fill="url(#b77)"/><rect x="112" y="1208" width="1874" height="14.6" fill="url(#b78)"/><rect x="112" y="1222" width="1874" height="14.6" fill="url(#b79)"/><rect x="112" y="1236" width="1874" height="14.6" fill="url(#b80)"/><rect x="112" y="1250" width="1874" height="14.6" fill="url(#b81)"/><rect x="112" y="1264" width="1874" height="14.6" fill="url(#b82)"/><rect x="112" y="1278" width="1874" height="14.6" fill="url(#b83)"/><rect x="112" y="1292" width="1874" height="5.6" fill="url(#b84)"/><rect x="112" y="1298" width="1874" height="14.6" fill="url(#b85)"/><rect x="112" y="1312" width="1874" height="14.6" fill="url(#b86)"/><rect x="112" y="1326" width="1874" height="14.6" fill="url(#b87)"/><rect x="112" y="1340" width="1874" height="14.6" fill="url(#b88)"/><rect x="112" y="1354" width="1874" height="14.6" fill="url(#b89)"/><rect x="112" y="1368" width="1874" height="14.6" fill="url(#b90)"/><rect x="112" y="1382" width="1874" height="14.6" fill="url(#b91)"/><rect x="112" y="1396" width="1874" height="14.6" fill="url(#b92)"/><rect x="112" y="1410" width="1874" height="1.6" fill="url(#b93)"/><g clip-path="url(#cov1)"><line x1="1260.9" y1="521.4" x2="1345.1" y2="450.6" stroke="#000" stroke-opacity="0.08" stroke-width="26" stroke-linecap="butt" filter="url(#blr)"/><line x1="1302.2" y1="569.8" x2="1401.8" y2="486.2" stroke="#000" stroke-opacity="0.08" stroke-width="26" stroke-linecap="butt" filter="url(#blr)"/><line x1="1362.2" y1="623.8" x2="1461.8" y2="540.2" stroke="#000" stroke-opacity="0.07" stroke-width="26" stroke-linecap="butt" filter="url(#blr)"/></g><g clip-path="url(#cb2)"><line x1="446" y1="960" x2="486" y2="1058" stroke="#000" stroke-opacity="0.13" stroke-width="30" stroke-linecap="butt" filter="url(#blr)"/><line x1="550" y1="960" x2="574" y2="1018" stroke="#000" stroke-opacity="0.12" stroke-width="26" stroke-linecap="butt" filter="url(#blr)"/><line x1="608" y1="960" x2="618" y2="985" stroke="#000" stroke-opacity="0.1" stroke-width="24" stroke-linecap="butt" filter="url(#blr)"/><line x1="355" y1="960" x2="410" y2="1094" stroke="#000" stroke-opacity="0.1" stroke-width="4" stroke-linecap="butt" filter="url(#blr)"/><line x1="500" y1="1040" x2="540" y2="1094" stroke="#000" stroke-opacity="0.08" stroke-width="3" stroke-linecap="butt" filter="url(#blr)"/><line x1="595" y1="1015" x2="640" y2="1094" stroke="#000" stroke-opacity="0.08" stroke-width="3" stroke-linecap="butt" filter="url(#blr)"/><line x1="1715.4" y1="1054.0" x2="1822.6" y2="964.0" stroke="#000" stroke-opacity="0.09" stroke-width="20" stroke-linecap="butt" filter="url(#blr)"/><line x1="1743.5" y1="1088.2" x2="1858.5" y2="991.8" stroke="#000" stroke-opacity="0.09" stroke-width="24" stroke-linecap="butt" filter="url(#blr)"/><line x1="1831.7" y1="1091.4" x2="1954.3" y2="988.6" stroke="#fff" stroke-opacity="0.05" stroke-width="22" stroke-linecap="butt" filter="url(#blr)"/></g><g clip-path="url(#cov2)"><line x1="1806.2" y1="1172.8" x2="1905.8" y2="1089.2" stroke="#000" stroke-opacity="0.1" stroke-width="24" stroke-linecap="butt" filter="url(#blr)"/><line x1="1834.4" y1="1213.0" x2="1941.6" y2="1123.0" stroke="#000" stroke-opacity="0.1" stroke-width="24" stroke-linecap="butt" filter="url(#blr)"/><line x1="1871.4" y1="1251.0" x2="1978.6" y2="1161.0" stroke="#000" stroke-opacity="0.1" stroke-width="24" stroke-linecap="butt" filter="url(#blr)"/></g><g clip-path="url(#cbot)"><line x1="1800.7" y1="1415.7" x2="1969.3" y2="1274.3" stroke="#fff" stroke-opacity="0.05" stroke-width="40" stroke-linecap="butt" filter="url(#blr)"/><line x1="1863.4" y1="1394.3" x2="2016.6" y2="1265.7" stroke="#fff" stroke-opacity="0.04" stroke-width="24" stroke-linecap="butt" filter="url(#blr)"/></g><g opacity="1"><line x1="112" y1="228.5" x2="415" y2="227" stroke="#fff" stroke-opacity="0.06" stroke-width="2.5"/><line x1="112" y1="253.5" x2="464" y2="245" stroke="#fff" stroke-opacity="0.07" stroke-width="3"/><line x1="112" y1="294" x2="357" y2="292" stroke="#fff" stroke-opacity="0.06" stroke-width="2.5"/><line x1="420" y1="249" x2="420" y2="270" stroke="#fff" stroke-opacity="0.06" stroke-width="2"/><text x="0" y="0" transform="translate(409,286) rotate(180)" font-family="Liberation Sans" font-weight="bold" font-size="31" fill="#fff" fill-opacity="0.05" textLength="272" lengthAdjust="spacingAndGlyphs" dominant-baseline="hanging">subsequent 37</text><rect x="135" y="305" width="24" height="3" fill="#fff" fill-opacity="0.06"/><rect x="135" y="313" width="24" height="3" fill="#fff" fill-opacity="0.06"/><rect x="210" y="305" width="24" height="3" fill="#fff" fill-opacity="0.06"/><rect x="210" y="313" width="24" height="3" fill="#fff" fill-opacity="0.06"/><rect x="285" y="305" width="24" height="3" fill="#fff" fill-opacity="0.06"/><rect x="285" y="313" width="24" height="3" fill="#fff" fill-opacity="0.06"/></g><rect x="112" y="429.5" width="1874" height="2" fill="#ffffff" fill-opacity="0.32"/><rect x="112" y="970.8" width="1874" height="2" fill="#ffffff" fill-opacity="0.32"/><rect x="112" y="1093.8" width="1874" height="2" fill="#ffffff" fill-opacity="0.32"/><rect x="112" y="1296.2" width="1874" height="2" fill="#ffffff" fill-opacity="0.32"/><rect x="112" y="76" width="1874" height="56" fill="#535353"/><rect x="112" y="76" width="1874" height="1.2" fill="#8c8c8c"/><rect x="112" y="131.5" width="1874" height="1.6" fill="#1e1e1e"/><circle cx="140" cy="104" r="12.3" fill="#fd8449" stroke="#b35a2c" stroke-width="0.8"/><circle cx="180" cy="104" r="12.3" fill="#fd8449" stroke="#b35a2c" stroke-width="0.8"/><circle cx="220" cy="104" r="12.3" fill="#2dc140" stroke="#1f8a2c" stroke-width="0.8"/><path d="M130.7,133 H234 V199.5 Q234,211.5 222,211.5 H142.7 Q130.7,211.5 130.7,199.5 Z" fill="#000" fill-opacity="0.16"/><path d="M245,133 H333 V199.5 Q333,211.5 321,211.5 H257 Q245,211.5 245,199.5 Z" fill="#000" fill-opacity="0.16"/><path d="M342.9,133 H491.6 V199.5 Q491.6,211.5 479.6,211.5 H354.9 Q342.9,211.5 342.9,199.5 Z" fill="#000" fill-opacity="0.16"/><path d="M502.4,133 H606.8 V199.5 Q606.8,211.5 594.8,211.5 H514.4 Q502.4,211.5 502.4,199.5 Z" fill="#000" fill-opacity="0.42"/><rect x="661.2" y="145.7" width="572.3" height="64.6" fill="#000" fill-opacity="0.04" stroke="#8fa0a6" stroke-width="2.4"/><polyline points="1178,155 1153.5,178.5 1178,201.5" fill="none" stroke="#9aabb0" stroke-width="3.2"/><polyline points="1193,155 1218.5,178.5 1193,201.5" fill="none" stroke="#9aabb0" stroke-width="3.2"/><rect x="1286.7" y="144.3" width="91.3" height="31.4" rx="14" fill="#000" fill-opacity="0.22"/><rect x="1300" y="182.4" width="70" height="32" rx="15" fill="#000" fill-opacity="0.22"/><rect x="1388.5" y="145.3" width="159.5" height="25.399999999999977" fill="#000" fill-opacity="0.05" stroke="#d0d8da" stroke-width="2"/><rect x="1466" y="144.3" width="4.2" height="27.399999999999977" fill="#f6f8f8"/><rect x="1388.5" y="185.4" width="159.5" height="25.400000000000006" fill="#000" fill-opacity="0.05" stroke="#d0d8da" stroke-width="2"/><rect x="1466" y="184.4" width="4.2" height="27.400000000000006" fill="#f6f8f8"/><circle cx="1609.5" cy="179" r="28.5" fill="#3f3f40" stroke="#f4f4f4" stroke-width="3"/><polyline points="1596.8,189.6 1601.2,165.2 1609.8,184.2 1618.6,165.2 1623.6,189.6" fill="none" stroke="#f2f2f2" stroke-width="2.4" stroke-linejoin="miter" stroke-miterlimit="10"/><rect x="1663.8" y="145.4" width="196.4" height="30.19999999999999" fill="#4d4c4e" stroke="#a5aab0" stroke-width="3"/><rect x="1663.8" y="180.8" width="196.4" height="29.5" fill="#4d4c4e" stroke="#a5aab0" stroke-width="3"/><rect x="1880" y="130" width="110" height="100" fill="#eef0ee" mask="url(#gearm)"/><circle cx="1931.3" cy="178.3" r="19.2" fill="#3e414c"/><circle cx="1931.3" cy="178.3" r="17.5" fill="#55565e"/><circle cx="1927.3" cy="183.3" r="8" fill="#6a6450" fill-opacity="0.6"/><circle cx="1932.3" cy="177.3" r="7.5" fill="#2a2d3a"/><circle cx="361" cy="400.4" r="16.6" fill="#fbf8fa"/><circle cx="942" cy="398" r="16" fill="#000" fill-opacity="0.28"/><circle cx="1528" cy="398" r="16.5" fill="#fbfbfd"/><circle cx="360.8" cy="1062" r="16.2" fill="#000" fill-opacity="0.25"/><circle cx="1274.7" cy="1067" r="15.8" fill="#000" fill-opacity="0.28"/><rect x="371" y="566.5" width="113.19999999999999" height="29.100000000000023" rx="12.550000000000011" fill="#000" fill-opacity="0.3"/><rect x="510" y="566.5" width="113.79999999999995" height="29.100000000000023" rx="12.550000000000011" fill="#000" fill-opacity="0.3"/><rect x="938" y="565.5" width="117.40000000000009" height="31.5" rx="13.75" fill="#000" fill-opacity="0.3"/><rect x="1076.4" y="565.5" width="116.29999999999995" height="31.5" rx="13.75" fill="#000" fill-opacity="0.3"/><rect x="1522" y="565.5" width="116.20000000000005" height="31.5" rx="13.75" fill="#000" fill-opacity="0.3"/><rect x="1660.2" y="565.5" width="116.09999999999991" height="31.5" rx="13.75" fill="#000" fill-opacity="0.3"/><rect x="277.9" y="1234" width="116.40000000000003" height="33" rx="14.5" fill="#000" fill-opacity="0.3"/><rect x="423.4" y="1234" width="152.60000000000002" height="33" rx="14.5" fill="#000" fill-opacity="0.3"/><rect x="590" y="1234" width="187" height="32.5" rx="14.25" fill="#000" fill-opacity="0.3"/><rect x="790.7" y="1234" width="132.5" height="32.5" rx="14.25" fill="#000" fill-opacity="0.3"/><rect x="967.8" y="1234" width="117.79999999999995" height="32.5" rx="14.25" fill="#000" fill-opacity="0.3"/><rect x="273" y="633" width="465" height="248" fill="#2b2a2a" stroke="#a09c9a" stroke-width="2"/><polyline points="272.0,757.0 272.2,750.5 272.6,744.0 273.4,737.6 274.6,731.2 276.0,724.9 277.7,718.7 279.8,712.6 282.1,706.6 284.7,700.7 287.6,695.0 290.8,689.5 294.3,684.1 298.0,679.0 302.0,674.0 306.2,669.3 310.6,664.9 315.3,660.6 320.1,656.7 325.2,653.0 330.4,649.6 335.7,646.5 341.3,643.7 346.9,641.2 352.7,639.1 358.5,637.2 364.5,635.7 370.5,634.5 376.5,633.7 382.6,633.2 388.8,633.0 394.9,633.2 401.0,633.7 407.0,634.5 413.0,635.7 419.0,637.2 424.8,639.1 430.6,641.2 436.2,643.7 441.8,646.5 447.1,649.6 452.3,653.0 457.4,656.7 462.2,660.6 466.9,664.9 471.3,669.3 475.5,674.0 479.5,679.0 483.2,684.1 486.7,689.5 489.9,695.0 492.8,700.7 495.4,706.6 497.7,712.6 499.8,718.7 501.5,724.9 502.9,731.2 504.1,737.6 504.9,744.0 505.3,750.5 505.5,757.0 505.7,763.5 506.1,770.0 506.9,776.4 508.1,782.8 509.5,789.1 511.2,795.3 513.3,801.4 515.6,807.4 518.2,813.3 521.1,819.0 524.3,824.5 527.8,829.9 531.5,835.0 535.5,840.0 539.7,844.7 544.1,849.1 548.8,853.4 553.6,857.3 558.7,861.0 563.9,864.4 569.2,867.5 574.8,870.3 580.4,872.8 586.2,874.9 592.0,876.8 598.0,878.3 604.0,879.5 610.0,880.3 616.1,880.8 622.2,881.0 628.4,880.8 634.5,880.3 640.5,879.5 646.5,878.3 652.5,876.8 658.3,874.9 664.1,872.8 669.7,870.3 675.3,867.5 680.6,864.4 685.8,861.0 690.9,857.3 695.7,853.4 700.4,849.1 704.8,844.7 709.0,840.0 713.0,835.0 716.7,829.9 720.2,824.5 723.4,819.0 726.3,813.3 728.9,807.4 731.2,801.4 733.3,795.3 735.0,789.1 736.4,782.8 737.6,776.4 738.4,770.0 738.8,763.5 739.0,757.0" fill="none" stroke="#d4d4d4" stroke-width="3"/><rect x="853" y="633" width="465" height="248" fill="#2b2a2a" stroke="#a09c9a" stroke-width="2"/><polyline points="852.0,757.0 852.2,750.5 852.6,744.0 853.4,737.6 854.6,731.2 856.0,724.9 857.7,718.7 859.8,712.6 862.1,706.6 864.7,700.7 867.6,695.0 870.8,689.5 874.3,684.1 878.0,679.0 882.0,674.0 886.2,669.3 890.6,664.9 895.3,660.6 900.1,656.7 905.2,653.0 910.4,649.6 915.7,646.5 921.3,643.7 926.9,641.2 932.7,639.1 938.5,637.2 944.5,635.7 950.5,634.5 956.5,633.7 962.6,633.2 968.8,633.0 974.9,633.2 981.0,633.7 987.0,634.5 993.0,635.7 999.0,637.2 1004.8,639.1 1010.6,641.2 1016.2,643.7 1021.8,646.5 1027.1,649.6 1032.3,653.0 1037.4,656.7 1042.2,660.6 1046.9,664.9 1051.3,669.3 1055.5,674.0 1059.5,679.0 1063.2,684.1 1066.7,689.5 1069.9,695.0 1072.8,700.7 1075.4,706.6 1077.7,712.6 1079.8,718.7 1081.5,724.9 1082.9,731.2 1084.1,737.6 1084.9,744.0 1085.3,750.5 1085.5,757.0 1085.7,763.5 1086.1,770.0 1086.9,776.4 1088.1,782.8 1089.5,789.1 1091.2,795.3 1093.3,801.4 1095.6,807.4 1098.2,813.3 1101.1,819.0 1104.3,824.5 1107.8,829.9 1111.5,835.0 1115.5,840.0 1119.7,844.7 1124.1,849.1 1128.8,853.4 1133.6,857.3 1138.7,861.0 1143.9,864.4 1149.2,867.5 1154.8,870.3 1160.4,872.8 1166.2,874.9 1172.0,876.8 1178.0,878.3 1184.0,879.5 1190.0,880.3 1196.1,880.8 1202.2,881.0 1208.4,880.8 1214.5,880.3 1220.5,879.5 1226.5,878.3 1232.5,876.8 1238.3,874.9 1244.1,872.8 1249.7,870.3 1255.3,867.5 1260.6,864.4 1265.8,861.0 1270.9,857.3 1275.7,853.4 1280.4,849.1 1284.8,844.7 1289.0,840.0 1293.0,835.0 1296.7,829.9 1300.2,824.5 1303.4,819.0 1306.3,813.3 1308.9,807.4 1311.2,801.4 1313.3,795.3 1315.0,789.1 1316.4,782.8 1317.6,776.4 1318.4,770.0 1318.8,763.5 1319.0,757.0" fill="none" stroke="#d4d4d4" stroke-width="3"/><rect x="1431.5" y="633" width="464.0999999999999" height="248" fill="#2b2a2a" stroke="#a09c9a" stroke-width="2"/><polyline points="1430.5,757.0 1430.7,750.5 1431.1,744.0 1431.9,737.6 1433.0,731.2 1434.5,724.9 1436.2,718.7 1438.2,712.6 1440.6,706.6 1443.2,700.7 1446.1,695.0 1449.3,689.5 1452.8,684.1 1456.5,679.0 1460.4,674.0 1464.6,669.3 1469.1,664.9 1473.7,660.6 1478.5,656.7 1483.6,653.0 1488.8,649.6 1494.1,646.5 1499.6,643.7 1505.3,641.2 1511.0,639.1 1516.9,637.2 1522.8,635.7 1528.8,634.5 1534.8,633.7 1540.9,633.2 1547.0,633.0 1553.1,633.2 1559.2,633.7 1565.3,634.5 1571.3,635.7 1577.2,637.2 1583.0,639.1 1588.8,641.2 1594.4,643.7 1599.9,646.5 1605.3,649.6 1610.5,653.0 1615.5,656.7 1620.4,660.6 1625.0,664.9 1629.4,669.3 1633.6,674.0 1637.6,679.0 1641.3,684.1 1644.8,689.5 1647.9,695.0 1650.8,700.7 1653.5,706.6 1655.8,712.6 1657.8,718.7 1659.6,724.9 1661.0,731.2 1662.1,737.6 1662.9,744.0 1663.4,750.5 1663.6,757.0 1663.7,763.5 1664.2,770.0 1665.0,776.4 1666.1,782.8 1667.5,789.1 1669.3,795.3 1671.3,801.4 1673.6,807.4 1676.3,813.3 1679.2,819.0 1682.3,824.5 1685.8,829.9 1689.5,835.0 1693.5,840.0 1697.7,844.7 1702.1,849.1 1706.7,853.4 1711.6,857.3 1716.6,861.0 1721.8,864.4 1727.2,867.5 1732.7,870.3 1738.3,872.8 1744.1,874.9 1749.9,876.8 1755.8,878.3 1761.8,879.5 1767.9,880.3 1774.0,880.8 1780.1,881.0 1786.2,880.8 1792.3,880.3 1798.3,879.5 1804.3,878.3 1810.2,876.8 1816.1,874.9 1821.8,872.8 1827.5,870.3 1833.0,867.5 1838.3,864.4 1843.5,861.0 1848.6,857.3 1853.4,853.4 1858.0,849.1 1862.5,844.7 1866.7,840.0 1870.6,835.0 1874.3,829.9 1877.8,824.5 1881.0,819.0 1883.9,813.3 1886.5,807.4 1888.9,801.4 1890.9,795.3 1892.6,789.1 1894.1,782.8 1895.2,776.4 1896.0,770.0 1896.4,763.5 1896.6,757.0" fill="none" stroke="#d4d4d4" stroke-width="3"/><rect x="387.5" y="896.5" width="249.0" height="54.8" rx="27" fill="#000" fill-opacity="0.38"/><polygon points="597.0,922.7 621.0,922.7 609.0,909.6" fill="#aaaaaa"/><polygon points="597.0,927.4 621.0,927.4 609.0,939.6" fill="#aaaaaa"/><rect x="961.5" y="896.5" width="250.29999999999995" height="54.8" rx="27" fill="#000" fill-opacity="0.38"/><polygon points="1172.3,922.7 1196.3,922.7 1184.3,909.6" fill="#aaaaaa"/><polygon points="1172.3,927.4 1196.3,927.4 1184.3,939.6" fill="#aaaaaa"/><rect x="1538" y="896.5" width="247.79999999999995" height="54.8" rx="27" fill="#000" fill-opacity="0.38"/><polygon points="1746.3,922.7 1770.3,922.7 1758.3,909.6" fill="#aaaaaa"/><polygon points="1746.3,927.4 1770.3,927.4 1758.3,939.6" fill="#aaaaaa"/><circle cx="423.4" cy="508" r="41" fill="#363636" stroke="#f6f4f4" stroke-width="5"/><line x1="423.4" y1="508" x2="397.3" y2="536.9" stroke="#f6f4f4" stroke-width="5"/><circle cx="563.4" cy="508" r="41" fill="#4b5466" stroke="#f6f4f4" stroke-width="5"/><path d="M523.4,480 Q563.4,466 603.4,480" fill="none" stroke="#ffffff" stroke-opacity="0.06" stroke-width="3" clip-path="url(#kc563)"/><path d="M523.4,489 Q563.4,475 603.4,489" fill="none" stroke="#ffffff" stroke-opacity="0.06" stroke-width="3" clip-path="url(#kc563)"/><path d="M523.4,498 Q563.4,484 603.4,498" fill="none" stroke="#ffffff" stroke-opacity="0.06" stroke-width="3" clip-path="url(#kc563)"/><path d="M523.4,507 Q563.4,493 603.4,507" fill="none" stroke="#ffffff" stroke-opacity="0.06" stroke-width="3" clip-path="url(#kc563)"/><path d="M523.4,516 Q563.4,502 603.4,516" fill="none" stroke="#ffffff" stroke-opacity="0.06" stroke-width="3" clip-path="url(#kc563)"/><path d="M523.4,525 Q563.4,511 603.4,525" fill="none" stroke="#ffffff" stroke-opacity="0.06" stroke-width="3" clip-path="url(#kc563)"/><path d="M523.4,534 Q563.4,520 603.4,534" fill="none" stroke="#ffffff" stroke-opacity="0.06" stroke-width="3" clip-path="url(#kc563)"/><path d="M523.4,543 Q563.4,529 603.4,543" fill="none" stroke="#ffffff" stroke-opacity="0.06" stroke-width="3" clip-path="url(#kc563)"/><path d="M523.4,552 Q563.4,538 603.4,552" fill="none" stroke="#ffffff" stroke-opacity="0.06" stroke-width="3" clip-path="url(#kc563)"/><path d="M523.4,561 Q563.4,547 603.4,561" fill="none" stroke="#ffffff" stroke-opacity="0.06" stroke-width="3" clip-path="url(#kc563)"/><line x1="563.4" y1="508" x2="539.5" y2="479" stroke="#f6f4f4" stroke-width="5"/><circle cx="998.7" cy="507.8" r="41" fill="#56566a" stroke="#f6f4f4" stroke-width="5"/><path d="M958.7,479.8 Q998.7,465.8 1038.7,479.8" fill="none" stroke="#ffffff" stroke-opacity="0.06" stroke-width="3" clip-path="url(#kc998)"/><path d="M958.7,488.8 Q998.7,474.8 1038.7,488.8" fill="none" stroke="#ffffff" stroke-opacity="0.06" stroke-width="3" clip-path="url(#kc998)"/><path d="M958.7,497.8 Q998.7,483.8 1038.7,497.8" fill="none" stroke="#ffffff" stroke-opacity="0.06" stroke-width="3" clip-path="url(#kc998)"/><path d="M958.7,506.8 Q998.7,492.8 1038.7,506.8" fill="none" stroke="#ffffff" stroke-opacity="0.06" stroke-width="3" clip-path="url(#kc998)"/><path d="M958.7,515.8 Q998.7,501.8 1038.7,515.8" fill="none" stroke="#ffffff" stroke-opacity="0.06" stroke-width="3" clip-path="url(#kc998)"/><path d="M958.7,524.8 Q998.7,510.79999999999995 1038.7,524.8" fill="none" stroke="#ffffff" stroke-opacity="0.06" stroke-width="3" clip-path="url(#kc998)"/><path d="M958.7,533.8 Q998.7,519.8 1038.7,533.8" fill="none" stroke="#ffffff" stroke-opacity="0.06" stroke-width="3" clip-path="url(#kc998)"/><path d="M958.7,542.8 Q998.7,528.8 1038.7,542.8" fill="none" stroke="#ffffff" stroke-opacity="0.06" stroke-width="3" clip-path="url(#kc998)"/><path d="M958.7,551.8 Q998.7,537.8 1038.7,551.8" fill="none" stroke="#ffffff" stroke-opacity="0.06" stroke-width="3" clip-path="url(#kc998)"/><path d="M958.7,560.8 Q998.7,546.8 1038.7,560.8" fill="none" stroke="#ffffff" stroke-opacity="0.06" stroke-width="3" clip-path="url(#kc998)"/><line x1="998.7" y1="507.8" x2="1018.5" y2="472.5" stroke="#f6f4f4" stroke-width="5"/><circle cx="1135.5" cy="507.8" r="41" fill="#575b70" stroke="#f6f4f4" stroke-width="5"/><path d="M1095.5,479.8 Q1135.5,465.8 1175.5,479.8" fill="none" stroke="#ffffff" stroke-opacity="0.06" stroke-width="3" clip-path="url(#kc1135)"/><path d="M1095.5,488.8 Q1135.5,474.8 1175.5,488.8" fill="none" stroke="#ffffff" stroke-opacity="0.06" stroke-width="3" clip-path="url(#kc1135)"/><path d="M1095.5,497.8 Q1135.5,483.8 1175.5,497.8" fill="none" stroke="#ffffff" stroke-opacity="0.06" stroke-width="3" clip-path="url(#kc1135)"/><path d="M1095.5,506.8 Q1135.5,492.8 1175.5,506.8" fill="none" stroke="#ffffff" stroke-opacity="0.06" stroke-width="3" clip-path="url(#kc1135)"/><path d="M1095.5,515.8 Q1135.5,501.8 1175.5,515.8" fill="none" stroke="#ffffff" stroke-opacity="0.06" stroke-width="3" clip-path="url(#kc1135)"/><path d="M1095.5,524.8 Q1135.5,510.79999999999995 1175.5,524.8" fill="none" stroke="#ffffff" stroke-opacity="0.06" stroke-width="3" clip-path="url(#kc1135)"/><path d="M1095.5,533.8 Q1135.5,519.8 1175.5,533.8" fill="none" stroke="#ffffff" stroke-opacity="0.06" stroke-width="3" clip-path="url(#kc1135)"/><path d="M1095.5,542.8 Q1135.5,528.8 1175.5,542.8" fill="none" stroke="#ffffff" stroke-opacity="0.06" stroke-width="3" clip-path="url(#kc1135)"/><path d="M1095.5,551.8 Q1135.5,537.8 1175.5,551.8" fill="none" stroke="#ffffff" stroke-opacity="0.06" stroke-width="3" clip-path="url(#kc1135)"/><path d="M1095.5,560.8 Q1135.5,546.8 1175.5,560.8" fill="none" stroke="#ffffff" stroke-opacity="0.06" stroke-width="3" clip-path="url(#kc1135)"/><line x1="1135.5" y1="507.8" x2="1142" y2="467.7" stroke="#f6f4f4" stroke-width="5"/><circle cx="1583.6" cy="508" r="41" fill="#5c5a6c" stroke="#f6f4f4" stroke-width="5"/><path d="M1543.6,480 Q1583.6,466 1623.6,480" fill="none" stroke="#ffffff" stroke-opacity="0.06" stroke-width="3" clip-path="url(#kc1583)"/><path d="M1543.6,489 Q1583.6,475 1623.6,489" fill="none" stroke="#ffffff" stroke-opacity="0.06" stroke-width="3" clip-path="url(#kc1583)"/><path d="M1543.6,498 Q1583.6,484 1623.6,498" fill="none" stroke="#ffffff" stroke-opacity="0.06" stroke-width="3" clip-path="url(#kc1583)"/><path d="M1543.6,507 Q1583.6,493 1623.6,507" fill="none" stroke="#ffffff" stroke-opacity="0.06" stroke-width="3" clip-path="url(#kc1583)"/><path d="M1543.6,516 Q1583.6,502 1623.6,516" fill="none" stroke="#ffffff" stroke-opacity="0.06" stroke-width="3" clip-path="url(#kc1583)"/><path d="M1543.6,525 Q1583.6,511 1623.6,525" fill="none" stroke="#ffffff" stroke-opacity="0.06" stroke-width="3" clip-path="url(#kc1583)"/><path d="M1543.6,534 Q1583.6,520 1623.6,534" fill="none" stroke="#ffffff" stroke-opacity="0.06" stroke-width="3" clip-path="url(#kc1583)"/><path d="M1543.6,543 Q1583.6,529 1623.6,543" fill="none" stroke="#ffffff" stroke-opacity="0.06" stroke-width="3" clip-path="url(#kc1583)"/><path d="M1543.6,552 Q1583.6,538 1623.6,552" fill="none" stroke="#ffffff" stroke-opacity="0.06" stroke-width="3" clip-path="url(#kc1583)"/><path d="M1543.6,561 Q1583.6,547 1623.6,561" fill="none" stroke="#ffffff" stroke-opacity="0.06" stroke-width="3" clip-path="url(#kc1583)"/><line x1="1583.6" y1="508" x2="1602" y2="476" stroke="#f6f4f4" stroke-width="5"/><circle cx="1718.8" cy="508" r="41" fill="#35475a" stroke="#f6f4f4" stroke-width="5"/><line x1="1718.8" y1="508" x2="1678" y2="509" stroke="#f6f4f4" stroke-width="5"/><circle cx="333.3" cy="1175.9" r="41" fill="#374a5e" stroke="#f6f4f4" stroke-width="5"/><line x1="333.3" y1="1175.9" x2="295.2" y2="1184.5" stroke="#f6f4f4" stroke-width="5"/><circle cx="498.5" cy="1175.5" r="41" fill="#5a5462" stroke="#f6f4f4" stroke-width="5"/><path d="M458.5,1147.5 Q498.5,1133.5 538.5,1147.5" fill="none" stroke="#ffffff" stroke-opacity="0.06" stroke-width="3" clip-path="url(#kc498)"/><path d="M458.5,1156.5 Q498.5,1142.5 538.5,1156.5" fill="none" stroke="#ffffff" stroke-opacity="0.06" stroke-width="3" clip-path="url(#kc498)"/><path d="M458.5,1165.5 Q498.5,1151.5 538.5,1165.5" fill="none" stroke="#ffffff" stroke-opacity="0.06" stroke-width="3" clip-path="url(#kc498)"/><path d="M458.5,1174.5 Q498.5,1160.5 538.5,1174.5" fill="none" stroke="#ffffff" stroke-opacity="0.06" stroke-width="3" clip-path="url(#kc498)"/><path d="M458.5,1183.5 Q498.5,1169.5 538.5,1183.5" fill="none" stroke="#ffffff" stroke-opacity="0.06" stroke-width="3" clip-path="url(#kc498)"/><path d="M458.5,1192.5 Q498.5,1178.5 538.5,1192.5" fill="none" stroke="#ffffff" stroke-opacity="0.06" stroke-width="3" clip-path="url(#kc498)"/><path d="M458.5,1201.5 Q498.5,1187.5 538.5,1201.5" fill="none" stroke="#ffffff" stroke-opacity="0.06" stroke-width="3" clip-path="url(#kc498)"/><path d="M458.5,1210.5 Q498.5,1196.5 538.5,1210.5" fill="none" stroke="#ffffff" stroke-opacity="0.06" stroke-width="3" clip-path="url(#kc498)"/><path d="M458.5,1219.5 Q498.5,1205.5 538.5,1219.5" fill="none" stroke="#ffffff" stroke-opacity="0.06" stroke-width="3" clip-path="url(#kc498)"/><path d="M458.5,1228.5 Q498.5,1214.5 538.5,1228.5" fill="none" stroke="#ffffff" stroke-opacity="0.06" stroke-width="3" clip-path="url(#kc498)"/><line x1="498.5" y1="1175.5" x2="537.4" y2="1171" stroke="#f6f4f4" stroke-width="5"/><circle cx="673.5" cy="1175" r="41" fill="#5a5a6c" stroke="#f6f4f4" stroke-width="5"/><path d="M633.5,1147 Q673.5,1133 713.5,1147" fill="none" stroke="#ffffff" stroke-opacity="0.06" stroke-width="3" clip-path="url(#kc673)"/><path d="M633.5,1156 Q673.5,1142 713.5,1156" fill="none" stroke="#ffffff" stroke-opacity="0.06" stroke-width="3" clip-path="url(#kc673)"/><path d="M633.5,1165 Q673.5,1151 713.5,1165" fill="none" stroke="#ffffff" stroke-opacity="0.06" stroke-width="3" clip-path="url(#kc673)"/><path d="M633.5,1174 Q673.5,1160 713.5,1174" fill="none" stroke="#ffffff" stroke-opacity="0.06" stroke-width="3" clip-path="url(#kc673)"/><path d="M633.5,1183 Q673.5,1169 713.5,1183" fill="none" stroke="#ffffff" stroke-opacity="0.06" stroke-width="3" clip-path="url(#kc673)"/><path d="M633.5,1192 Q673.5,1178 713.5,1192" fill="none" stroke="#ffffff" stroke-opacity="0.06" stroke-width="3" clip-path="url(#kc673)"/><path d="M633.5,1201 Q673.5,1187 713.5,1201" fill="none" stroke="#ffffff" stroke-opacity="0.06" stroke-width="3" clip-path="url(#kc673)"/><path d="M633.5,1210 Q673.5,1196 713.5,1210" fill="none" stroke="#ffffff" stroke-opacity="0.06" stroke-width="3" clip-path="url(#kc673)"/><path d="M633.5,1219 Q673.5,1205 713.5,1219" fill="none" stroke="#ffffff" stroke-opacity="0.06" stroke-width="3" clip-path="url(#kc673)"/><path d="M633.5,1228 Q673.5,1214 713.5,1228" fill="none" stroke="#ffffff" stroke-opacity="0.06" stroke-width="3" clip-path="url(#kc673)"/><line x1="673.5" y1="1175" x2="702.7" y2="1149.7" stroke="#f6f4f4" stroke-width="5"/><circle cx="850.7" cy="1175" r="41" fill="#3e5068" stroke="#f6f4f4" stroke-width="5"/><path d="M810.7,1147 Q850.7,1133 890.7,1147" fill="none" stroke="#ffffff" stroke-opacity="0.06" stroke-width="3" clip-path="url(#kc850)"/><path d="M810.7,1156 Q850.7,1142 890.7,1156" fill="none" stroke="#ffffff" stroke-opacity="0.06" stroke-width="3" clip-path="url(#kc850)"/><path d="M810.7,1165 Q850.7,1151 890.7,1165" fill="none" stroke="#ffffff" stroke-opacity="0.06" stroke-width="3" clip-path="url(#kc850)"/><path d="M810.7,1174 Q850.7,1160 890.7,1174" fill="none" stroke="#ffffff" stroke-opacity="0.06" stroke-width="3" clip-path="url(#kc850)"/><path d="M810.7,1183 Q850.7,1169 890.7,1183" fill="none" stroke="#ffffff" stroke-opacity="0.06" stroke-width="3" clip-path="url(#kc850)"/><path d="M810.7,1192 Q850.7,1178 890.7,1192" fill="none" stroke="#ffffff" stroke-opacity="0.06" stroke-width="3" clip-path="url(#kc850)"/><path d="M810.7,1201 Q850.7,1187 890.7,1201" fill="none" stroke="#ffffff" stroke-opacity="0.06" stroke-width="3" clip-path="url(#kc850)"/><path d="M810.7,1210 Q850.7,1196 890.7,1210" fill="none" stroke="#ffffff" stroke-opacity="0.06" stroke-width="3" clip-path="url(#kc850)"/><path d="M810.7,1219 Q850.7,1205 890.7,1219" fill="none" stroke="#ffffff" stroke-opacity="0.06" stroke-width="3" clip-path="url(#kc850)"/><path d="M810.7,1228 Q850.7,1214 890.7,1228" fill="none" stroke="#ffffff" stroke-opacity="0.06" stroke-width="3" clip-path="url(#kc850)"/><line x1="850.7" y1="1175" x2="809" y2="1168.3" stroke="#f6f4f4" stroke-width="5"/><circle cx="1023" cy="1175" r="41" fill="#363636" stroke="#f6f4f4" stroke-width="5"/><line x1="1023" y1="1175" x2="996.4" y2="1208" stroke="#f6f4f4" stroke-width="5"/><rect x="1258" y="1117.3" width="532" height="164" fill="none" stroke="#ffffff" stroke-opacity="0.08" stroke-width="1.5"/><polygon points="1258,1156.5 1790,1117.3 1790,1281.4 1258,1281.4" fill="url(#gVel)" stroke="#f0f2f2" stroke-width="2.2"/><rect x="1259" y="1146" width="12" height="20" rx="3" fill="none" stroke="#ffffff" stroke-opacity="0.35" stroke-width="1.5"/><rect x="1259" y="1264" width="16" height="17" rx="4" fill="none" stroke="#ffffff" stroke-opacity="0.35" stroke-width="1.5"/><rect x="1773" y="1118" width="16" height="18" rx="4" fill="none" stroke="#ffffff" stroke-opacity="0.35" stroke-width="1.5"/><rect x="112.6" y="76.6" width="1872.8" height="1333.8" rx="17.5" fill="none" stroke="#9a9a9a" stroke-opacity="0.75" stroke-width="1.3"/><rect x="113.5" y="1408.8" width="1871" height="1" fill="#222" fill-opacity="0.7"/></svg>
<div class="t" style="left:936.33px;top:87.95px;font-size:27.83px;line-height:27.83px;font-weight:bold;color:#d2d2d2;transform:scaleX(0.9721)">Retro Synthstack</div><div class="t" style="left:141.82px;top:165.10px;font-size:33.77px;line-height:33.77px;font-weight:normal;color:#ddd8dc;transform:scaleX(0.9900);-webkit-text-stroke:0.76px #44393e">MAIN</div><div class="t" style="left:260.00px;top:165.10px;font-size:33.77px;line-height:33.77px;font-weight:normal;color:#ddd8dc;transform:scaleX(0.8618);-webkit-text-stroke:0.87px #443a3e">ARP</div><div class="t" style="left:354.04px;top:165.65px;font-size:32.17px;line-height:32.17px;font-weight:normal;color:#e2e2e4;transform:scaleX(0.8305);-webkit-text-stroke:0.90px #443c41">EFFECTS</div><div class="t" style="left:514.57px;top:165.65px;font-size:32.17px;line-height:32.17px;font-weight:normal;color:#f4f4f4;transform:scaleX(1.0627);-webkit-text-stroke:0.42px #2f2f32">MOD</div><div class="t" style="left:1299.33px;top:145.92px;font-size:27.97px;line-height:27.97px;font-weight:normal;color:#c9d1d4;transform:scaleX(0.8330);-webkit-text-stroke:0.90px #3d4a50">PITCH</div><div class="t" style="left:1308.75px;top:186.83px;font-size:26.09px;line-height:26.09px;font-weight:normal;color:#c9d1d4;transform:scaleX(0.9759);-webkit-text-stroke:0.77px #3d4b50">PAN</div><div class="t" style="left:391.99px;top:382.56px;font-size:32.75px;line-height:32.75px;font-weight:normal;color:#f2eef0;transform:scaleX(0.9097);-webkit-text-stroke:0.82px #584d52">GAIN LFO</div><div class="t" style="left:976.26px;top:383.52px;font-size:31.74px;line-height:31.74px;font-weight:normal;color:#eef2f2;transform:scaleX(0.8712);-webkit-text-stroke:0.86px #505f64">PITCH LFO</div><div class="t" style="left:1558.40px;top:383.90px;font-size:31.88px;line-height:31.88px;font-weight:normal;color:#eef0f2;transform:scaleX(0.7989);-webkit-text-stroke:0.94px #4f5d68">FILTER LFO</div><div class="t" style="left:384.72px;top:566.36px;font-size:28.99px;line-height:28.99px;font-weight:normal;color:#e6e2de;transform:scaleX(0.8392);-webkit-text-stroke:0.89px #2e2725">DEPTH</div><div class="t" style="left:527.77px;top:566.36px;font-size:28.99px;line-height:28.99px;font-weight:normal;color:#e6e2de;transform:scaleX(0.8288);-webkit-text-stroke:0.90px #2f2925">SPEED</div><div class="t" style="left:952.60px;top:566.06px;font-size:28.99px;line-height:28.99px;font-weight:normal;color:#e6e8e8;transform:scaleX(0.8498);-webkit-text-stroke:0.88px #2b2f2d">DEPTH</div><div class="t" style="left:1096.47px;top:566.06px;font-size:28.99px;line-height:28.99px;font-weight:normal;color:#e6e8e8;transform:scaleX(0.8319);-webkit-text-stroke:0.90px #28302e">SPEED</div><div class="t" style="left:1536.40px;top:565.33px;font-size:30.43px;line-height:30.43px;font-weight:normal;color:#e6e8ea;transform:scaleX(0.7979);-webkit-text-stroke:0.94px #272f30">DEPTH</div><div class="t" style="left:1679.41px;top:565.33px;font-size:30.43px;line-height:30.43px;font-weight:normal;color:#e6e8ea;transform:scaleX(0.7918);-webkit-text-stroke:0.95px #272e30">SPEED</div><div class="t" style="left:389.21px;top:1046.99px;font-size:31.30px;line-height:31.30px;font-weight:normal;color:#f2ece6;transform:scaleX(0.8941);-webkit-text-stroke:0.84px #785f4e">GLIDE</div><div class="t" style="left:1308.60px;top:1052.41px;font-size:31.16px;line-height:31.16px;font-weight:normal;color:#eef2f0;transform:scaleX(0.8915);-webkit-text-stroke:0.84px #596964">VELOCITY CURVE</div><div class="t" style="left:310.00px;top:1236.41px;font-size:28.70px;line-height:28.70px;font-weight:normal;color:#e8e2dc;transform:scaleX(0.8414);-webkit-text-stroke:0.89px #332822">TIME</div><div class="t" style="left:430.12px;top:1236.41px;font-size:28.70px;line-height:28.70px;font-weight:normal;color:#e8e2dc;transform:scaleX(0.9386);-webkit-text-stroke:0.80px #362d25">RANGE UP</div><div class="t" style="left:596.66px;top:1236.41px;font-size:28.70px;line-height:28.70px;font-weight:normal;color:#e8e2dc;transform:scaleX(0.9715);-webkit-text-stroke:0.77px #362e25">RANGE DWN</div><div class="t" style="left:798.34px;top:1236.41px;font-size:28.70px;line-height:28.70px;font-weight:normal;color:#e8e2dc;transform:scaleX(0.9555);-webkit-text-stroke:0.78px #322b22">SMOOTH</div><div class="t" style="left:996.82px;top:1236.41px;font-size:28.70px;line-height:28.70px;font-weight:normal;color:#e8e4e0;transform:scaleX(0.7763);-webkit-text-stroke:0.97px #2f2c25">SPLIT</div><div class="t" style="left:406.90px;top:911.07px;font-size:27.68px;line-height:27.68px;font-weight:normal;color:#b4b0ac;transform:scaleX(0.9038)">Sine</div><div class="t" style="left:980.90px;top:911.07px;font-size:27.68px;line-height:27.68px;font-weight:normal;color:#b4b4b2;transform:scaleX(0.9038)">Sine</div><div class="t" style="left:1556.80px;top:911.07px;font-size:27.68px;line-height:27.68px;font-weight:normal;color:#b4b6b6;transform:scaleX(0.9038)">Sine</div><div class="t" style="left:797.65px;top:161.36px;font-size:28.99px;line-height:28.99px;font-weight:normal;color:#f6f8f8;transform:scaleX(1.0256)">Melody in Minor</div>
</div>
</body></html>
